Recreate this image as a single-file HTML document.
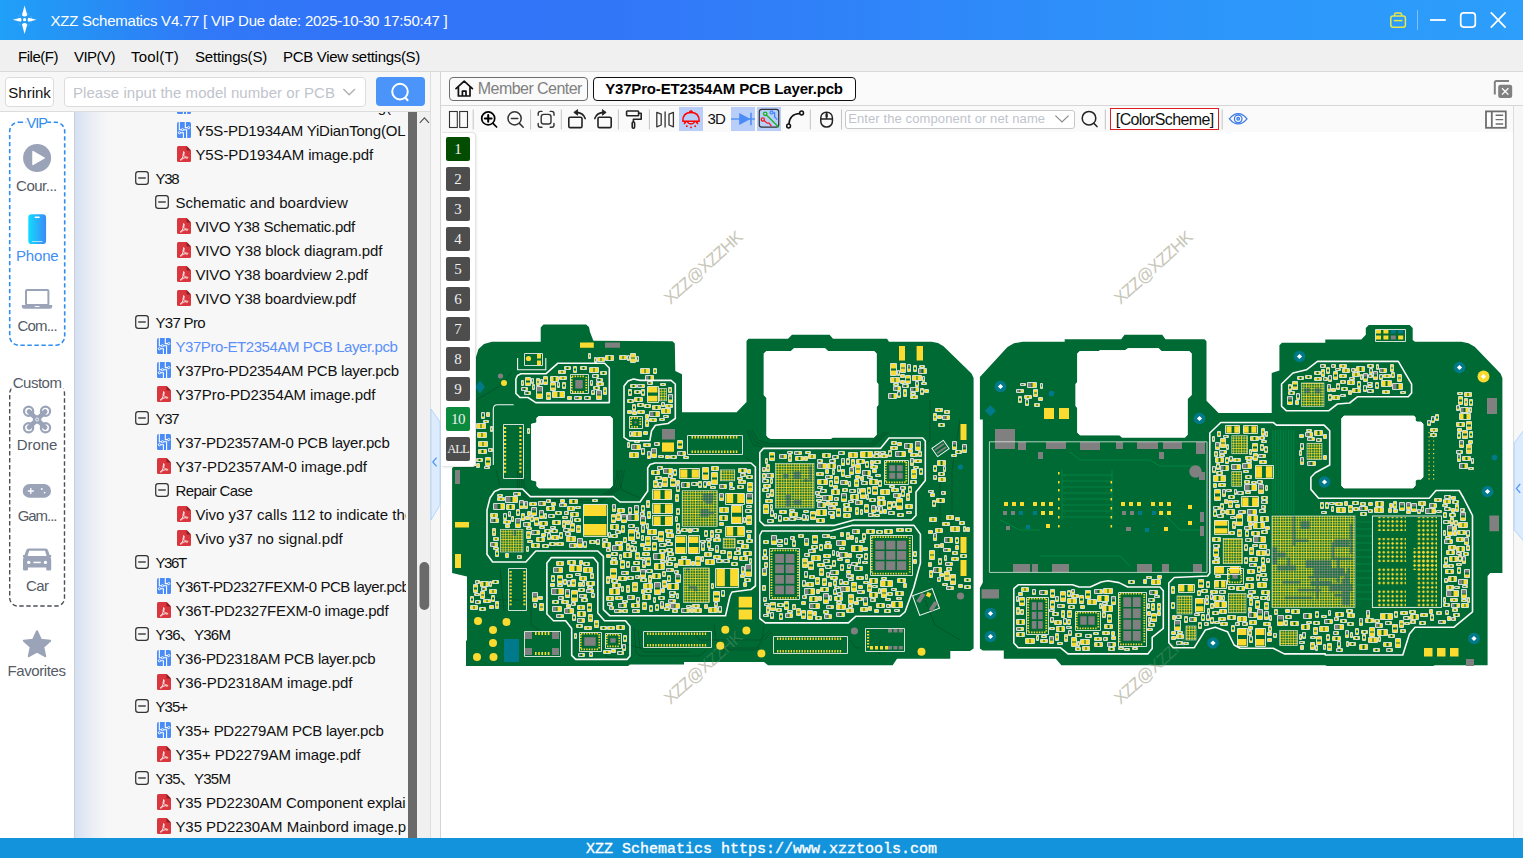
<!DOCTYPE html>
<html><head><meta charset="utf-8"><title>XZZ Schematics</title>
<style>
*{box-sizing:border-box;margin:0;padding:0}
html,body{width:1523px;height:858px;overflow:hidden;background:#fff;font-family:"Liberation Sans","Noto Sans CJK SC",sans-serif;color:#111}
.abs{position:absolute}
.tx{position:absolute;white-space:nowrap}
.ic{position:absolute;overflow:visible}
#title{left:0;top:0;width:1523px;height:40px;background:linear-gradient(90deg,#20a0f8 0%,#2592f5 5%,#3079f7 13%,#3274f8 22%,#3276f8 40%,#2f86f9 60%,#2d96fa 80%,#2c9efb 100%);color:#fff}
#title .t{left:50px;top:10px;font-size:15px;white-space:nowrap;line-height:20px}
#menu{left:0;top:40px;width:1523px;height:32px;background:#f0f0f0;border-bottom:1px solid #d9d9d9}
#menu span{position:absolute;top:6px;font-size:15px;line-height:20px;white-space:nowrap;color:#000}
#leftbg{left:0;top:72px;width:430px;height:766px;background:#f7f7f7}
#searchrow{left:0;top:72px;width:430px;height:40px;background:#f7f7f7;border-bottom:1px solid #dcdcdc}
#shrink{left:5px;top:77px;width:49px;height:30px;border:1px solid #dcdcdc;border-radius:4px;background:#fff;font-size:16px;line-height:28px;text-align:center;color:#111}
#sinput{left:64px;top:77px;width:302px;height:30px;border:1px solid #dcdcdc;border-radius:4px;background:#fff;font-size:15px;line-height:28px;color:#c0c4cc;padding-left:8px;white-space:nowrap}
#sbtn{left:376px;top:77px;width:49px;height:29px;border-radius:4px;background:#4b94fa}
#side{left:0;top:112px;width:74px;height:726px;background:#fff}
#tree{left:74px;top:112px;width:332px;height:726px;background:linear-gradient(90deg,#cfcfcf 0,#cfcfcf 0.8px,#d3e0f5 1px,#e3e9f3 11px,#eef0f5 22px,#f7f7f7 34px);overflow:hidden}
.row{position:absolute;height:24px;line-height:24px;font-size:15px;white-space:nowrap;color:#111}
#darkbar{left:408px;top:112px;width:9px;height:726px;background:#6a6a6a}
#vtrack{left:417px;top:112px;width:13px;height:726px;background:#f0f0f0}
#split{left:430px;top:72px;width:11px;height:766px;background:#f7f7f7;border-left:1px solid #dedede;border-right:1px solid #d4d4d4}
#right{left:441px;top:72px;width:1082px;height:766px;background:#fff}
#tabrow{left:441px;top:72px;width:1082px;height:34px;background:#fafafa;border-bottom:1px solid #d6d6d6}
#toolrow{left:441px;top:106px;width:1072px;height:26px;background:#fafafa}
#rstrip{left:1513px;top:106px;width:10px;height:733px;background:#f7f7f7;border-left:1px solid #dcdcdc}
#status{left:0;top:838px;width:1523px;height:20px;background:#1393db;color:#fff;font-family:"Liberation Mono",monospace;font-size:15px;line-height:23px;text-align:center;white-space:pre;-webkit-text-stroke:0.35px #fff}
</style></head><body>
<svg width="0" height="0" style="position:absolute"><defs>
<symbol id="i-exp" viewBox="0 0 14 14"><rect x="0.7" y="0.7" width="12.6" height="12.6" rx="2.6" fill="#f6f6f6" stroke="#333" stroke-width="1.25"/><path d="M3.2 7H10.8" stroke="#1a1a1a" stroke-width="1.2"/></symbol>
<symbol id="i-pcb" viewBox="0 0 14 16"><rect width="14" height="16" rx="1.6" fill="#4b8bf5"/><g fill="none" stroke="#fff" stroke-width="1.1"><path d="M2.3 0V7.7H9.6V16"/><path d="M2.4 10.7H6.4V16"/><path d="M8.3 0V5.6H11.7"/></g><g fill="#4b8bf5" stroke="#fff" stroke-width="0.9"><circle cx="5.5" cy="7.7" r="1.1"/><circle cx="2.4" cy="10.7" r="1.1"/><circle cx="11.7" cy="5.6" r="1.1"/></g></symbol>
<symbol id="i-pdf" viewBox="0 0 14 16"><path d="M1.5 0H9.6L14 4.4V14.5Q14 16 12.5 16H1.5Q0 16 0 14.5V1.5Q0 0 1.5 0Z" fill="#d9363e"/><path d="M9.6 0L14 4.4H10.8Q9.6 4.4 9.6 3.2Z" fill="#8e1d24"/><path d="M6.6 5.6c.6 0 .8.9.5 2.1-.1.5-.3 1-.5 1.500.6.900 1.300 1.500 2.100 1.800 1.100-.1 2.100.1 2.100.700 0 .7-1.200.6-2.300 0-1 .1-2 .4-2.900.800-.8 1.300-1.600 2.100-2.100 1.700-.5-.4.3-1.300 1.600-1.900.5-.9.900-1.800 1.100-2.600-.4-1.200-.3-2.400.3-2.400z" fill="none" stroke="#fff" stroke-width="0.9" stroke-linejoin="round"/></symbol>
</defs></svg>
<div id="title" class="abs"><div class="tx" style="left:50.5px;top:8.5px;height:24px;line-height:24px;font-size:15px;color:#fff;letter-spacing:-0.238px;">XZZ Schematics V4.77 [ VIP Due date: 2025-10-30 17:50:47 ]</div><svg class="ic" style="left:0;top:0" width="1523" height="40" viewBox="0 0 1523 40"><path d="M24.600 5.400L27.300 15.200Q24.600 17.600 21.900 15.200Z" fill="#fff"/><path d="M24.600 34L27.300 24.200Q24.600 21.800 21.900 24.200Z" fill="#fff"/><path d="M12.600 19.700L20.800 17.700Q22.400 19.700 20.800 21.700Z" fill="#fff"/><path d="M36.600 19.700L28.400 17.700Q26.800 19.700 28.400 21.700Z" fill="#fff"/><circle cx="24.600" cy="19.700" r="1.600" fill="#fff"/><circle cx="24.600" cy="19.700" r="7" fill="none" stroke="#fff" stroke-opacity="0.25" stroke-width="0.800" stroke-dasharray="3 2"/><g fill="none" stroke="#e6e84a" stroke-width="1.500"><rect x="1390.800" y="16" width="14.600" height="11.200" rx="2.200"/><path d="M1394.600 16V14.600Q1394.600 13 1396.200 13H1400Q1401.600 13 1401.600 14.600V16"/><path d="M1393.800 20.600H1402.400"/></g><path d="M1417.500 10V30" stroke="#7fc0fb" stroke-width="1"/><path d="M1430 20H1445.800" stroke="#fff" stroke-width="1.800"/><rect x="1460.700" y="12.900" width="14.600" height="14.200" rx="3" fill="none" stroke="#fff" stroke-width="1.700"/><path d="M1490.800 12.400L1505.600 27.600M1505.600 12.400L1490.800 27.600" stroke="#fff" stroke-width="1.700"/></svg></div>
<div id="menu" class="abs"><div class="tx" style="left:18px;top:4.5px;height:24px;line-height:24px;font-size:15px;color:#000;letter-spacing:-0.475px;">File(F)</div><div class="tx" style="left:74px;top:4.5px;height:24px;line-height:24px;font-size:15px;color:#000;letter-spacing:-0.529px;">VIP(V)</div><div class="tx" style="left:131px;top:4.5px;height:24px;line-height:24px;font-size:15px;color:#000;letter-spacing:0.19px;">Tool(T)</div><div class="tx" style="left:195px;top:4.5px;height:24px;line-height:24px;font-size:15px;color:#000;letter-spacing:-0.2px;">Settings(S)</div><div class="tx" style="left:283px;top:4.5px;height:24px;line-height:24px;font-size:15px;color:#000;letter-spacing:-0.306px;">PCB View settings(S)</div></div>
<div id="leftbg" class="abs"></div>
<div id="searchrow" class="abs"></div>
<div id="shrink" class="abs"></div><div class="tx" style="left:8.3px;top:80.8px;height:24px;line-height:24px;font-size:15px;color:#111;letter-spacing:-0.003px;">Shrink</div>
<div id="sinput" class="abs"></div><div class="tx" style="left:73px;top:80.8px;height:24px;line-height:24px;font-size:15px;color:#c0c4cc;letter-spacing:0.051px;">Please input the model number or PCB</div>
<div id="sbtn" class="abs"></div>
<div id="side" class="abs"><svg class="ic" style="left:0;top:0" width="74" height="726" viewBox="0 112 74 726"><rect x="9.7" y="122.2" width="55" height="223" rx="9" fill="none" stroke="#2f8df0" stroke-width="1.6" stroke-dasharray="4.4 2.6"/><rect x="26.200" y="118" width="21" height="9" fill="#fff"/><rect x="9.7" y="385.6" width="54.8" height="220.4" rx="8" fill="none" stroke="#4a4f57" stroke-width="1.4" stroke-dasharray="4.4 2.6"/><rect x="11.5" y="376" width="51.5" height="14" fill="#fff"/><circle cx="37.1" cy="158" r="14" fill="#9aa3b8"/><path d="M32.8 151.2V164.8L44.6 158Z" fill="#fff" stroke="#fff" stroke-width="1" stroke-linejoin="round"/><defs><linearGradient id="gph" x1="0" x2="1" y1="0" y2="0"><stop offset="0" stop-color="#10dcff"/><stop offset="1" stop-color="#3c8af6"/></linearGradient></defs><rect x="28.3" y="214.3" width="17.8" height="29.8" rx="3.4" fill="url(#gph)"/><rect x="34.6" y="216.6" width="5.2" height="1.3" rx="0.6" fill="#fff"/><rect x="32" y="241" width="10.4" height="0.9" fill="#bfe8ff"/><rect x="26" y="290" width="22.4" height="15" rx="1" fill="none" stroke="#9aa3b8" stroke-width="2"/><path d="M21.8 305H52.2V306.4Q52.2 308.8 49.8 308.8H24.2Q21.8 308.8 21.8 306.4Z" fill="#9aa3b8"/><rect x="34.8" y="306" width="4.6" height="1" fill="#fff"/><g stroke="#9aa3b8" fill="none"><path d="M29 411.500L45.200 427.500M45.200 411.500L29 427.500" stroke-width="4.6" stroke-linecap="round"/><circle cx="28.600" cy="411.200" r="4.600" stroke-width="2.200"/><circle cx="45.500" cy="411.200" r="4.600" stroke-width="2.200"/><circle cx="28.600" cy="427.800" r="4.600" stroke-width="2.200"/><circle cx="45.500" cy="427.800" r="4.600" stroke-width="2.200"/></g><circle cx="37.100" cy="419.500" r="4.200" fill="#9aa3b8"/><circle cx="37.100" cy="419.500" r="1.500" fill="none" stroke="#fff" stroke-width="0.800"/><rect x="22.700" y="484" width="28.300" height="13.800" rx="6.900" fill="#9aa3b8"/><path d="M27.800 491H33.800M30.800 488V494" stroke="#fff" stroke-width="1.300"/><circle cx="41.800" cy="489" r="0.900" fill="#fff"/><circle cx="44.600" cy="492.600" r="0.900" fill="#fff"/><path d="M28.500 548.500H45.700Q47.300 548.500 47.900 550L49.700 555H51.200V557.200H50.200Q51.200 558.200 51.200 559.600V569.200Q51.200 570.600 49.800 570.600H47.600Q46.200 570.600 46.200 569.200V567.400H28V569.200Q28 570.600 26.600 570.600H24.400Q23 570.600 23 569.200V559.600Q23 558.200 24 557.200H23V555H24.500L26.300 550Q26.900 548.500 28.500 548.500Z" fill="#9aa3b8"/><path d="M29.200 550.800H45L46.600 556H27.600Z" fill="#fff"/><circle cx="28.800" cy="562.400" r="1.700" fill="#fff"/><circle cx="45.400" cy="562.400" r="1.700" fill="#fff"/><rect x="33.400" y="561.700" width="7.400" height="1.500" fill="#fff"/><path d="M37 631.200L40.900 639.700L50.200 640.700L43.300 647L45.200 656.200L37 651.600L28.800 656.200L30.700 647L23.800 640.700L33.100 639.700Z" fill="#9aa3b8" stroke="#9aa3b8" stroke-width="2" stroke-linejoin="round"/></svg>
<div class="tx" style="left:26.6px;top:2.5999999999999943px;height:16px;line-height:16px;font-size:14.5px;color:#2f8df0;letter-spacing:-1.024px;">VIP</div>
<div class="tx" style="left:16.1px;top:63.5px;height:20px;line-height:20px;font-size:15px;color:#555b66;letter-spacing:-0.513px;">Cour...</div>
<div class="tx" style="left:16px;top:133.5px;height:20px;line-height:20px;font-size:15px;color:#3f8ef5;letter-spacing:-0.175px;">Phone</div>
<div class="tx" style="left:17.5px;top:203.8px;height:20px;line-height:20px;font-size:15px;color:#555b66;letter-spacing:-0.812px;">Com...</div>
<div class="tx" style="left:12.7px;top:261.0px;height:20px;line-height:20px;font-size:15px;color:#555b66;letter-spacing:-0.48px;">Custom</div>
<div class="tx" style="left:16.8px;top:323.4px;height:20px;line-height:20px;font-size:15px;color:#555b66;letter-spacing:-0.051px;">Drone</div>
<div class="tx" style="left:17.7px;top:393.70000000000005px;height:20px;line-height:20px;font-size:15px;color:#555b66;letter-spacing:-1.051px;">Gam...</div>
<div class="tx" style="left:26px;top:463.9px;height:20px;line-height:20px;font-size:15px;color:#555b66;letter-spacing:-0.59px;">Car</div>
<div class="tx" style="left:7.5px;top:548.6px;height:20px;line-height:20px;font-size:15px;color:#555b66;letter-spacing:-0.398px;">Favorites</div></div>
<div id="tree" class="abs"><svg class="ic" style="left:103.0px;top:-14px" width="14" height="16" viewBox="0 0 14 16"><use href="#i-pcb"/></svg>
<div class="tx" style="left:121.4px;top:-17.5px;height:24px;line-height:24px;font-size:15px;color:#111;letter-spacing:0.026px;">Y5S-PD1934AM YiDianTong(LCD).pcb</div>
<svg class="ic" style="left:103.0px;top:10px" width="14" height="16" viewBox="0 0 14 16"><use href="#i-pcb"/></svg>
<div class="tx" style="left:121.4px;top:6.5px;height:24px;line-height:24px;font-size:15px;color:#111;letter-spacing:-0.201px;">Y5S-PD1934AM YiDianTong(OLED).pcb</div>
<svg class="ic" style="left:103.0px;top:34px" width="14" height="16" viewBox="0 0 14 16"><use href="#i-pdf"/></svg>
<div class="tx" style="left:121.4px;top:30.5px;height:24px;line-height:24px;font-size:15px;color:#111;letter-spacing:-0.114px;">Y5S-PD1934AM image.pdf</div>
<svg class="ic" style="left:61px;top:59px" width="14" height="14" viewBox="0 0 14 14"><use href="#i-exp"/></svg>
<div class="tx" style="left:81.4px;top:54.5px;height:24px;line-height:24px;font-size:15px;color:#111;letter-spacing:-1.197px;">Y38</div>
<svg class="ic" style="left:81px;top:83px" width="14" height="14" viewBox="0 0 14 14"><use href="#i-exp"/></svg>
<div class="tx" style="left:101.4px;top:78.5px;height:24px;line-height:24px;font-size:15px;color:#111;letter-spacing:0.028px;">Schematic and boardview</div>
<svg class="ic" style="left:103.0px;top:106px" width="14" height="16" viewBox="0 0 14 16"><use href="#i-pdf"/></svg>
<div class="tx" style="left:121.4px;top:102.5px;height:24px;line-height:24px;font-size:15px;color:#111;letter-spacing:-0.279px;">VIVO Y38 Schematic.pdf</div>
<svg class="ic" style="left:103.0px;top:130px" width="14" height="16" viewBox="0 0 14 16"><use href="#i-pdf"/></svg>
<div class="tx" style="left:121.4px;top:126.5px;height:24px;line-height:24px;font-size:15px;color:#111;letter-spacing:-0.077px;">VIVO Y38 block diagram.pdf</div>
<svg class="ic" style="left:103.0px;top:154px" width="14" height="16" viewBox="0 0 14 16"><use href="#i-pdf"/></svg>
<div class="tx" style="left:121.4px;top:150.5px;height:24px;line-height:24px;font-size:15px;color:#111;letter-spacing:-0.175px;">VIVO Y38 boardview 2.pdf</div>
<svg class="ic" style="left:103.0px;top:178px" width="14" height="16" viewBox="0 0 14 16"><use href="#i-pdf"/></svg>
<div class="tx" style="left:121.4px;top:174.5px;height:24px;line-height:24px;font-size:15px;color:#111;letter-spacing:-0.126px;">VIVO Y38 boardview.pdf</div>
<svg class="ic" style="left:61px;top:203px" width="14" height="14" viewBox="0 0 14 14"><use href="#i-exp"/></svg>
<div class="tx" style="left:81.4px;top:198.5px;height:24px;line-height:24px;font-size:15px;color:#111;letter-spacing:-0.657px;">Y37 Pro</div>
<svg class="ic" style="left:83.0px;top:226px" width="14" height="16" viewBox="0 0 14 16"><use href="#i-pcb"/></svg>
<div class="tx" style="left:101.4px;top:222.5px;height:24px;line-height:24px;font-size:15px;color:#5b8ff9;letter-spacing:-0.424px;">Y37Pro-ET2354AM PCB Layer.pcb</div>
<svg class="ic" style="left:83.0px;top:250px" width="14" height="16" viewBox="0 0 14 16"><use href="#i-pcb"/></svg>
<div class="tx" style="left:101.4px;top:246.5px;height:24px;line-height:24px;font-size:15px;color:#111;letter-spacing:-0.261px;">Y37Pro-PD2354AM PCB layer.pcb</div>
<svg class="ic" style="left:83.0px;top:274px" width="14" height="16" viewBox="0 0 14 16"><use href="#i-pdf"/></svg>
<div class="tx" style="left:101.4px;top:270.5px;height:24px;line-height:24px;font-size:15px;color:#111;letter-spacing:-0.075px;">Y37Pro-PD2354AM image.pdf</div>
<svg class="ic" style="left:61px;top:299px" width="14" height="14" viewBox="0 0 14 14"><use href="#i-exp"/></svg>
<div class="tx" style="left:81.4px;top:294.5px;height:24px;line-height:24px;font-size:15px;color:#111;letter-spacing:-1.197px;">Y37</div>
<svg class="ic" style="left:83.0px;top:322px" width="14" height="16" viewBox="0 0 14 16"><use href="#i-pcb"/></svg>
<div class="tx" style="left:101.4px;top:318.5px;height:24px;line-height:24px;font-size:15px;color:#111;letter-spacing:-0.245px;">Y37-PD2357AM-0 PCB layer.pcb</div>
<svg class="ic" style="left:83.0px;top:346px" width="14" height="16" viewBox="0 0 14 16"><use href="#i-pdf"/></svg>
<div class="tx" style="left:101.4px;top:342.5px;height:24px;line-height:24px;font-size:15px;color:#111;letter-spacing:-0.012px;">Y37-PD2357AM-0 image.pdf</div>
<svg class="ic" style="left:81px;top:371px" width="14" height="14" viewBox="0 0 14 14"><use href="#i-exp"/></svg>
<div class="tx" style="left:101.4px;top:366.5px;height:24px;line-height:24px;font-size:15px;color:#111;letter-spacing:-0.589px;">Repair Case</div>
<svg class="ic" style="left:103.0px;top:394px" width="14" height="16" viewBox="0 0 14 16"><use href="#i-pdf"/></svg>
<div class="tx" style="left:121.4px;top:390.5px;height:24px;line-height:24px;font-size:15px;color:#111;letter-spacing:0.023px;">Vivo y37 calls 112 to indicate the fault.pdf</div>
<svg class="ic" style="left:103.0px;top:418px" width="14" height="16" viewBox="0 0 14 16"><use href="#i-pdf"/></svg>
<div class="tx" style="left:121.4px;top:414.5px;height:24px;line-height:24px;font-size:15px;color:#111;letter-spacing:0.041px;">Vivo y37 no signal.pdf</div>
<svg class="ic" style="left:61px;top:443px" width="14" height="14" viewBox="0 0 14 14"><use href="#i-exp"/></svg>
<div class="tx" style="left:81.4px;top:438.5px;height:24px;line-height:24px;font-size:15px;color:#111;letter-spacing:-1.338px;">Y36T</div>
<svg class="ic" style="left:83.0px;top:466px" width="14" height="16" viewBox="0 0 14 16"><use href="#i-pcb"/></svg>
<div class="tx" style="left:101.4px;top:462.5px;height:24px;line-height:24px;font-size:15px;color:#111;letter-spacing:-0.467px;">Y36T-PD2327FEXM-0 PCB layer.pcb</div>
<svg class="ic" style="left:83.0px;top:490px" width="14" height="16" viewBox="0 0 14 16"><use href="#i-pdf"/></svg>
<div class="tx" style="left:101.4px;top:486.5px;height:24px;line-height:24px;font-size:15px;color:#111;letter-spacing:-0.233px;">Y36T-PD2327FEXM-0 image.pdf</div>
<svg class="ic" style="left:61px;top:515px" width="14" height="14" viewBox="0 0 14 14"><use href="#i-exp"/></svg>
<div class="tx" style="left:81.4px;top:510.5px;height:24px;line-height:24px;font-size:15px;letter-spacing:-0.76px;">Y36、Y36M</div>
<svg class="ic" style="left:83.0px;top:538px" width="14" height="16" viewBox="0 0 14 16"><use href="#i-pcb"/></svg>
<div class="tx" style="left:101.4px;top:534.5px;height:24px;line-height:24px;font-size:15px;color:#111;letter-spacing:-0.297px;">Y36-PD2318AM PCB layer.pcb</div>
<svg class="ic" style="left:83.0px;top:562px" width="14" height="16" viewBox="0 0 14 16"><use href="#i-pdf"/></svg>
<div class="tx" style="left:101.4px;top:558.5px;height:24px;line-height:24px;font-size:15px;color:#111;letter-spacing:-0.07px;">Y36-PD2318AM image.pdf</div>
<svg class="ic" style="left:61px;top:587px" width="14" height="14" viewBox="0 0 14 14"><use href="#i-exp"/></svg>
<div class="tx" style="left:81.4px;top:582.5px;height:24px;line-height:24px;font-size:15px;color:#111;letter-spacing:-0.913px;">Y35+</div>
<svg class="ic" style="left:83.0px;top:610px" width="14" height="16" viewBox="0 0 14 16"><use href="#i-pcb"/></svg>
<div class="tx" style="left:101.4px;top:606.5px;height:24px;line-height:24px;font-size:15px;color:#111;letter-spacing:-0.276px;">Y35+ PD2279AM PCB layer.pcb</div>
<svg class="ic" style="left:83.0px;top:634px" width="14" height="16" viewBox="0 0 14 16"><use href="#i-pdf"/></svg>
<div class="tx" style="left:101.4px;top:630.5px;height:24px;line-height:24px;font-size:15px;color:#111;letter-spacing:-0.06px;">Y35+ PD2279AM image.pdf</div>
<svg class="ic" style="left:61px;top:659px" width="14" height="14" viewBox="0 0 14 14"><use href="#i-exp"/></svg>
<div class="tx" style="left:81.4px;top:654.5px;height:24px;line-height:24px;font-size:15px;letter-spacing:-0.76px;">Y35、Y35M</div>
<svg class="ic" style="left:83.0px;top:682px" width="14" height="16" viewBox="0 0 14 16"><use href="#i-pdf"/></svg>
<div class="tx" style="left:101.4px;top:678.5px;height:24px;line-height:24px;font-size:15px;color:#111;letter-spacing:-0.084px;">Y35 PD2230AM Component explain.pdf</div>
<svg class="ic" style="left:83.0px;top:706px" width="14" height="16" viewBox="0 0 14 16"><use href="#i-pdf"/></svg>
<div class="tx" style="left:101.4px;top:702.5px;height:24px;line-height:24px;font-size:15px;color:#111;letter-spacing:-0.035px;">Y35 PD2230AM Mainbord image.pdf</div></div>
<div id="darkbar" class="abs"></div>
<div id="vtrack" class="abs"></div>
<div id="split" class="abs"></div>
<div id="right" class="abs"></div>
<div id="tabrow" class="abs"></div><div class="abs" style="left:449px;top:77px;width:139px;height:24px;border:1px solid #6e6e6e;border-radius:4px;background:#fafafa"></div>
<div class="abs" style="left:593px;top:77px;width:263px;height:24px;border:1.4px solid #111;border-radius:4px;background:#fff"></div>
<svg class="ic" style="left:441px;top:72px" width="1082" height="34" viewBox="441 72 1082 34"><path d="M456 88.600L464.200 81.200L472.400 88.600M458.400 87.400V96H470V87.400M462.400 96V91.200H466V96" fill="none" stroke="#111" stroke-width="1.700" stroke-linejoin="round" stroke-linecap="round"/><path d="M1494.800 94.600V82.600Q1494.800 81 1496.400 81H1509" fill="none" stroke="#808080" stroke-width="2"/><rect x="1498.200" y="84.800" width="14" height="13.200" rx="2.200" fill="#808080"/><path d="M1502 88.200L1508.400 94.600M1508.400 88.200L1502 94.600" stroke="#fff" stroke-width="1.300"/></svg>
<div class="tx" style="left:477.8px;top:77.6px;height:22px;line-height:22px;font-size:16px;color:#808080;letter-spacing:-0.55px;">Member Center</div>
<div class="tx" style="left:605.2px;top:77.8px;height:22px;line-height:22px;font-size:15px;color:#000;letter-spacing:-0.172px;font-weight:bold;">Y37Pro-ET2354AM PCB Layer.pcb</div>
<div id="toolrow" class="abs"></div><div id="rstrip" class="abs"></div><div class="abs" style="left:679px;top:107px;width:24px;height:24px;background:#b9cef9"></div>
<div class="abs" style="left:731px;top:107px;width:24px;height:24px;background:#b9cef9"></div>
<div class="abs" style="left:757px;top:107px;width:24px;height:24px;background:#b9cef9"></div>
<div class="abs" style="left:845px;top:110px;width:230px;height:19px;border:1px solid #c8c8c8;border-radius:3px;background:#fff"></div>
<div class="abs" style="left:1110px;top:108px;width:109px;height:22px;border:1.5px solid #e02020;background:#fff"></div>
<svg class="ic" style="left:441px;top:105px" width="1082" height="29" viewBox="441 105 1082 29"><path d="M473.2 109.500V129.500M530.6 109.500V129.500M561.3 109.500V129.500M618.4 109.500V129.500M649.4 109.500V129.500M810.3 109.500V129.500M841.5 109.500V129.500M1105.3 109.500V129.500M1222.2 109.500V129.500" stroke="#c4c4c4" stroke-width="1" fill="none"/><g fill="none" stroke="#333" stroke-width="1.100"><rect x="449.500" y="111.500" width="7.800" height="16"/><rect x="459.700" y="111.500" width="7.800" height="16"/></g><g fill="none" stroke="#000" stroke-width="1.700" stroke-linecap="round"><circle cx="488.200" cy="118.400" r="6.500"/><path d="M493 123.400L496.600 127"/><path d="M484.800 118.400H491.600M488.200 115V121.800" stroke-width="2"/></g><g fill="none" stroke="#333" stroke-width="1.500" stroke-linecap="round"><circle cx="514.600" cy="118.400" r="6.600"/><path d="M519.400 123.400L523.200 127.200"/><path d="M511.400 118.400H517.800"/></g><g fill="none" stroke="#333" stroke-width="1.400" stroke-linecap="round"><rect x="541.200" y="114.400" width="9.800" height="9.600" rx="2.600"/><path d="M538.200 115.200V113.600Q538.200 111.400 540.400 111.400H542M550.200 111.400H551.800Q554 111.400 554 113.600V115.200M554 123.400V125Q554 127.200 551.800 127.200H550.200M542 127.200H540.400Q538.200 127.200 538.200 125V123.400"/></g><g fill="none" stroke="#222" stroke-width="1.600" stroke-linejoin="round" stroke-linecap="round"><rect x="568.800" y="117.200" width="13.200" height="10.400" rx="1.400"/><path d="M585.200 118.600Q583.400 112.600 576 112.400"/></g><path d="M573.800 112.400L577.600 109.600V115.200Z" fill="#222" stroke="#222" stroke-width="0.800" stroke-linejoin="round"/><g fill="none" stroke="#222" stroke-width="1.600" stroke-linejoin="round" stroke-linecap="round"><rect x="598" y="117.200" width="13.200" height="10.400" rx="1.400"/><path d="M594.800 118.600Q596.600 112.600 604 112.400"/></g><path d="M606.200 112.400L602.400 109.600V115.200Z" fill="#222" stroke="#222" stroke-width="0.800" stroke-linejoin="round"/><g fill="none" stroke="#222" stroke-width="1.600" stroke-linejoin="round"><rect x="626.600" y="111" width="12" height="4.800" rx="0.800"/><path d="M638.600 113.200H641.200V119.200H633.400V122"/><rect x="632.200" y="122" width="2.400" height="6.200" rx="1.100"/></g><g fill="none" stroke="#333" stroke-width="1.300" stroke-linejoin="round"><path d="M656.800 112.400L661.200 114.200V125L656.800 126.800Z"/><path d="M673.400 112.400L669 114.200V125L673.400 126.800Z"/><path d="M665.100 111.600V127.600"/></g><g fill="none" stroke="#f00" stroke-width="1.500" stroke-linecap="round"><path d="M682.800 121.200Q682.800 112.600 691 112.600Q699.200 112.600 699.200 121.200Z" stroke-linejoin="round"/><path d="M689.600 112.200Q691 110 692.400 112.200"/><path d="M687 121.600Q691 126.600 695 121.600"/><path d="M684.400 123.400L685.400 122.400M697.600 123.400L696.600 122.400" /></g><circle cx="686.800" cy="126.200" r="0.900" fill="#f00"/><circle cx="691" cy="127.400" r="0.900" fill="#f00"/><circle cx="695.200" cy="126.200" r="0.900" fill="#f00"/><path d="M731 119H755" stroke="#4b8bf5" stroke-width="1.300"/><path d="M739.200 113V125L750.400 119Z" fill="#4b8bf5"/><path d="M751 112.800V125.200" stroke="#4b8bf5" stroke-width="1.500"/><rect x="759.300" y="109.300" width="19.400" height="17.800" rx="2.400" fill="none" stroke="#333" stroke-width="1.200"/><g fill="none" stroke-width="1.300"><circle cx="765.200" cy="113.800" r="1.700" stroke="#1db31d"/><path d="M766.400 115L778.800 127.200" stroke="#1db31d"/><circle cx="771.600" cy="112.400" r="1.500" stroke="#3c8af6"/><path d="M773 112.800H774.600V116.800L777.200 119.600" stroke="#3c8af6"/><circle cx="762.800" cy="119.400" r="1.600" stroke="#f02020"/><path d="M764 120.600L767.200 123.200H769.200L771.400 126.200" stroke="#f02020"/></g><g fill="none" stroke="#111" stroke-width="1.500"><path d="M788.800 124.600Q789.400 113.800 799.800 113.400"/><circle cx="788.600" cy="126" r="1.900" fill="#f7f7f7"/><circle cx="801.600" cy="113" r="1.900" fill="#f7f7f7"/></g><g fill="none" stroke="#222" stroke-width="1.500"><rect x="820.800" y="112.200" width="11.600" height="14.800" rx="5.600"/><path d="M820.800 119H832.400"/><path d="M826.600 112.200V119"/></g><rect x="825.500" y="113.600" width="2.200" height="4" rx="1.100" fill="#222"/><path d="M1055.400 115.600L1062 122L1068.600 115.600" fill="none" stroke="#8a8a8a" stroke-width="1.200"/><g fill="none" stroke="#222" stroke-width="1.500" stroke-linecap="round"><circle cx="1089" cy="118.200" r="6.800"/><path d="M1094 123.400L1097 126.600"/></g><g fill="none" stroke="#3c7be6" stroke-width="1.300"><path d="M1229.400 118.800Q1238.200 108.600 1247 118.800Q1238.200 129 1229.400 118.800Z"/><circle cx="1238.200" cy="118.800" r="3.800"/><circle cx="1238.200" cy="118.800" r="1.300"/></g><g fill="none" stroke="#6e6e6e" stroke-width="1.800"><rect x="1486" y="111.400" width="19.800" height="16.400" fill="#fff"/><path d="M1491.800 111.400V127.800"/><path d="M1495.600 115.200H1503.200M1495.600 119.600H1503.200M1495.600 124H1503.200" stroke-width="1.400"/></g></svg>
<div class="tx" style="left:707.4px;top:109.3px;height:20px;line-height:20px;font-size:15px;color:#111;letter-spacing:-0.688px;">3D</div>
<div class="tx" style="left:848.2px;top:109.8px;height:18px;line-height:18px;font-size:13px;color:#c0c4cc;letter-spacing:0.107px;">Enter the component or net name</div>
<div class="tx" style="left:1115.8px;top:109.6px;height:20px;line-height:20px;font-size:16px;color:#111;letter-spacing:-0.617px;">[ColorScheme]</div>
<svg class="ic" style="left:0;top:0" width="1523" height="858" viewBox="0 0 1523 858">
<defs><pattern id="bgaY" width="2.6" height="2.6" patternUnits="userSpaceOnUse"><rect width="2.6" height="2.6" fill="#006a34"/><path d="M1.3 0L2.6 1.3L1.3 2.6L0 1.3Z" fill="#fcdb30"/></pattern><pattern id="bgaG" width="2.6" height="2.6" patternUnits="userSpaceOnUse"><rect width="2.6" height="2.6" fill="#006a34"/><path d="M1.3 0L2.6 1.3L1.3 2.6L0 1.3Z" fill="#8a8a80"/></pattern><pattern id="bgaS" width="4.4" height="4.4" patternUnits="userSpaceOnUse"><path d="M2.2 0.6L3.8 2.2L2.2 3.8L0.6 2.2Z" fill="#fcdb30"/></pattern><pattern id="grid" width="2.4" height="2.4" patternUnits="userSpaceOnUse"><rect width="2.4" height="2.4" fill="#fcdb30"/><rect x="0.6" y="0.6" width="1.4" height="1.4" fill="#006a34"/></pattern></defs>
<text x="703.3" y="273.2" font-family="Liberation Sans,sans-serif" font-size="17" fill="#cdc8bd" fill-opacity="1" text-anchor="middle" transform="rotate(-42.2 703.3 267.4)" textLength="99" lengthAdjust="spacing">XZZ@XZZHK</text>
<text x="1153.3" y="273.2" font-family="Liberation Sans,sans-serif" font-size="17" fill="#cdc8bd" fill-opacity="1" text-anchor="middle" transform="rotate(-42.2 1153.3 267.4)" textLength="99" lengthAdjust="spacing">XZZ@XZZHK</text>
<text x="703.3" y="673.1999999999999" font-family="Liberation Sans,sans-serif" font-size="17" fill="#cdc8bd" fill-opacity="1" text-anchor="middle" transform="rotate(-42.2 703.3 667.4)" textLength="99" lengthAdjust="spacing">XZZ@XZZHK</text>
<text x="1153.3" y="673.1999999999999" font-family="Liberation Sans,sans-serif" font-size="17" fill="#cdc8bd" fill-opacity="1" text-anchor="middle" transform="rotate(-42.2 1153.3 667.4)" textLength="99" lengthAdjust="spacing">XZZ@XZZHK</text>
<path d="M476 357L478.5 349L484 344L492 341.7L540.7 341.7L540.7 327.4L543.5 324.4L586 324.4L589 327L590 332L593.4 340.8L672.5 341.2L674.8 343.5L675.3 371L682 374.2L682 412.3L736.6 412.3L746.5 402L746.5 341L748.5 338.8L788 338.8L792 334.8L829.6 334.8L833 338.8L887 338.8L889 341.7L931.5 341.7L938 343L943.5 346.3L971.5 373.5L973.6 378L973.6 648.4L970 651L950.3 651L950.3 658.8L897 658.8L892.7 665.2L768 665.2L764 662L684 662L684 664.6L630 664.6L628 666L466 666L466 640.6L467 640.6L467 576.4L452.1 573L452.1 468L455 466L476 466ZM979.9 377L1007.5 347L1014 343.3L1022.6 341.7L1064.7 341.7L1064.7 339.2L1121.2 339.2L1124.5 334.8L1162.2 334.8L1165.5 339.2L1204.5 339.2L1206.5 341.2L1206.5 400.8L1218.6 413L1271.7 413L1271.7 373.1L1279.4 370.5L1279.4 345.3L1282 342.8L1325.3 342.8L1325.3 339.5L1361.3 339.5L1365.8 334.8L1365.8 328L1368.8 325L1409.7 325L1412.7 328L1412.7 339.9L1415 341.7L1461.4 341.7L1468.5 343.2L1474.7 346.8L1500.5 373.6L1502.4 378L1502.4 573L1490.2 573L1487.6 576L1487.6 665.2L1435 665.2L1433 666L1327 666L1325 665.2L1268.8 665.2L1061.4 665.2L1055.8 658.8L1003.8 658.8L1003.8 650.6L982.8 650.6L979.9 648.4L979.9 588L982.8 582.6L982.8 419.6L979.9 419.6Z" fill="#006a34"/>
<path d="M539 415.9L610 415.9L612.7 418.6L612.7 485.6L610 488.3L539 488.3L536.5 486L536.5 481.5L531 480L531 424L536.5 422.5L536.5 418ZM766.5 351L791 351L794 348.3L825 348.3L828 351L874 351L876.6 353.6L876.6 382L878.3 384L878.3 405L876.6 407L876.6 434.8L874 437.4L833 437.4L830.5 439L771 439L768 437.4L766.5 435.5L766.5 398L763.8 395L763.8 353.6ZM1080 351L1099 351L1100 350.2L1125 350.2L1128 348.3L1158.6 348.3L1161.5 351L1189 351L1191.6 353.6L1191.6 395L1187.6 399L1187.6 434.8L1185 437.4L1122 437.4L1119.5 435.2L1080 435.2L1077.3 432.6L1077.3 408L1075.6 406L1075.6 384L1077.3 382L1077.3 353.6ZM1344 415.8L1414 415.8L1415.5 417.3L1415.5 420.5L1417 421.8L1421 421.8L1423.3 424L1423.3 477L1421 479.4L1417 479.4L1415.5 481L1415.5 485.5L1413 488.3L1344 488.3L1341.4 485.7L1341.4 418.4Z" fill="#fff"/>
<path d="M524 470L524 486L533 496L600 496L614 488L618 470M521.8 470L521.8 488.2L532.3 498.2L600 498.2L616.2 488L620.2 470M519.6 470L519.6 490.4L531.7 500.4L600 500.4L618.4 488L622.4 470M517.4 470L517.4 492.6L531 502.6L600 502.6L620.6 488L624.6 470M752 430L758 440L770 444L870 444L884 432M749.6 430L755.6 442.4L770 446.4L870 446.4L886.4 432M747.2 430L753.2 444.8L770 448.8L870 448.8L888.8 432M476 400L500 386L512 372M470 590L500 600L540 600M610 640L640 648L690 648M690 630L700 640L760 640L770 630M930 400L930 440L918 452M940 470L940 560M960 420L952 470L952 540M880 640L880 655M634 628L636 652L640 656L700 656L706 650M638 630L640 648L644 652L690 652M714 624L716 640L726 648L760 648M718 660L724 650L756 650L762 640L764 626M764 640L772 632M850 640L856 648L862 648M600 640L606 656L626 660M470 600L486 606L506 606M500 568L504 612M531 600L531 625L540 630M866 460L872 520M925 600L935 625L960 640M690 457L690 462M745 457L752 462M616 470L622 490L640 498M496 470L500 486" fill="none" stroke="#00562a" stroke-width="1"/>
<path d="M1062 475L1112 475M1062 481L1112 481M1062 487L1112 487M1062 493L1112 493M1062 499L1112 499M1062 505L1112 505M1062 511L1112 511M1062 517L1112 517M1062 470L1062 520M1112 470L1112 520M1070 452L1080 460L1150 460L1160 466L1200 466M1040 556L1120 556L1130 566M1150 500L1180 530L1200 530M1000 520L1020 530L1040 530M1273 430L1273 514M1275.6 430L1275.6 514M1278.2 430L1278.2 514M1280.8 430L1280.8 514M1283.4 430L1283.4 514M1286 430L1286 514M1288.6 430L1288.6 514M1291.2 430L1291.2 514M1293.8 430L1293.8 514M1356 522L1372 522M1356 529L1372 529M1356 536L1372 536M1356 543L1372 543M1356 550L1372 550M1356 557L1372 557M1356 564L1372 564M1356 571L1372 571M1356 578L1372 578M1356 585L1372 585M1356 592L1372 592M1356 599L1372 599" fill="none" stroke="#008746" stroke-width="0.9"/>
<path d="M653.5 490.3h6.948v8.7h-6.948zM664.652 490.3h6.948v8.7h-6.948zM653.5 504.2h7.128v8.7h-7.128zM664.972 504.2h7.128v8.7h-7.128zM653.5 516.4h7.128v9.3h-7.128zM664.972 516.4h7.128v9.3h-7.128zM680.2 469.5h7.164v8.3h-7.164zM691.736 469.5h7.164v8.3h-7.164zM726.4 493.6h6.768v9.4h-6.768zM737.232 493.6h6.768v9.4h-6.768zM731.8 506.1h9.6v6.66h-9.6zM731.8 516.74h9.6v6.66h-9.6zM726.4 526.6h6.768v9.1h-6.768zM737.232 526.6h6.768v9.1h-6.768zM675.9 536.5h9.5v6.552h-9.5zM675.9 546.948h9.5v6.552h-9.5zM688.8 536.5h9.6v6.552h-9.6zM688.8 546.948h9.6v6.552h-9.6zM716.5 568.6h8.352v17.6h-8.352zM730.148 568.6h8.352v17.6h-8.352zM583.6 504.6h22.8v11.52h-22.8zM583.6 523.88h22.8v11.52h-22.8zM572 375.5h1.4v1.8h-1.4zM572 391.1h1.4v1.8h-1.4zM574.6 375.5h1.4v1.8h-1.4zM574.6 391.1h1.4v1.8h-1.4zM577.2 375.5h1.4v1.8h-1.4zM577.2 391.1h1.4v1.8h-1.4zM579.8 375.5h1.4v1.8h-1.4zM579.8 391.1h1.4v1.8h-1.4zM582.4 375.5h1.4v1.8h-1.4zM582.4 391.1h1.4v1.8h-1.4zM570.8 376.7h1.8v1.4h-1.8zM585.4 376.7h1.8v1.4h-1.8zM570.8 379.3h1.8v1.4h-1.8zM585.4 379.3h1.8v1.4h-1.8zM570.8 381.9h1.8v1.4h-1.8zM585.4 381.9h1.8v1.4h-1.8zM570.8 384.5h1.8v1.4h-1.8zM585.4 384.5h1.8v1.4h-1.8zM570.8 387.1h1.8v1.4h-1.8zM585.4 387.1h1.8v1.4h-1.8zM570.8 389.7h1.8v1.4h-1.8zM585.4 389.7h1.8v1.4h-1.8zM647.6 387h9.8v5.616h-9.8zM647.6 395.784h9.8v5.616h-9.8zM631.3 417.1h1.4v1.8h-1.4zM631.3 425.9h1.4v1.8h-1.4zM633.9 417.1h1.4v1.8h-1.4zM633.9 425.9h1.4v1.8h-1.4zM636.5 417.1h1.4v1.8h-1.4zM636.5 425.9h1.4v1.8h-1.4zM630.1 418.3h1.8v1.4h-1.8zM639.4 418.3h1.8v1.4h-1.8zM630.1 420.9h1.8v1.4h-1.8zM639.4 420.9h1.8v1.4h-1.8zM630.1 423.5h1.8v1.4h-1.8zM639.4 423.5h1.8v1.4h-1.8zM872 536.2h1.4v1.8h-1.4zM872 572.7h1.4v1.8h-1.4zM874.6 536.2h1.4v1.8h-1.4zM874.6 572.7h1.4v1.8h-1.4zM877.2 536.2h1.4v1.8h-1.4zM877.2 572.7h1.4v1.8h-1.4zM879.8 536.2h1.4v1.8h-1.4zM879.8 572.7h1.4v1.8h-1.4zM882.4 536.2h1.4v1.8h-1.4zM882.4 572.7h1.4v1.8h-1.4zM885 536.2h1.4v1.8h-1.4zM885 572.7h1.4v1.8h-1.4zM887.6 536.2h1.4v1.8h-1.4zM887.6 572.7h1.4v1.8h-1.4zM890.2 536.2h1.4v1.8h-1.4zM890.2 572.7h1.4v1.8h-1.4zM892.8 536.2h1.4v1.8h-1.4zM892.8 572.7h1.4v1.8h-1.4zM895.4 536.2h1.4v1.8h-1.4zM895.4 572.7h1.4v1.8h-1.4zM898 536.2h1.4v1.8h-1.4zM898 572.7h1.4v1.8h-1.4zM900.6 536.2h1.4v1.8h-1.4zM900.6 572.7h1.4v1.8h-1.4zM903.2 536.2h1.4v1.8h-1.4zM903.2 572.7h1.4v1.8h-1.4zM905.8 536.2h1.4v1.8h-1.4zM905.8 572.7h1.4v1.8h-1.4zM870.8 537.4h1.8v1.4h-1.8zM908.9 537.4h1.8v1.4h-1.8zM870.8 540h1.8v1.4h-1.8zM908.9 540h1.8v1.4h-1.8zM870.8 542.6h1.8v1.4h-1.8zM908.9 542.6h1.8v1.4h-1.8zM870.8 545.2h1.8v1.4h-1.8zM908.9 545.2h1.8v1.4h-1.8zM870.8 547.8h1.8v1.4h-1.8zM908.9 547.8h1.8v1.4h-1.8zM870.8 550.4h1.8v1.4h-1.8zM908.9 550.4h1.8v1.4h-1.8zM870.8 553h1.8v1.4h-1.8zM908.9 553h1.8v1.4h-1.8zM870.8 555.6h1.8v1.4h-1.8zM908.9 555.6h1.8v1.4h-1.8zM870.8 558.2h1.8v1.4h-1.8zM908.9 558.2h1.8v1.4h-1.8zM870.8 560.8h1.8v1.4h-1.8zM908.9 560.8h1.8v1.4h-1.8zM870.8 563.4h1.8v1.4h-1.8zM908.9 563.4h1.8v1.4h-1.8zM870.8 566h1.8v1.4h-1.8zM908.9 566h1.8v1.4h-1.8zM870.8 568.6h1.8v1.4h-1.8zM908.9 568.6h1.8v1.4h-1.8zM870.8 571.2h1.8v1.4h-1.8zM908.9 571.2h1.8v1.4h-1.8zM771.8 549.5h1.4v1.8h-1.4zM771.8 597h1.4v1.8h-1.4zM774.4 549.5h1.4v1.8h-1.4zM774.4 597h1.4v1.8h-1.4zM777 549.5h1.4v1.8h-1.4zM777 597h1.4v1.8h-1.4zM779.6 549.5h1.4v1.8h-1.4zM779.6 597h1.4v1.8h-1.4zM782.2 549.5h1.4v1.8h-1.4zM782.2 597h1.4v1.8h-1.4zM784.8 549.5h1.4v1.8h-1.4zM784.8 597h1.4v1.8h-1.4zM787.4 549.5h1.4v1.8h-1.4zM787.4 597h1.4v1.8h-1.4zM790 549.5h1.4v1.8h-1.4zM790 597h1.4v1.8h-1.4zM792.6 549.5h1.4v1.8h-1.4zM792.6 597h1.4v1.8h-1.4zM795.2 549.5h1.4v1.8h-1.4zM795.2 597h1.4v1.8h-1.4zM770.6 550.7h1.8v1.4h-1.8zM797.1 550.7h1.8v1.4h-1.8zM770.6 553.3h1.8v1.4h-1.8zM797.1 553.3h1.8v1.4h-1.8zM770.6 555.9h1.8v1.4h-1.8zM797.1 555.9h1.8v1.4h-1.8zM770.6 558.5h1.8v1.4h-1.8zM797.1 558.5h1.8v1.4h-1.8zM770.6 561.1h1.8v1.4h-1.8zM797.1 561.1h1.8v1.4h-1.8zM770.6 563.7h1.8v1.4h-1.8zM797.1 563.7h1.8v1.4h-1.8zM770.6 566.3h1.8v1.4h-1.8zM797.1 566.3h1.8v1.4h-1.8zM770.6 568.9h1.8v1.4h-1.8zM797.1 568.9h1.8v1.4h-1.8zM770.6 571.5h1.8v1.4h-1.8zM797.1 571.5h1.8v1.4h-1.8zM770.6 574.1h1.8v1.4h-1.8zM797.1 574.1h1.8v1.4h-1.8zM770.6 576.7h1.8v1.4h-1.8zM797.1 576.7h1.8v1.4h-1.8zM770.6 579.3h1.8v1.4h-1.8zM797.1 579.3h1.8v1.4h-1.8zM770.6 581.9h1.8v1.4h-1.8zM797.1 581.9h1.8v1.4h-1.8zM770.6 584.5h1.8v1.4h-1.8zM797.1 584.5h1.8v1.4h-1.8zM770.6 587.1h1.8v1.4h-1.8zM797.1 587.1h1.8v1.4h-1.8zM770.6 589.7h1.8v1.4h-1.8zM797.1 589.7h1.8v1.4h-1.8zM770.6 592.3h1.8v1.4h-1.8zM797.1 592.3h1.8v1.4h-1.8zM770.6 594.9h1.8v1.4h-1.8zM797.1 594.9h1.8v1.4h-1.8zM886 460.8h1.4v1.8h-1.4zM886 481.4h1.4v1.8h-1.4zM888.6 460.8h1.4v1.8h-1.4zM888.6 481.4h1.4v1.8h-1.4zM891.2 460.8h1.4v1.8h-1.4zM891.2 481.4h1.4v1.8h-1.4zM893.8 460.8h1.4v1.8h-1.4zM893.8 481.4h1.4v1.8h-1.4zM896.4 460.8h1.4v1.8h-1.4zM896.4 481.4h1.4v1.8h-1.4zM899 460.8h1.4v1.8h-1.4zM899 481.4h1.4v1.8h-1.4zM901.6 460.8h1.4v1.8h-1.4zM901.6 481.4h1.4v1.8h-1.4zM904.2 460.8h1.4v1.8h-1.4zM904.2 481.4h1.4v1.8h-1.4zM884.8 462h1.8v1.4h-1.8zM905.4 462h1.8v1.4h-1.8zM884.8 464.6h1.8v1.4h-1.8zM905.4 464.6h1.8v1.4h-1.8zM884.8 467.2h1.8v1.4h-1.8zM905.4 467.2h1.8v1.4h-1.8zM884.8 469.8h1.8v1.4h-1.8zM905.4 469.8h1.8v1.4h-1.8zM884.8 472.4h1.8v1.4h-1.8zM905.4 472.4h1.8v1.4h-1.8zM884.8 475h1.8v1.4h-1.8zM905.4 475h1.8v1.4h-1.8zM884.8 477.6h1.8v1.4h-1.8zM905.4 477.6h1.8v1.4h-1.8zM884.8 480.2h1.8v1.4h-1.8zM905.4 480.2h1.8v1.4h-1.8zM504 427h2.2v1.9875h-2.2zM519.3 427h2.2v1.9875h-2.2zM504 430.975h2.2v1.9875h-2.2zM519.3 430.975h2.2v1.9875h-2.2zM504 434.95h2.2v1.9875h-2.2zM519.3 434.95h2.2v1.9875h-2.2zM504 438.925h2.2v1.9875h-2.2zM519.3 438.925h2.2v1.9875h-2.2zM504 442.9h2.2v1.9875h-2.2zM519.3 442.9h2.2v1.9875h-2.2zM504 446.875h2.2v1.9875h-2.2zM519.3 446.875h2.2v1.9875h-2.2zM504 450.85h2.2v1.9875h-2.2zM519.3 450.85h2.2v1.9875h-2.2zM504 454.825h2.2v1.9875h-2.2zM519.3 454.825h2.2v1.9875h-2.2zM504 458.8h2.2v1.9875h-2.2zM519.3 458.8h2.2v1.9875h-2.2zM504 462.775h2.2v1.9875h-2.2zM519.3 462.775h2.2v1.9875h-2.2zM504 466.75h2.2v1.9875h-2.2zM519.3 466.75h2.2v1.9875h-2.2zM504 470.725h2.2v1.9875h-2.2zM519.3 470.725h2.2v1.9875h-2.2zM691.5 436h1.47812v2.4h-1.47812zM691.5 450.6h1.47812v2.4h-1.47812zM694.456 436h1.47812v2.4h-1.47812zM694.456 450.6h1.47812v2.4h-1.47812zM697.413 436h1.47812v2.4h-1.47812zM697.413 450.6h1.47812v2.4h-1.47812zM700.369 436h1.47812v2.4h-1.47812zM700.369 450.6h1.47812v2.4h-1.47812zM703.325 436h1.47812v2.4h-1.47812zM703.325 450.6h1.47812v2.4h-1.47812zM706.281 436h1.47812v2.4h-1.47812zM706.281 450.6h1.47812v2.4h-1.47812zM709.237 436h1.47812v2.4h-1.47812zM709.237 450.6h1.47812v2.4h-1.47812zM712.194 436h1.47812v2.4h-1.47812zM712.194 450.6h1.47812v2.4h-1.47812zM715.15 436h1.47812v2.4h-1.47812zM715.15 450.6h1.47812v2.4h-1.47812zM718.106 436h1.47812v2.4h-1.47812zM718.106 450.6h1.47812v2.4h-1.47812zM721.062 436h1.47812v2.4h-1.47812zM721.062 450.6h1.47812v2.4h-1.47812zM724.019 436h1.47812v2.4h-1.47812zM724.019 450.6h1.47812v2.4h-1.47812zM726.975 436h1.47812v2.4h-1.47812zM726.975 450.6h1.47812v2.4h-1.47812zM729.931 436h1.47812v2.4h-1.47812zM729.931 450.6h1.47812v2.4h-1.47812zM732.887 436h1.47812v2.4h-1.47812zM732.887 450.6h1.47812v2.4h-1.47812zM735.844 436h1.47812v2.4h-1.47812zM735.844 450.6h1.47812v2.4h-1.47812zM647 632.5h1.375v2.4h-1.375zM647 644.1h1.375v2.4h-1.375zM649.75 632.5h1.375v2.4h-1.375zM649.75 644.1h1.375v2.4h-1.375zM652.5 632.5h1.375v2.4h-1.375zM652.5 644.1h1.375v2.4h-1.375zM655.25 632.5h1.375v2.4h-1.375zM655.25 644.1h1.375v2.4h-1.375zM658 632.5h1.375v2.4h-1.375zM658 644.1h1.375v2.4h-1.375zM660.75 632.5h1.375v2.4h-1.375zM660.75 644.1h1.375v2.4h-1.375zM663.5 632.5h1.375v2.4h-1.375zM663.5 644.1h1.375v2.4h-1.375zM666.25 632.5h1.375v2.4h-1.375zM666.25 644.1h1.375v2.4h-1.375zM669 632.5h1.375v2.4h-1.375zM669 644.1h1.375v2.4h-1.375zM671.75 632.5h1.375v2.4h-1.375zM671.75 644.1h1.375v2.4h-1.375zM674.5 632.5h1.375v2.4h-1.375zM674.5 644.1h1.375v2.4h-1.375zM677.25 632.5h1.375v2.4h-1.375zM677.25 644.1h1.375v2.4h-1.375zM680 632.5h1.375v2.4h-1.375zM680 644.1h1.375v2.4h-1.375zM682.75 632.5h1.375v2.4h-1.375zM682.75 644.1h1.375v2.4h-1.375zM685.5 632.5h1.375v2.4h-1.375zM685.5 644.1h1.375v2.4h-1.375zM688.25 632.5h1.375v2.4h-1.375zM688.25 644.1h1.375v2.4h-1.375zM691 632.5h1.375v2.4h-1.375zM691 644.1h1.375v2.4h-1.375zM693.75 632.5h1.375v2.4h-1.375zM693.75 644.1h1.375v2.4h-1.375zM696.5 632.5h1.375v2.4h-1.375zM696.5 644.1h1.375v2.4h-1.375zM699.25 632.5h1.375v2.4h-1.375zM699.25 644.1h1.375v2.4h-1.375zM702 632.5h1.375v2.4h-1.375zM702 644.1h1.375v2.4h-1.375zM704.75 632.5h1.375v2.4h-1.375zM704.75 644.1h1.375v2.4h-1.375zM777 637.5h1.36458v2.4h-1.36458zM777 650.1h1.36458v2.4h-1.36458zM779.729 637.5h1.36458v2.4h-1.36458zM779.729 650.1h1.36458v2.4h-1.36458zM782.458 637.5h1.36458v2.4h-1.36458zM782.458 650.1h1.36458v2.4h-1.36458zM785.188 637.5h1.36458v2.4h-1.36458zM785.188 650.1h1.36458v2.4h-1.36458zM787.917 637.5h1.36458v2.4h-1.36458zM787.917 650.1h1.36458v2.4h-1.36458zM790.646 637.5h1.36458v2.4h-1.36458zM790.646 650.1h1.36458v2.4h-1.36458zM793.375 637.5h1.36458v2.4h-1.36458zM793.375 650.1h1.36458v2.4h-1.36458zM796.104 637.5h1.36458v2.4h-1.36458zM796.104 650.1h1.36458v2.4h-1.36458zM798.833 637.5h1.36458v2.4h-1.36458zM798.833 650.1h1.36458v2.4h-1.36458zM801.562 637.5h1.36458v2.4h-1.36458zM801.562 650.1h1.36458v2.4h-1.36458zM804.292 637.5h1.36458v2.4h-1.36458zM804.292 650.1h1.36458v2.4h-1.36458zM807.021 637.5h1.36458v2.4h-1.36458zM807.021 650.1h1.36458v2.4h-1.36458zM809.75 637.5h1.36458v2.4h-1.36458zM809.75 650.1h1.36458v2.4h-1.36458zM812.479 637.5h1.36458v2.4h-1.36458zM812.479 650.1h1.36458v2.4h-1.36458zM815.208 637.5h1.36458v2.4h-1.36458zM815.208 650.1h1.36458v2.4h-1.36458zM817.938 637.5h1.36458v2.4h-1.36458zM817.938 650.1h1.36458v2.4h-1.36458zM820.667 637.5h1.36458v2.4h-1.36458zM820.667 650.1h1.36458v2.4h-1.36458zM823.396 637.5h1.36458v2.4h-1.36458zM823.396 650.1h1.36458v2.4h-1.36458zM826.125 637.5h1.36458v2.4h-1.36458zM826.125 650.1h1.36458v2.4h-1.36458zM828.854 637.5h1.36458v2.4h-1.36458zM828.854 650.1h1.36458v2.4h-1.36458zM831.583 637.5h1.36458v2.4h-1.36458zM831.583 650.1h1.36458v2.4h-1.36458zM834.312 637.5h1.36458v2.4h-1.36458zM834.312 650.1h1.36458v2.4h-1.36458zM837.042 637.5h1.36458v2.4h-1.36458zM837.042 650.1h1.36458v2.4h-1.36458zM839.771 637.5h1.36458v2.4h-1.36458zM839.771 650.1h1.36458v2.4h-1.36458zM509.5 571h2.2v1.8h-2.2zM523.3 571h2.2v1.8h-2.2zM509.5 574.6h2.2v1.8h-2.2zM523.3 574.6h2.2v1.8h-2.2zM509.5 578.2h2.2v1.8h-2.2zM523.3 578.2h2.2v1.8h-2.2zM509.5 581.8h2.2v1.8h-2.2zM523.3 581.8h2.2v1.8h-2.2zM509.5 585.4h2.2v1.8h-2.2zM523.3 585.4h2.2v1.8h-2.2zM509.5 589h2.2v1.8h-2.2zM523.3 589h2.2v1.8h-2.2zM509.5 592.6h2.2v1.8h-2.2zM523.3 592.6h2.2v1.8h-2.2zM509.5 596.2h2.2v1.8h-2.2zM523.3 596.2h2.2v1.8h-2.2zM509.5 599.8h2.2v1.8h-2.2zM523.3 599.8h2.2v1.8h-2.2zM509.5 603.4h2.2v1.8h-2.2zM523.3 603.4h2.2v1.8h-2.2zM535 632h1.6v3h-1.6zM535 652h1.6v3h-1.6zM538.2 632h1.6v3h-1.6zM538.2 652h1.6v3h-1.6zM541.4 632h1.6v3h-1.6zM541.4 652h1.6v3h-1.6zM544.6 632h1.6v3h-1.6zM544.6 652h1.6v3h-1.6zM547.8 632h1.6v3h-1.6zM547.8 652h1.6v3h-1.6zM867 631h2.2v1.6h-2.2zM867 634h2.2v1.6h-2.2zM867 637h2.2v1.6h-2.2zM867 640h2.2v1.6h-2.2zM867 643h2.2v1.6h-2.2zM867 646h2.2v1.6h-2.2zM870 646h3v3.4h-3zM875 646h3v3.4h-3zM880 646h3v3.4h-3zM885 646h3v3.4h-3zM581 632.8h1.4v1.8h-1.4zM581 648.4h1.4v1.8h-1.4zM583.6 632.8h1.4v1.8h-1.4zM583.6 648.4h1.4v1.8h-1.4zM586.2 632.8h1.4v1.8h-1.4zM586.2 648.4h1.4v1.8h-1.4zM588.8 632.8h1.4v1.8h-1.4zM588.8 648.4h1.4v1.8h-1.4zM591.4 632.8h1.4v1.8h-1.4zM591.4 648.4h1.4v1.8h-1.4zM594 632.8h1.4v1.8h-1.4zM594 648.4h1.4v1.8h-1.4zM596.6 632.8h1.4v1.8h-1.4zM596.6 648.4h1.4v1.8h-1.4zM579.8 634h1.8v1.4h-1.8zM598.4 634h1.8v1.4h-1.8zM579.8 636.6h1.8v1.4h-1.8zM598.4 636.6h1.8v1.4h-1.8zM579.8 639.2h1.8v1.4h-1.8zM598.4 639.2h1.8v1.4h-1.8zM579.8 641.8h1.8v1.4h-1.8zM598.4 641.8h1.8v1.4h-1.8zM579.8 644.4h1.8v1.4h-1.8zM598.4 644.4h1.8v1.4h-1.8zM579.8 647h1.8v1.4h-1.8zM598.4 647h1.8v1.4h-1.8zM607 633.8h1.4v1.8h-1.4zM607 645.4h1.4v1.8h-1.4zM609.6 633.8h1.4v1.8h-1.4zM609.6 645.4h1.4v1.8h-1.4zM612.2 633.8h1.4v1.8h-1.4zM612.2 645.4h1.4v1.8h-1.4zM614.8 633.8h1.4v1.8h-1.4zM614.8 645.4h1.4v1.8h-1.4zM617.4 633.8h1.4v1.8h-1.4zM617.4 645.4h1.4v1.8h-1.4zM605.8 635h1.8v1.4h-1.8zM618.4 635h1.8v1.4h-1.8zM605.8 637.6h1.8v1.4h-1.8zM618.4 637.6h1.8v1.4h-1.8zM605.8 640.2h1.8v1.4h-1.8zM618.4 640.2h1.8v1.4h-1.8zM605.8 642.8h1.8v1.4h-1.8zM618.4 642.8h1.8v1.4h-1.8zM580 342.5h13.8v5.2h-13.8zM662 442.4h12v9.3h-12zM455 522h14v5.5h-14zM455 554h6v14h-6zM899 346h6v14.5h-6zM916.6 346h6.4v14.5h-6.4zM960.5 424h6v16h-6zM960.5 537h6v16h-6zM960.5 560h6v16h-6zM738.7 596.7h13.3v10.9h-13.3zM738.7 609.6h13.3v9.9h-13.3zM537 393.5h5v4.5h-5zM553 392h4.5v5h-4.5zM559.5 392h4.5v5h-4.5zM559 371h2.5v2h-2.5zM562.5 371h2.5v2h-2.5zM544 377h3v2.5h-3zM544 381.5h3v2.5h-3zM574 367h2v1.5h-2zM574 370.5h2v1.5h-2zM597 395.5h4v3.5h-4zM547 393h3v2.5h-3zM547 396.5h3v2.5h-3zM594 387h1.5v2h-1.5zM597.5 387h1.5v2h-1.5zM551 383h4v2.5h-4zM551 387.5h4v2.5h-4zM537 379h2v2.5h-2zM537 382.5h2v2.5h-2zM601 372h1.5v2h-1.5zM604.5 372h1.5v2h-1.5zM560 377h2.5v2h-2.5zM563.5 377h2.5v2h-2.5zM590 368h3.5v4h-3.5zM594.5 368h3.5v4h-3.5zM526 378h4v2.5h-4zM526 382.5h4v2.5h-4zM597 383h2.5v2h-2.5zM600.5 383h2.5v2h-2.5zM528.5 392h1.5v2h-1.5zM525.5 388h1.5v2h-1.5zM596.5 375h1.5v2h-1.5zM551 377h2.5v4h-2.5zM555.5 377h2.5v4h-2.5zM565 367h1.5v2h-1.5zM568.5 367h1.5v2h-1.5zM563 383h2v1.5h-2zM563 386.5h2v1.5h-2zM588.5 397h1.5v2h-1.5zM604 388h2v2.5h-2zM604 391.5h2v2.5h-2zM581 367h1.5v2h-1.5zM584.5 367h1.5v2h-1.5zM578.5 397h2.5v2h-2.5zM533 385h1v1.5h-1zM533 387.5h1v1.5h-1zM541 382.5h1v1.5h-1zM600.5 379h1.5v2h-1.5zM592 392.5h2v1.5h-2zM591 383.5h1v1.5h-1zM522 381h1v1.5h-1zM522 383.5h1v1.5h-1zM558 385.5h1v1.5h-1zM532 381.5h1v1.5h-1zM568 397h1.5v2h-1.5zM569.5 397h1.5v2h-1.5zM655.5 412h3.5v4h-3.5zM635 391h1.5v2h-1.5zM638.5 391h1.5v2h-1.5zM633 405h2v1.5h-2zM633 408.5h2v1.5h-2zM641.5 385h2.5v2h-2.5zM635 398h2.5v3h-2.5zM639.5 398h2.5v3h-2.5zM631 385h1.5v2h-1.5zM634.5 385h1.5v2h-1.5zM633 432h3.5v4h-3.5zM637.5 432h3.5v4h-3.5zM662 409h3.5v4h-3.5zM666.5 409h3.5v4h-3.5zM638 411h2.5v2h-2.5zM641.5 411h2.5v2h-2.5zM653 406h2.5v3h-2.5zM657.5 406h2.5v3h-2.5zM650 419h2.5v2h-2.5zM653.5 419h2.5v2h-2.5zM638 404h1.5v2h-1.5zM641.5 404h1.5v2h-1.5zM629 390h2v1.5h-2zM629 393.5h2v1.5h-2zM666 405h2.5v2h-2.5zM669.5 405h2.5v2h-2.5zM628 400h1.5v2h-1.5zM631.5 400h1.5v2h-1.5zM646 420h2v2.5h-2zM646 423.5h2v2.5h-2zM669 399.5h3v2.5h-3zM644 432h1.5v2h-1.5zM645.5 432h1.5v2h-1.5zM661 384h1.5v1h-1.5zM663.5 384h1.5v1h-1.5zM645 405h1.5v2h-1.5zM648.5 405h1.5v2h-1.5zM628 411h1.5v2h-1.5zM629.5 411h1.5v2h-1.5zM633 412h1.5v2h-1.5zM634.5 412h1.5v2h-1.5zM646 415h2v1.5h-2zM646 416.5h2v1.5h-2zM669 388h2v1.5h-2zM669 390.5h2v1.5h-2zM666.5 416h1.5v1h-1.5zM630 434.5h1v1.5h-1zM662 404.5h2v1.5h-2zM642 390h2v1.5h-2zM642 393.5h2v1.5h-2zM660 419h1.5v1h-1.5zM662.5 419h1.5v1h-1.5zM668 584h3.5v5h-3.5zM674.5 584h3.5v5h-3.5zM746 571.5h5v4.5h-5zM659 532h4v3.5h-4zM659 537.5h4v3.5h-4zM747 499.5h5v3.5h-5zM655 589.5h5v4.5h-5zM679 560h4.5v5h-4.5zM685.5 560h4.5v5h-4.5zM712 473h5v4.5h-5zM712 479.5h5v4.5h-5zM703 468h5v4.5h-5zM703 474.5h5v4.5h-5zM655 564h3.5v5h-3.5zM660.5 564h3.5v5h-3.5zM660.5 554h3.5v5h-3.5zM714 592h5v3.5h-5zM714 597.5h5v3.5h-5zM675.5 604h3.5v4h-3.5zM732 563h1.5v2h-1.5zM735.5 563h1.5v2h-1.5zM647 558h3v2.5h-3zM647 562.5h3v2.5h-3zM714 539h2.5v2h-2.5zM717.5 539h2.5v2h-2.5zM716 549.5h2v2.5h-2zM667 549h1.5v2h-1.5zM670.5 549h1.5v2h-1.5zM652 471h2.5v3h-2.5zM656.5 471h2.5v3h-2.5zM653 574h2.5v4h-2.5zM657.5 574h2.5v4h-2.5zM663 478h4v3.5h-4zM663 482.5h4v3.5h-4zM705 531h2v1.5h-2zM705 534.5h2v1.5h-2zM708 542h2v1.5h-2zM708 545.5h2v1.5h-2zM642 529.5h2v2.5h-2zM648 530h3.5v4h-3.5zM652.5 530h3.5v4h-3.5zM739 481h2.5v2h-2.5zM742.5 481h2.5v2h-2.5zM740 557h2.5v3h-2.5zM744.5 557h2.5v3h-2.5zM742 545h2.5v3h-2.5zM745.5 545h2.5v3h-2.5zM744 552h2.5v3h-2.5zM748.5 552h2.5v3h-2.5zM671 479h4v2.5h-4zM671 483.5h4v2.5h-4zM719 610.5h2v1.5h-2zM644 584h3.5v4h-3.5zM648.5 584h3.5v4h-3.5zM747 516h4v3.5h-4zM747 520.5h4v3.5h-4zM722 594.5h2v1.5h-2zM706 560h3.5v4h-3.5zM710.5 560h3.5v4h-3.5zM727.5 560h1.5v2h-1.5zM720 516h2.5v4h-2.5zM724.5 516h2.5v4h-2.5zM673.5 592h1.5v2h-1.5zM667 534h2.5v3h-2.5zM670.5 534h2.5v3h-2.5zM723.5 485h2.5v3h-2.5zM709 608h3.5v4h-3.5zM713.5 608h3.5v4h-3.5zM661 605.5h2v2.5h-2zM686.5 609h2.5v3h-2.5zM650 606h2v1.5h-2zM650 609.5h2v1.5h-2zM670.5 569h2.5v2h-2.5zM668 576h2v1.5h-2zM668 579.5h2v1.5h-2zM642 506h2v1.5h-2zM642 509.5h2v1.5h-2zM738 486h1.5v2h-1.5zM741.5 486h1.5v2h-1.5zM699 482h2v1.5h-2zM699 485.5h2v1.5h-2zM646 537h4v3.5h-4zM646 541.5h4v3.5h-4zM650.5 570h1.5v2h-1.5zM705 553h2.5v3h-2.5zM708.5 553h2.5v3h-2.5zM653 543h3v2.5h-3zM653 547.5h3v2.5h-3zM695 609h2.5v3h-2.5zM698.5 609h2.5v3h-2.5zM720.5 560h1.5v2h-1.5zM643 564.5h2v2.5h-2zM672.5 600h2.5v2h-2.5zM644 548h2.5v2h-2.5zM647.5 548h2.5v2h-2.5zM677 509h2v1.5h-2zM677 512.5h2v1.5h-2zM686.5 483h2.5v4h-2.5zM643 595h2.5v4h-2.5zM647.5 595h2.5v4h-2.5zM654 481h3v2.5h-3zM654 484.5h3v2.5h-3zM674 470h2v1.5h-2zM674 473.5h2v1.5h-2zM728 552h3v2.5h-3zM728 555.5h3v2.5h-3zM747 476h1.5v2h-1.5zM750.5 476h1.5v2h-1.5zM714 556h2.5v2h-2.5zM717.5 556h2.5v2h-2.5zM660 550h1.5v2h-1.5zM663.5 550h1.5v2h-1.5zM676 579.5h4v2.5h-4zM748 483h4v3.5h-4zM748 487.5h4v3.5h-4zM641 521.5h4v2.5h-4zM711 531h2v2.5h-2zM711 534.5h2v2.5h-2zM670.5 543h1.5v2h-1.5zM676 495h2v2.5h-2zM676 498.5h2v2.5h-2zM739 469h2.5v3h-2.5zM743.5 469h2.5v3h-2.5zM659 597h1.5v2h-1.5zM662.5 597h1.5v2h-1.5zM712 467h2.5v3h-2.5zM715.5 467h2.5v3h-2.5zM696 557h4v3.5h-4zM696 561.5h4v3.5h-4zM720 508h3.5v4h-3.5zM724.5 508h3.5v4h-3.5zM696.5 529h1.5v2h-1.5zM663 581h3v2.5h-3zM663 584.5h3v2.5h-3zM720 497.5h3v2.5h-3zM745 579h1.5v2h-1.5zM748.5 579h1.5v2h-1.5zM668.5 469h3.5v4h-3.5zM641 579h1.5v2h-1.5zM644.5 579h1.5v2h-1.5zM667 563h1.5v2h-1.5zM670.5 563h1.5v2h-1.5zM738 541h1.5v2h-1.5zM741.5 541h1.5v2h-1.5zM735 552h1.5v2h-1.5zM738.5 552h1.5v2h-1.5zM656 605h2v1.5h-2zM656 608.5h2v1.5h-2zM695.5 483h1.5v2h-1.5zM749.5 510h1.5v2h-1.5zM716 530h1.5v2h-1.5zM719.5 530h1.5v2h-1.5zM702 547.5h2v2.5h-2zM670 558h1.5v2h-1.5zM673.5 558h1.5v2h-1.5zM641 574.5h4v2.5h-4zM747 540h1.5v2h-1.5zM750.5 540h1.5v2h-1.5zM742 570.5h2v2.5h-2zM647 501h2v2.5h-2zM647 504.5h2v2.5h-2zM693 605h2.5v2h-2.5zM696.5 605h2.5v2h-2.5zM643 603h3v2.5h-3zM643 606.5h3v2.5h-3zM666 530h2.5v2h-2.5zM669.5 530h2.5v2h-2.5zM656 477h1.5v2h-1.5zM659.5 477h1.5v2h-1.5zM704 485.5h2v1.5h-2zM643 553h2.5v2h-2.5zM646.5 553h2.5v2h-2.5zM649 576h2v2.5h-2zM649 579.5h2v2.5h-2zM682 529h1.5v2h-1.5zM685.5 529h1.5v2h-1.5zM663.5 544h1.5v2h-1.5zM648 512h2v2.5h-2zM648 515.5h2v2.5h-2zM646 590h1.5v2h-1.5zM649.5 590h1.5v2h-1.5zM678.5 531h1.5v2h-1.5zM705 605h2v1.5h-2zM705 606.5h2v1.5h-2zM676 517h1v1.5h-1zM676 519.5h1v1.5h-1zM689.5 606h1.5v1h-1.5zM668 553h1.5v2h-1.5zM671.5 553h1.5v2h-1.5zM747 531h1.5v1h-1.5zM749.5 531h1.5v1h-1.5zM676.5 571h1.5v2h-1.5zM642.5 513h1.5v2h-1.5zM712 584h1v1.5h-1zM712 586.5h1v1.5h-1zM665 608h1.5v2h-1.5zM667.5 608h1.5v2h-1.5zM655.5 537h1.5v2h-1.5zM744 583h2v1.5h-2zM744 584.5h2v1.5h-2zM734 557h1.5v2h-1.5zM735.5 557h1.5v2h-1.5zM750 559h1v1.5h-1zM750 561.5h1v1.5h-1zM744 520.5h1v1.5h-1zM730 483h2v1.5h-2zM730 484.5h2v1.5h-2zM703.5 541h1.5v1h-1.5zM666 604h1.5v2h-1.5zM667.5 604h1.5v2h-1.5zM677 489.5h2v1.5h-2zM720 523h1.5v2h-1.5zM721.5 523h1.5v2h-1.5zM670 596h1.5v1h-1.5zM672.5 596h1.5v1h-1.5zM682 557h1.5v1h-1.5zM684.5 557h1.5v1h-1.5zM642 536h1v1.5h-1zM642 538.5h1v1.5h-1zM748 470h2v1.5h-2zM748 471.5h2v1.5h-2zM641 558h1.5v1h-1.5zM643.5 558h1.5v1h-1.5zM738.5 548h1.5v2h-1.5zM642 590h2v1.5h-2zM642 591.5h2v1.5h-2zM738 478h1.5v1h-1.5zM740.5 478h1.5v1h-1.5zM741 575h1.5v2h-1.5zM742.5 575h1.5v2h-1.5zM702 557h1v1.5h-1zM702 559.5h1v1.5h-1zM641 544h1.5v2h-1.5zM642.5 544h1.5v2h-1.5zM660.5 467h1.5v2h-1.5zM663 572h2v1.5h-2zM663 574.5h2v1.5h-2zM709 549h1.5v1h-1.5zM711.5 549h1.5v1h-1.5zM732.5 488h1.5v1h-1.5zM692 562h2v1.5h-2zM692 563.5h2v1.5h-2zM654 598h1v1.5h-1zM654 600.5h1v1.5h-1zM661 561h1.5v1h-1.5zM663.5 561h1.5v1h-1.5zM659 485.5h2v1.5h-2zM666 540h1.5v1h-1.5zM668.5 540h1.5v1h-1.5zM647 524h1v1.5h-1zM647 526.5h1v1.5h-1zM662 589h2v1.5h-2zM662 590.5h2v1.5h-2zM717.5 535h1.5v2h-1.5zM677 594h1v1.5h-1zM677 596.5h1v1.5h-1zM675 564h2v1.5h-2zM675 565.5h2v1.5h-2zM708 482h2v1.5h-2zM708 483.5h2v1.5h-2zM743.5 474h1.5v2h-1.5zM670.5 475h1.5v2h-1.5zM721 551h1.5v2h-1.5zM723.5 551h1.5v2h-1.5zM673 610h1.5v2h-1.5zM675.5 610h1.5v2h-1.5zM711 487h1.5v1h-1.5zM713.5 487h1.5v1h-1.5zM691 609h2v1.5h-2zM691 610.5h2v1.5h-2zM715 604.5h2v1.5h-2zM677 481h2v1.5h-2zM677 482.5h2v1.5h-2zM709.5 539h1.5v1h-1.5zM667 559.5h1v1.5h-1zM748 535h2v1.5h-2zM748 536.5h2v1.5h-2zM749.5 506h1.5v1h-1.5zM689 529h2v1.5h-2zM689 530.5h2v1.5h-2zM677 524h2v1.5h-2zM677 527.5h2v1.5h-2zM500.5 504h3.5v5h-3.5zM610 589h3.5v5h-3.5zM615.5 589h3.5v5h-3.5zM611 569h5v3.5h-5zM611 574.5h5v3.5h-5zM512.5 497h4.5v5h-4.5zM618.5 546h3.5v4h-3.5zM629 530h5v3.5h-5zM629 536.5h5v3.5h-5zM634.5 515h3.5v5h-3.5zM622 526h2v2.5h-2zM622 529.5h2v2.5h-2zM636 553h3v2.5h-3zM636 556.5h3v2.5h-3zM611 561h2.5v3h-2.5zM614.5 561h2.5v3h-2.5zM556 512h1.5v2h-1.5zM559.5 512h1.5v2h-1.5zM504 521h2.5v2h-2.5zM507.5 521h2.5v2h-2.5zM557 543h2.5v2h-2.5zM560.5 543h2.5v2h-2.5zM522 514h2v2.5h-2zM522 517.5h2v2.5h-2zM628 577h1.5v2h-1.5zM631.5 577h1.5v2h-1.5zM552 536h2.5v3h-2.5zM555.5 536h2.5v3h-2.5zM622 519.5h4v2.5h-4zM570 500h2.5v3h-2.5zM574.5 500h2.5v3h-2.5zM530 503h2.5v2h-2.5zM533.5 503h2.5v2h-2.5zM621 561h3v2.5h-3zM621 565.5h3v2.5h-3zM624 553h2.5v4h-2.5zM628.5 553h2.5v4h-2.5zM493 529h2v2.5h-2zM493 532.5h2v2.5h-2zM547 507h2.5v3h-2.5zM551.5 507h2.5v3h-2.5zM553 521h2.5v3h-2.5zM557.5 521h2.5v3h-2.5zM567 537h3.5v4h-3.5zM571.5 537h3.5v4h-3.5zM548 537.5h2v1.5h-2zM635 510.5h3v2.5h-3zM542.5 502h2.5v3h-2.5zM618.5 610h2.5v2h-2.5zM632 604h2.5v3h-2.5zM636.5 604h2.5v3h-2.5zM536.5 531h2.5v3h-2.5zM532 544h2.5v3h-2.5zM536.5 544h2.5v3h-2.5zM532 512.5h4v2.5h-4zM540 522h2.5v3h-2.5zM544.5 522h2.5v3h-2.5zM627 586h2v2.5h-2zM627 589.5h2v2.5h-2zM607 597h2.5v3h-2.5zM610.5 597h2.5v3h-2.5zM525 505.5h2v2.5h-2zM563 521h2v2.5h-2zM563 524.5h2v2.5h-2zM540 515.5h3v2.5h-3zM623.5 604h2.5v3h-2.5zM571 524h3v2.5h-3zM571 528.5h3v2.5h-3zM535 518h3v2.5h-3zM535 522.5h3v2.5h-3zM571 513h2.5v3h-2.5zM575.5 513h2.5v3h-2.5zM552 530h1.5v2h-1.5zM555.5 530h1.5v2h-1.5zM495.5 519h2.5v3h-2.5zM550 543h1.5v2h-1.5zM553.5 543h1.5v2h-1.5zM568 507h2.5v3h-2.5zM571.5 507h2.5v3h-2.5zM563.5 504h2.5v2h-2.5zM612 535h1.5v2h-1.5zM615.5 535h1.5v2h-1.5zM504 517.5h2v1.5h-2zM631.5 596h2.5v3h-2.5zM636.5 567h2.5v4h-2.5zM590 541h1.5v2h-1.5zM593.5 541h1.5v2h-1.5zM611 525h2.5v4h-2.5zM615.5 525h2.5v4h-2.5zM633 583h4v3.5h-4zM633 587.5h4v3.5h-4zM629 511.5h2v1.5h-2zM627 562h2v1.5h-2zM627 565.5h2v1.5h-2zM577 526h3v2.5h-3zM577 529.5h3v2.5h-3zM517 510h2v1.5h-2zM517 513.5h2v1.5h-2zM527 532h3v2.5h-3zM527 535.5h3v2.5h-3zM496 551h2v1.5h-2zM496 554.5h2v1.5h-2zM631 546h2v1.5h-2zM631 549.5h2v1.5h-2zM527.5 523h2.5v3h-2.5zM625.5 572h2.5v2h-2.5zM507 505h2.5v4h-2.5zM511.5 505h2.5v4h-2.5zM603 543h2.5v4h-2.5zM607.5 543h2.5v4h-2.5zM494.5 543h2.5v3h-2.5zM632.5 525h1.5v2h-1.5zM617 514h3v2.5h-3zM617 517.5h3v2.5h-3zM578 543.5h4v3.5h-4zM616 542h2.5v2h-2.5zM619.5 542h2.5v2h-2.5zM613 584h2.5v3h-2.5zM617.5 584h2.5v3h-2.5zM627 544h2v2.5h-2zM627 547.5h2v2.5h-2zM616 597h2.5v2h-2.5zM619.5 597h2.5v2h-2.5zM612 553h1.5v2h-1.5zM615.5 553h1.5v2h-1.5zM537 538h2.5v3h-2.5zM541.5 538h2.5v3h-2.5zM619 577h2.5v3h-2.5zM623.5 577h2.5v3h-2.5zM636.5 610h2.5v2h-2.5zM517.5 493h2.5v2h-2.5zM545 530h1.5v2h-1.5zM548.5 530h1.5v2h-1.5zM516 523.5h4v3.5h-4zM618 509h2.5v3h-2.5zM621.5 509h2.5v3h-2.5zM552.5 515h1.5v2h-1.5zM613 508.5h2v2.5h-2zM573.5 544h2.5v3h-2.5zM491 514h2.5v3h-2.5zM494.5 514h2.5v3h-2.5zM634 562h1.5v2h-1.5zM637.5 562h1.5v2h-1.5zM612 515h3v2.5h-3zM612 519.5h3v2.5h-3zM520 505.5h3v2.5h-3zM543 545h1.5v2h-1.5zM546.5 545h1.5v2h-1.5zM607 577h2v2.5h-2zM607 580.5h2v2.5h-2zM498 498h2.5v2h-2.5zM501.5 498h2.5v2h-2.5zM567.5 529h1.5v2h-1.5zM560 533h2v1.5h-2zM560 536.5h2v1.5h-2zM584 545.5h2v1.5h-2zM566.5 512h1.5v2h-1.5zM528 512h2v1.5h-2zM528 513.5h2v1.5h-2zM597 542.5h2v1.5h-2zM611.5 607h1.5v2h-1.5zM568.5 533h1.5v2h-1.5zM512 517h1v1.5h-1zM512 519.5h1v1.5h-1zM498 495h1.5v1h-1.5zM500.5 495h1.5v1h-1.5zM618.5 531h1.5v2h-1.5zM567 521h2v1.5h-2zM567 522.5h2v1.5h-2zM527 528h1.5v1h-1.5zM529.5 528h1.5v1h-1.5zM494 548h1.5v1h-1.5zM496.5 548h1.5v1h-1.5zM634.5 542h1.5v1h-1.5zM519.5 556h1.5v2h-1.5zM531 517h2v1.5h-2zM531 519.5h2v1.5h-2zM509 514.5h1v1.5h-1zM506 554h2v1.5h-2zM506 555.5h2v1.5h-2zM563 517h1.5v1h-1.5zM565.5 517h1.5v1h-1.5zM609 535.5h1v1.5h-1zM637.5 576h1.5v2h-1.5zM637 533h2v1.5h-2zM637 536.5h2v1.5h-2zM527 547h1v1.5h-1zM527 549.5h1v1.5h-1zM576 507h1.5v1h-1.5zM578.5 507h1.5v1h-1.5zM552 503h1.5v2h-1.5zM553.5 503h1.5v2h-1.5zM605.5 539h1.5v2h-1.5zM540 527h1.5v1h-1.5zM542.5 527h1.5v1h-1.5zM610.5 603h1.5v2h-1.5zM494 538h1.5v2h-1.5zM496.5 538h1.5v2h-1.5zM623 601h1.5v1h-1.5zM625.5 601h1.5v1h-1.5zM637 600.5h2v1.5h-2zM593 500h1.5v1h-1.5zM595.5 500h1.5v1h-1.5zM620 555h1v1.5h-1zM620 557.5h1v1.5h-1zM571 520.5h1v1.5h-1zM636 529.5h2v1.5h-2zM612 580h1.5v2h-1.5zM615.5 580h1.5v2h-1.5zM622 587h1v1.5h-1zM622 589.5h1v1.5h-1zM607 555h1.5v2h-1.5zM608.5 555h1.5v2h-1.5zM506 525h1.5v2h-1.5zM507.5 525h1.5v2h-1.5zM553.5 527h1.5v1h-1.5zM542 534h1.5v2h-1.5zM543.5 534h1.5v2h-1.5zM624 538h2v1.5h-2zM624 540.5h2v1.5h-2zM575 519h1.5v2h-1.5zM578.5 519h1.5v2h-1.5zM548.5 500h1.5v2h-1.5zM608.5 549h1.5v2h-1.5zM561 500h1.5v2h-1.5zM562.5 500h1.5v2h-1.5zM545 514h1v1.5h-1zM545 516.5h1v1.5h-1zM528 541h1.5v1h-1.5zM530.5 541h1.5v1h-1.5zM612 558h1.5v1h-1.5zM614.5 558h1.5v1h-1.5zM635 549.5h1v1.5h-1zM526 517h1.5v2h-1.5zM527.5 517h1.5v2h-1.5zM623 610h1.5v2h-1.5zM625.5 610h1.5v2h-1.5zM570 566h4.5v5h-4.5zM576.5 566h4.5v5h-4.5zM572 591h5v3.5h-5zM572 597.5h5v3.5h-5zM558.5 589h4.5v5h-4.5zM558 576h4v2.5h-4zM558 580.5h4v2.5h-4zM584 568h3.5v4h-3.5zM588.5 568h3.5v4h-3.5zM557.5 607h3.5v4h-3.5zM569.5 609h3.5v4h-3.5zM604 651h2.5v2h-2.5zM607.5 651h2.5v2h-2.5zM557 562h2.5v3h-2.5zM560.5 562h2.5v3h-2.5zM588 604h3v2.5h-3zM588 608.5h3v2.5h-3zM582 599h1.5v2h-1.5zM585.5 599h1.5v2h-1.5zM577 625h1.5v2h-1.5zM580.5 625h1.5v2h-1.5zM587 582h2.5v3h-2.5zM591.5 582h2.5v3h-2.5zM590.5 590h2.5v2h-2.5zM572 580h3v2.5h-3zM572 583.5h3v2.5h-3zM589 615h3v2.5h-3zM589 618.5h3v2.5h-3zM558.5 568h3.5v4h-3.5zM578 612h2.5v4h-2.5zM582.5 612h2.5v4h-2.5zM580 577h2.5v3h-2.5zM583.5 577h2.5v3h-2.5zM562 601h2.5v2h-2.5zM565.5 601h2.5v2h-2.5zM595 621h3v2.5h-3zM595 624.5h3v2.5h-3zM583.5 595h2.5v2h-2.5zM585 627h2.5v2h-2.5zM588.5 627h2.5v2h-2.5zM584 563h1.5v2h-1.5zM587.5 563h1.5v2h-1.5zM581.5 619h2.5v3h-2.5zM552 576h2v1.5h-2zM552 579.5h2v1.5h-2zM568 584.5h2v1.5h-2zM608 627h2.5v2h-2.5zM611.5 627h2.5v2h-2.5zM601 627h1.5v2h-1.5zM604.5 627h1.5v2h-1.5zM553 601h1.5v2h-1.5zM556.5 601h1.5v2h-1.5zM568 561h2.5v3h-2.5zM572.5 561h2.5v3h-2.5zM578 606h2.5v3h-2.5zM581.5 606h2.5v3h-2.5zM566 594.5h3v2.5h-3zM560.5 615h2.5v2h-2.5zM567 575h1.5v2h-1.5zM570.5 575h1.5v2h-1.5zM624 636h2v1.5h-2zM624 639.5h2v1.5h-2zM621.5 652h1.5v2h-1.5zM617 626h2.5v3h-2.5zM621.5 626h2.5v3h-2.5zM573 615h2v1.5h-2zM573 618.5h2v1.5h-2zM551 584h1.5v2h-1.5zM552.5 584h1.5v2h-1.5zM579 589h1.5v2h-1.5zM582.5 589h1.5v2h-1.5zM592 595.5h2v1.5h-2zM590 654.5h2v1.5h-2zM579 583h2v1.5h-2zM579 584.5h2v1.5h-2zM561.5 597h1.5v2h-1.5zM578.5 574h1.5v1h-1.5zM567 605h1.5v2h-1.5zM568.5 605h1.5v2h-1.5zM591 574h2v1.5h-2zM591 576.5h2v1.5h-2zM612 650h1.5v2h-1.5zM613.5 650h1.5v2h-1.5zM564 580h2v1.5h-2zM564 582.5h2v1.5h-2zM582.5 654h1.5v2h-1.5zM558 585h1.5v1h-1.5zM560.5 585h1.5v1h-1.5zM588 587h1.5v1h-1.5zM590.5 587h1.5v1h-1.5zM623 648.5h2v1.5h-2zM573.5 603h1.5v2h-1.5zM583 582h1v1.5h-1zM583 584.5h1v1.5h-1zM575 634h1v1.5h-1zM575 636.5h1v1.5h-1zM580 561h2v1.5h-2zM580 562.5h2v1.5h-2zM828.5 496h3.5v4h-3.5zM818 480h3.5v4h-3.5zM823.5 480h3.5v4h-3.5zM861 489h4v3.5h-4zM861 494.5h4v3.5h-4zM861 452h4.5v5h-4.5zM867.5 452h4.5v5h-4.5zM901.5 452h3.5v4h-3.5zM897 499h5v3.5h-5zM897 505.5h5v3.5h-5zM817 510h3.5v5h-3.5zM822.5 510h3.5v5h-3.5zM888 502h3v2.5h-3zM888 506.5h3v2.5h-3zM881 490h3.5v4h-3.5zM885.5 490h3.5v4h-3.5zM832.5 512h1.5v2h-1.5zM771 514.5h2v1.5h-2zM873 487h4v2.5h-4zM873 491.5h4v2.5h-4zM824.5 490h1.5v2h-1.5zM872 509.5h3v2.5h-3zM829.5 476h2.5v2h-2.5zM871 466h2.5v2h-2.5zM874.5 466h2.5v2h-2.5zM842.5 452h1.5v2h-1.5zM770 453h4v2.5h-4zM770 457.5h4v2.5h-4zM828 464h2.5v4h-2.5zM832.5 464h2.5v4h-2.5zM793.5 518h1.5v2h-1.5zM911 454h2.5v2h-2.5zM914.5 454h2.5v2h-2.5zM880 510.5h2v2.5h-2zM796 457h2.5v3h-2.5zM800.5 457h2.5v3h-2.5zM803 518.5h2v1.5h-2zM909.5 444h2.5v4h-2.5zM892 489h2.5v2h-2.5zM895.5 489h2.5v2h-2.5zM842 470h2v2.5h-2zM842 473.5h2v2.5h-2zM844 508h2.5v3h-2.5zM848.5 508h2.5v3h-2.5zM867.5 471h2.5v4h-2.5zM771.5 520h1.5v2h-1.5zM771 490h2v2.5h-2zM771 493.5h2v2.5h-2zM767 465h2v2.5h-2zM767 468.5h2v2.5h-2zM822.5 464h3.5v4h-3.5zM859.5 501h2.5v3h-2.5zM780 511h2.5v2h-2.5zM783.5 511h2.5v2h-2.5zM865.5 482h1.5v2h-1.5zM842 498.5h4v2.5h-4zM822.5 503h2.5v4h-2.5zM835 477h3v2.5h-3zM835 480.5h3v2.5h-3zM916 446.5h4v3.5h-4zM912 470h4v3.5h-4zM912 474.5h4v3.5h-4zM856 465h4v3.5h-4zM856 469.5h4v3.5h-4zM770.5 474h2.5v3h-2.5zM832 490h2.5v4h-2.5zM836.5 490h2.5v4h-2.5zM920 469h2v1.5h-2zM920 472.5h2v1.5h-2zM915 460h2.5v2h-2.5zM918.5 460h2.5v2h-2.5zM870 499h1.5v2h-1.5zM873.5 499h1.5v2h-1.5zM823 454h2.5v3h-2.5zM827.5 454h2.5v3h-2.5zM817 473h2.5v2h-2.5zM820.5 473h2.5v2h-2.5zM881 455h2.5v2h-2.5zM884.5 455h2.5v2h-2.5zM853.5 490h1.5v2h-1.5zM849 453h3.5v4h-3.5zM853.5 453h3.5v4h-3.5zM856 508h2v2.5h-2zM856 511.5h2v2.5h-2zM764 505h4v3.5h-4zM764 509.5h4v3.5h-4zM891 447h2.5v2h-2.5zM894.5 447h2.5v2h-2.5zM842 462.5h2v2.5h-2zM898 514h1.5v2h-1.5zM901.5 514h1.5v2h-1.5zM789 455h2v2.5h-2zM789 458.5h2v2.5h-2zM907 494h2v2.5h-2zM907 497.5h2v2.5h-2zM837 509h3v2.5h-3zM837 513.5h3v2.5h-3zM844 504h1.5v2h-1.5zM847.5 504h1.5v2h-1.5zM809 455h2.5v3h-2.5zM812.5 455h2.5v3h-2.5zM817 519h2.5v3h-2.5zM821.5 519h2.5v3h-2.5zM766.5 480h1.5v2h-1.5zM897.5 494h2.5v3h-2.5zM906 505h2.5v3h-2.5zM909.5 505h2.5v3h-2.5zM844.5 481h2.5v3h-2.5zM783.5 455h2.5v3h-2.5zM850 471.5h3v2.5h-3zM911 481h1.5v2h-1.5zM914.5 481h1.5v2h-1.5zM763 489h1.5v2h-1.5zM766.5 489h1.5v2h-1.5zM766 500h2.5v2h-2.5zM769.5 500h2.5v2h-2.5zM779 519.5h2v1.5h-2zM870 480h2.5v4h-2.5zM874.5 480h2.5v4h-2.5zM878 501h2.5v4h-2.5zM882.5 501h2.5v4h-2.5zM852 460h2v2.5h-2zM852 463.5h2v2.5h-2zM855 480h3v2.5h-3zM855 483.5h3v2.5h-3zM865 505h3v2.5h-3zM865 509.5h3v2.5h-3zM833.5 460h1.5v2h-1.5zM866 462h2v1.5h-2zM866 465.5h2v1.5h-2zM798.5 452h2.5v2h-2.5zM909 487h2v1.5h-2zM909 490.5h2v1.5h-2zM832.5 507h2.5v2h-2.5zM811 512h4v2.5h-4zM811 516.5h4v2.5h-4zM790 513h2.5v3h-2.5zM794.5 513h2.5v3h-2.5zM857 460h2.5v3h-2.5zM861.5 460h2.5v3h-2.5zM878 497h2.5v2h-2.5zM881.5 497h2.5v2h-2.5zM831 503h2.5v2h-2.5zM834.5 503h2.5v2h-2.5zM844 514h2.5v3h-2.5zM847.5 514h2.5v3h-2.5zM851 495h2.5v4h-2.5zM855.5 495h2.5v4h-2.5zM911 462.5h2v2.5h-2zM764 485h2.5v2h-2.5zM767.5 485h2.5v2h-2.5zM868 488h2v1.5h-2zM868 491.5h2v1.5h-2zM892.5 512h1.5v2h-1.5zM830 481h2v1.5h-2zM830 484.5h2v1.5h-2zM817 500h1.5v1h-1.5zM819.5 500h1.5v1h-1.5zM846 476h1.5v1h-1.5zM848.5 476h1.5v1h-1.5zM914 467h1.5v1h-1.5zM916.5 467h1.5v1h-1.5zM836.5 456h1.5v2h-1.5zM875 461h1.5v2h-1.5zM878.5 461h1.5v2h-1.5zM817.5 492h1.5v2h-1.5zM884 510h2v1.5h-2zM884 511.5h2v1.5h-2zM907 512h1.5v1h-1.5zM909.5 512h1.5v1h-1.5zM784 518h1.5v2h-1.5zM786.5 518h1.5v2h-1.5zM833 470h1v1.5h-1zM833 472.5h1v1.5h-1zM831 516h1.5v2h-1.5zM832.5 516h1.5v2h-1.5zM820.5 460h1.5v2h-1.5zM871 461h2v1.5h-2zM871 462.5h2v1.5h-2zM820.5 487h1.5v1h-1.5zM876 475h1.5v1h-1.5zM878.5 475h1.5v1h-1.5zM767 495.5h2v1.5h-2zM889 451h2v1.5h-2zM889 454.5h2v1.5h-2zM790.5 452h1.5v1h-1.5zM874 455h1.5v2h-1.5zM877.5 455h1.5v2h-1.5zM826 470h2v1.5h-2zM826 471.5h2v1.5h-2zM898 443h1.5v2h-1.5zM899.5 443h1.5v2h-1.5zM856 476h1.5v2h-1.5zM857.5 476h1.5v2h-1.5zM873 470h1.5v2h-1.5zM874.5 470h1.5v2h-1.5zM766 459h1v1.5h-1zM766 461.5h1v1.5h-1zM771 479h1v1.5h-1zM771 481.5h1v1.5h-1zM902 491h2v1.5h-2zM902 494.5h2v1.5h-2zM838 469.5h2v1.5h-2zM909 450h1.5v2h-1.5zM910.5 450h1.5v2h-1.5zM836.5 498h1.5v2h-1.5zM877 509.5h1v1.5h-1zM892 442h1.5v2h-1.5zM894.5 442h1.5v2h-1.5zM843 489h1.5v2h-1.5zM845.5 489h1.5v2h-1.5zM919 452h2v1.5h-2zM919 454.5h2v1.5h-2zM867 495h1v1.5h-1zM867 497.5h1v1.5h-1zM834 486h1.5v2h-1.5zM835.5 486h1.5v2h-1.5zM807 518.5h1v1.5h-1zM858 491.5h1v1.5h-1zM871.5 514h1.5v2h-1.5zM819.5 496h1.5v1h-1.5zM893 502h2v1.5h-2zM893 505.5h2v1.5h-2zM804 511h1.5v1h-1.5zM806.5 511h1.5v1h-1.5zM861 510h1v1.5h-1zM861 512.5h1v1.5h-1zM849 484.5h1v1.5h-1zM875 452h1.5v1h-1.5zM877.5 452h1.5v1h-1.5zM763 474h2v1.5h-2zM763 476.5h2v1.5h-2zM763 469.5h2v1.5h-2zM851.5 501h1.5v1h-1.5zM790 510h1.5v1h-1.5zM792.5 510h1.5v1h-1.5zM883.5 452h1.5v1h-1.5zM847 459h2v1.5h-2zM847 462.5h2v1.5h-2zM861 477h2v1.5h-2zM861 478.5h2v1.5h-2zM903.5 487h1.5v2h-1.5zM805 457h2v1.5h-2zM805 458.5h2v1.5h-2zM890 486h1.5v1h-1.5zM892.5 486h1.5v1h-1.5zM775 516.5h1v1.5h-1zM870.5 477h1.5v1h-1.5zM799.5 518h1.5v1h-1.5zM771 505h1v1.5h-1zM771 507.5h1v1.5h-1zM827 502h2v1.5h-2zM827 503.5h2v1.5h-2zM806 452h1.5v1h-1.5zM808.5 452h1.5v1h-1.5zM879 481h2v1.5h-2zM879 484.5h2v1.5h-2zM875 515h1.5v1h-1.5zM877.5 515h1.5v1h-1.5zM852 546h3.5v5h-3.5zM858.5 546h3.5v5h-3.5zM810.5 589h3.5v5h-3.5zM892 602h3.5v5h-3.5zM898.5 602h3.5v5h-3.5zM824 599.5h4v3.5h-4zM881 581h4.5v5h-4.5zM887.5 581h4.5v5h-4.5zM815.5 604h3.5v4h-3.5zM805 575.5h2v1.5h-2zM805 542.5h3v2.5h-3zM861 608h2.5v3h-2.5zM864.5 608h2.5v3h-2.5zM859.5 567h2.5v3h-2.5zM897 529h2.5v2h-2.5zM900.5 529h2.5v2h-2.5zM877 604h2.5v3h-2.5zM881.5 604h2.5v3h-2.5zM809 562h4v2.5h-4zM809 566.5h4v2.5h-4zM802 611h3v2.5h-3zM802 615.5h3v2.5h-3zM812 556h3.5v4h-3.5zM816.5 556h3.5v4h-3.5zM825 545h2.5v3h-2.5zM828.5 545h2.5v3h-2.5zM870 593h2.5v4h-2.5zM874.5 593h2.5v4h-2.5zM896 592h2.5v3h-2.5zM900.5 592h2.5v3h-2.5zM844.5 553h2.5v4h-2.5zM828.5 615h2.5v3h-2.5zM835.5 571h2.5v3h-2.5zM812.5 550h2.5v2h-2.5zM841.5 613h2.5v3h-2.5zM861.5 591h2.5v2h-2.5zM857 577h2.5v2h-2.5zM860.5 577h2.5v2h-2.5zM882 589h4v3.5h-4zM882 593.5h4v3.5h-4zM818 564h2.5v2h-2.5zM821.5 564h2.5v2h-2.5zM797 609h3v2.5h-3zM797 612.5h3v2.5h-3zM855.5 563h1.5v2h-1.5zM831 577h2.5v2h-2.5zM834.5 577h2.5v2h-2.5zM821 588h2.5v3h-2.5zM825.5 588h2.5v3h-2.5zM845.5 587h3.5v4h-3.5zM835 597h2.5v3h-2.5zM839.5 597h2.5v3h-2.5zM841 565h2v1.5h-2zM841 568.5h2v1.5h-2zM785 602h3v2.5h-3zM785 606.5h3v2.5h-3zM793 541h2v1.5h-2zM793 544.5h2v1.5h-2zM785 542.5h2v1.5h-2zM849 595h4v3.5h-4zM849 599.5h4v3.5h-4zM865 554h2v1.5h-2zM865 557.5h2v1.5h-2zM824 555h2.5v2h-2.5zM827.5 555h2.5v2h-2.5zM813 536h4v2.5h-4zM813 540.5h4v2.5h-4zM841.5 541h3.5v4h-3.5zM778 604h1.5v2h-1.5zM781.5 604h1.5v2h-1.5zM808 611h4v3.5h-4zM808 615.5h4v3.5h-4zM789.5 614h2.5v3h-2.5zM847 533h2v2.5h-2zM847 536.5h2v2.5h-2zM885 530h2.5v3h-2.5zM889.5 530h2.5v3h-2.5zM868 585h3v2.5h-3zM868 588.5h3v2.5h-3zM850.5 575h2.5v2h-2.5zM852 583h4v3.5h-4zM852 587.5h4v3.5h-4zM860.5 555h1.5v2h-1.5zM885 610h1.5v2h-1.5zM888.5 610h1.5v2h-1.5zM807 583h2.5v3h-2.5zM810.5 583h2.5v3h-2.5zM856.5 530h2.5v3h-2.5zM847 609h2.5v3h-2.5zM850.5 609h2.5v3h-2.5zM812 546h1.5v2h-1.5zM815.5 546h1.5v2h-1.5zM877 531h1.5v2h-1.5zM880.5 531h1.5v2h-1.5zM864 602.5h3v2.5h-3zM803 584.5h2v1.5h-2zM820 545h2v1.5h-2zM820 548.5h2v1.5h-2zM898 579h2.5v3h-2.5zM902.5 579h2.5v3h-2.5zM771 616.5h2v1.5h-2zM837 605h3.5v4h-3.5zM841.5 605h3.5v4h-3.5zM867 530h2.5v3h-2.5zM871.5 530h2.5v3h-2.5zM772 540.5h4v3.5h-4zM833 561h2v1.5h-2zM833 564.5h2v1.5h-2zM906 529h1.5v2h-1.5zM909.5 529h1.5v2h-1.5zM820 569h3v2.5h-3zM820 572.5h3v2.5h-3zM826.5 535h2.5v2h-2.5zM823 579h3v2.5h-3zM823 582.5h3v2.5h-3zM763 572.5h3v2.5h-3zM870 579h2.5v4h-2.5zM874.5 579h2.5v4h-2.5zM810 597h2.5v4h-2.5zM814.5 597h2.5v4h-2.5zM771 603h4v2.5h-4zM771 607.5h4v2.5h-4zM830.5 606h2.5v2h-2.5zM816 578h3v2.5h-3zM816 581.5h3v2.5h-3zM803 559h4v3.5h-4zM803 563.5h4v3.5h-4zM767 607h2v2.5h-2zM767 610.5h2v2.5h-2zM764 599.5h2v1.5h-2zM834 581h2v1.5h-2zM834 583.5h2v1.5h-2zM840 582.5h2v1.5h-2zM765 563h2v1.5h-2zM765 565.5h2v1.5h-2zM767.5 604h1.5v1h-1.5zM882 578h1.5v1h-1.5zM884.5 578h1.5v1h-1.5zM860 541h1.5v1h-1.5zM862.5 541h1.5v1h-1.5zM837 554.5h1v1.5h-1zM763 586h2v1.5h-2zM763 588.5h2v1.5h-2zM807.5 554h1.5v2h-1.5zM846 560h1.5v2h-1.5zM847.5 560h1.5v2h-1.5zM841 533h2v1.5h-2zM841 534.5h2v1.5h-2zM824 611h1.5v2h-1.5zM826.5 611h1.5v2h-1.5zM914 552h2v1.5h-2zM914 554.5h2v1.5h-2zM859 561.5h1v1.5h-1zM888 593h1.5v2h-1.5zM890.5 593h1.5v2h-1.5zM780.5 545h1.5v1h-1.5zM897 598h1.5v1h-1.5zM899.5 598h1.5v1h-1.5zM793 605h2v1.5h-2zM793 607.5h2v1.5h-2zM864 582h1.5v1h-1.5zM866.5 582h1.5v1h-1.5zM897.5 610h1.5v1h-1.5zM888.5 605h1.5v2h-1.5zM869 607h2v1.5h-2zM869 608.5h2v1.5h-2zM764 550h2v1.5h-2zM764 553.5h2v1.5h-2zM829 583h2v1.5h-2zM829 584.5h2v1.5h-2zM780.5 540h1.5v2h-1.5zM835 587h1.5v1h-1.5zM837.5 587h1.5v1h-1.5zM829.5 566h1.5v2h-1.5zM802 602h1.5v2h-1.5zM803.5 602h1.5v2h-1.5zM826 542h1.5v1h-1.5zM828.5 542h1.5v1h-1.5zM894.5 589h1.5v1h-1.5zM837 602h1.5v1h-1.5zM839.5 602h1.5v1h-1.5zM848 566.5h2v1.5h-2zM816 617h1.5v2h-1.5zM819.5 617h1.5v2h-1.5zM873.5 599h1.5v2h-1.5zM904 584h2v1.5h-2zM904 585.5h2v1.5h-2zM863 534h2v1.5h-2zM863 537.5h2v1.5h-2zM840 548h1.5v1h-1.5zM842.5 548h1.5v1h-1.5zM856 538h1v1.5h-1zM856 540.5h1v1.5h-1zM827 575.5h2v1.5h-2zM827.5 560h1.5v2h-1.5zM780 614h2v1.5h-2zM780 617.5h2v1.5h-2zM833 553.5h1v1.5h-1zM914 560h2v1.5h-2zM914 561.5h2v1.5h-2zM804.5 596h1.5v2h-1.5zM886 599h1.5v1h-1.5zM888.5 599h1.5v1h-1.5zM857 598h1.5v2h-1.5zM860.5 598h1.5v2h-1.5zM830 596h1v1.5h-1zM830 598.5h1v1.5h-1zM777 609h1.5v2h-1.5zM779.5 609h1.5v2h-1.5zM834 592.5h2v1.5h-2zM879 589h1v1.5h-1zM879 591.5h1v1.5h-1zM814 612h2v1.5h-2zM814 613.5h2v1.5h-2zM851.5 579h1.5v1h-1.5zM840.5 593h1.5v2h-1.5zM875 610h1.5v2h-1.5zM876.5 610h1.5v2h-1.5zM819 597h2v1.5h-2zM819 598.5h2v1.5h-2zM844 582h1.5v2h-1.5zM846.5 582h1.5v2h-1.5zM851 536h2v1.5h-2zM851 537.5h2v1.5h-2zM850.5 605h1.5v2h-1.5zM810 576h1.5v2h-1.5zM812.5 576h1.5v2h-1.5zM859 586h1.5v2h-1.5zM860.5 586h1.5v2h-1.5zM831 537h1.5v1h-1.5zM833.5 537h1.5v1h-1.5zM849 554h2v1.5h-2zM849 555.5h2v1.5h-2zM838 559h1.5v1h-1.5zM840.5 559h1.5v1h-1.5zM792.5 537h1.5v2h-1.5zM864 548h1.5v2h-1.5zM865.5 548h1.5v2h-1.5zM799 535h1.5v2h-1.5zM801.5 535h1.5v2h-1.5zM863 562h1.5v1h-1.5zM865.5 562h1.5v1h-1.5zM866 575h1v1.5h-1zM866 577.5h1v1.5h-1zM763 557h1.5v2h-1.5zM765.5 557h1.5v2h-1.5zM847 571h1.5v2h-1.5zM848.5 571h1.5v2h-1.5zM764 541h1.5v2h-1.5zM766.5 541h1.5v2h-1.5zM855 602h1.5v2h-1.5zM856.5 602h1.5v2h-1.5zM875.5 586h1.5v1h-1.5zM817 590h2v1.5h-2zM817 591.5h2v1.5h-2zM788 611h1.5v1h-1.5zM790.5 611h1.5v1h-1.5zM766.5 615h1.5v1h-1.5zM891 364h5v4.5h-5zM891 370.5h5v4.5h-5zM915.5 388h2.5v3h-2.5zM897.5 387h2.5v3h-2.5zM901 364h4v3.5h-4zM901 368.5h4v3.5h-4zM906.5 385h1.5v2h-1.5zM906 376h4v2.5h-4zM906 380.5h4v2.5h-4zM923.5 369h2.5v4h-2.5zM893.5 394h2.5v4h-2.5zM913 376h3.5v4h-3.5zM917.5 376h3.5v4h-3.5zM908 368.5h2v2.5h-2zM891 378h3.5v4h-3.5zM895.5 378h3.5v4h-3.5zM904 390h2v2.5h-2zM904 393.5h2v2.5h-2zM911 396h2.5v2h-2.5zM914.5 396h2.5v2h-2.5zM921 389h2v1.5h-2zM921 392.5h2v1.5h-2zM920 366h1.5v1h-1.5zM922.5 366h1.5v1h-1.5zM894 384h1.5v1h-1.5zM896.5 384h1.5v1h-1.5zM922 383h1.5v1h-1.5zM924.5 383h1.5v1h-1.5zM901 375h1.5v2h-1.5zM902.5 375h1.5v2h-1.5zM916 384.5h2v1.5h-2zM898 395.5h2v1.5h-2zM923 379.5h1v1.5h-1zM914 366h2v1.5h-2zM914 369.5h2v1.5h-2zM925 390h1.5v2h-1.5zM926.5 390h1.5v2h-1.5zM901 381h1.5v2h-1.5zM902.5 381h1.5v2h-1.5zM911 393h1.5v1h-1.5zM913.5 393h1.5v1h-1.5zM898 373.5h1v1.5h-1zM946.5 416h2.5v3h-2.5zM934 414h2v2.5h-2zM934 417.5h2v2.5h-2zM936 409h2.5v2h-2.5zM939.5 409h2.5v2h-2.5zM945 411h1.5v2h-1.5zM947.5 411h1.5v2h-1.5zM939 424h1.5v2h-1.5zM942.5 424h1.5v2h-1.5zM938 416h1.5v2h-1.5zM939.5 416h1.5v2h-1.5zM953 446.5h3v2.5h-3zM963 449.5h3v2.5h-3zM956 451h1.5v2h-1.5zM959.5 451h1.5v2h-1.5zM952 455h1.5v1h-1.5zM954.5 455h1.5v1h-1.5zM939 478h2.5v3h-2.5zM942.5 478h2.5v3h-2.5zM939 473h1.5v2h-1.5zM942.5 473h1.5v2h-1.5zM938 461h2.5v4h-2.5zM942.5 461h2.5v4h-2.5zM934 477.5h2v1.5h-2zM944 469.5h1v1.5h-1zM934 466h2v1.5h-2zM934 469.5h2v1.5h-2zM937 499h2.5v3h-2.5zM941.5 499h2.5v3h-2.5zM933 501h2v1.5h-2zM933 504.5h2v1.5h-2zM931.5 491h1.5v1h-1.5zM931 494h1.5v2h-1.5zM932.5 494h1.5v2h-1.5zM943.5 492h1.5v2h-1.5zM951 575h4v3.5h-4zM951 580.5h4v3.5h-4zM934 537.5h2v2.5h-2zM952 558h2.5v2h-2.5zM955.5 558h2.5v2h-2.5zM951 527h3.5v4h-3.5zM955.5 527h3.5v4h-3.5zM949.5 538h2.5v4h-2.5zM936 529h2.5v3h-2.5zM939.5 529h2.5v3h-2.5zM947.5 549h2.5v2h-2.5zM938.5 568h2.5v4h-2.5zM930 518h2.5v3h-2.5zM933.5 518h2.5v3h-2.5zM930 571h2v2.5h-2zM930 574.5h2v2.5h-2zM965 579h1.5v2h-1.5zM968.5 579h1.5v2h-1.5zM943 523h2.5v2h-2.5zM946.5 523h2.5v2h-2.5zM945 572h4v3.5h-4zM945 576.5h4v3.5h-4zM930 551h4v3.5h-4zM930 555.5h4v3.5h-4zM939 559h2v1.5h-2zM939 562.5h2v1.5h-2zM950.5 587h2.5v2h-2.5zM947 516h2.5v3h-2.5zM950.5 516h2.5v3h-2.5zM949.5 563h2.5v2h-2.5zM965 586h1.5v2h-1.5zM968.5 586h1.5v2h-1.5zM929 531h1.5v2h-1.5zM930.5 531h1.5v2h-1.5zM960 522h1.5v2h-1.5zM962.5 522h1.5v2h-1.5zM938 579.5h2v1.5h-2zM959 585h1.5v2h-1.5zM960.5 585h1.5v2h-1.5zM941 544h2v1.5h-2zM941 545.5h2v1.5h-2zM945 556h1v1.5h-1zM945 558.5h1v1.5h-1zM956 546h2v1.5h-2zM956 547.5h2v1.5h-2zM929 563h2v1.5h-2zM929 564.5h2v1.5h-2zM967 528h2v1.5h-2zM967 529.5h2v1.5h-2zM943 584h1.5v1h-1.5zM945.5 584h1.5v1h-1.5zM961 555h1.5v2h-1.5zM964.5 555h1.5v2h-1.5zM947 568h1.5v2h-1.5zM949.5 568h1.5v2h-1.5zM964 527h1v1.5h-1zM964 529.5h1v1.5h-1zM956 518h1.5v2h-1.5zM957.5 518h1.5v2h-1.5zM956 538h2v1.5h-2zM956 541.5h2v1.5h-2zM935 545h1.5v2h-1.5zM937.5 545h1.5v2h-1.5zM953 552h1.5v2h-1.5zM955.5 552h1.5v2h-1.5zM940 574h1.5v2h-1.5zM941.5 574h1.5v2h-1.5zM479 442h3.5v4h-3.5zM483.5 442h3.5v4h-3.5zM477 424h3.5v4h-3.5zM481.5 424h3.5v4h-3.5zM479 450h2.5v3h-2.5zM483.5 450h2.5v3h-2.5zM478 433h3.5v4h-3.5zM482.5 433h3.5v4h-3.5zM482 416.5h2v1.5h-2zM486 458h4v2.5h-4zM486 462.5h4v2.5h-4zM491 427h1v1.5h-1zM491 429.5h1v1.5h-1zM490.5 449h1.5v2h-1.5zM487.5 467h1.5v1h-1.5zM477 464h2v1.5h-2zM477 465.5h2v1.5h-2zM477 459h1.5v2h-1.5zM480.5 459h1.5v2h-1.5zM484 421h1.5v1h-1.5zM486.5 421h1.5v1h-1.5zM487 413h2v1.5h-2zM487 414.5h2v1.5h-2zM484 600h2.5v2h-2.5zM487.5 600h2.5v2h-2.5zM474 585h3v2.5h-3zM474 589.5h3v2.5h-3zM490 590h2.5v3h-2.5zM493.5 590h2.5v3h-2.5zM481 592h3v2.5h-3zM481 595.5h3v2.5h-3zM480 608h1.5v2h-1.5zM483.5 608h1.5v2h-1.5zM481 582h2.5v4h-2.5zM485.5 582h2.5v4h-2.5zM496 602h2v2.5h-2zM496 605.5h2v2.5h-2zM471 606h2.5v3h-2.5zM474.5 606h2.5v3h-2.5zM493 581h1.5v2h-1.5zM496.5 581h1.5v2h-1.5zM478.5 601h1.5v2h-1.5zM490 606h1.5v2h-1.5zM491.5 606h1.5v2h-1.5zM492 596h2v1.5h-2zM492 599.5h2v1.5h-2zM471 597h2v1.5h-2zM471 600.5h2v1.5h-2zM477.5 581h1.5v2h-1.5zM490 582h1v1.5h-1zM490 584.5h1v1.5h-1zM475 594h1.5v1h-1.5zM477.5 594h1.5v1h-1.5zM484.5 588h1.5v2h-1.5zM636.5 445h3.5v4h-3.5zM644 444h2.5v2h-2.5zM647.5 444h2.5v2h-2.5zM630 453h3.5v4h-3.5zM634.5 453h3.5v4h-3.5zM682.5 452h2.5v3h-2.5zM652 453.5h4v3.5h-4zM648 455.5h2v2.5h-2zM678 441h4v2.5h-4zM678 445.5h4v2.5h-4zM642 452.5h2v1.5h-2zM659 456h1.5v1h-1.5zM661.5 456h1.5v1h-1.5zM684 457h1.5v1h-1.5zM686.5 457h1.5v1h-1.5zM657.5 443h1.5v2h-1.5zM671 456h1.5v2h-1.5zM674.5 456h1.5v2h-1.5zM635 441h1.5v1h-1.5zM637.5 441h1.5v1h-1.5zM628 443h1v1.5h-1zM628 445.5h1v1.5h-1zM666 456h1.5v2h-1.5zM667.5 456h1.5v2h-1.5zM631 354h4v3.5h-4zM631 358.5h4v3.5h-4zM620 356h2.5v3h-2.5zM623.5 356h2.5v3h-2.5zM606 356h2.5v4h-2.5zM610.5 356h2.5v4h-2.5zM598 358h2.5v3h-2.5zM601.5 358h2.5v3h-2.5zM589 354h1v1.5h-1zM589 356.5h1v1.5h-1zM637 359.5h1v1.5h-1zM628 358.5h1v1.5h-1zM595 358h1v1.5h-1zM595 360.5h1v1.5h-1zM650.5 376h2.5v4h-2.5zM641 369h3.5v4h-3.5zM645.5 369h3.5v4h-3.5zM650.5 382h1.5v2h-1.5zM654 369h2v1.5h-2zM654 371.5h2v1.5h-2zM528 429h1v1.5h-1zM528 431.5h1v1.5h-1zM533 597.5h4v3.5h-4zM540 604h3v2.5h-3zM540 607.5h3v2.5h-3zM539 597h1.5v2h-1.5zM540.5 597h1.5v2h-1.5zM534 605.5h2v1.5h-2zM537 354h4v4.6h-4zM537 360.4h4v4.6h-4zM1255.6 466.2h6.444v11.5h-6.444zM1265.86 466.2h6.444v11.5h-6.444zM1242.2 497.4h6.228v9.2h-6.228zM1252.07 497.4h6.228v9.2h-6.228zM1226.5 426.3h5.076v6.5h-5.076zM1234.32 426.3h5.076v6.5h-5.076zM1243.6 426.3h5.04v6.5h-5.04zM1251.36 426.3h5.04v6.5h-5.04zM1214.6 520.6h12.8v5.04h-12.8zM1214.6 528.36h12.8v5.04h-12.8zM1214.6 566.6h9.36v6.8h-9.36zM1230.04 566.6h9.36v6.8h-9.36zM1214.6 580.6h4.32v6.8h-4.32zM1221.08 580.6h4.32v6.8h-4.32zM1178.6 584.6h5.76v6.8h-5.76zM1187.64 584.6h5.76v6.8h-5.76zM1195.6 598.6h7.8v5.04h-7.8zM1195.6 606.36h7.8v5.04h-7.8zM1237.6 628.6h8.8v6.48h-8.8zM1237.6 638.92h8.8v6.48h-8.8zM1255.6 628.6h8.8v6.48h-8.8zM1255.6 638.92h8.8v6.48h-8.8zM1028.5 597.8h1.4v1.8h-1.4zM1028.5 631.4h1.4v1.8h-1.4zM1031.1 597.8h1.4v1.8h-1.4zM1031.1 631.4h1.4v1.8h-1.4zM1033.7 597.8h1.4v1.8h-1.4zM1033.7 631.4h1.4v1.8h-1.4zM1036.3 597.8h1.4v1.8h-1.4zM1036.3 631.4h1.4v1.8h-1.4zM1038.9 597.8h1.4v1.8h-1.4zM1038.9 631.4h1.4v1.8h-1.4zM1041.5 597.8h1.4v1.8h-1.4zM1041.5 631.4h1.4v1.8h-1.4zM1044.1 597.8h1.4v1.8h-1.4zM1044.1 631.4h1.4v1.8h-1.4zM1027.3 599h1.8v1.4h-1.8zM1045.4 599h1.8v1.4h-1.8zM1027.3 601.6h1.8v1.4h-1.8zM1045.4 601.6h1.8v1.4h-1.8zM1027.3 604.2h1.8v1.4h-1.8zM1045.4 604.2h1.8v1.4h-1.8zM1027.3 606.8h1.8v1.4h-1.8zM1045.4 606.8h1.8v1.4h-1.8zM1027.3 609.4h1.8v1.4h-1.8zM1045.4 609.4h1.8v1.4h-1.8zM1027.3 612h1.8v1.4h-1.8zM1045.4 612h1.8v1.4h-1.8zM1027.3 614.6h1.8v1.4h-1.8zM1045.4 614.6h1.8v1.4h-1.8zM1027.3 617.2h1.8v1.4h-1.8zM1045.4 617.2h1.8v1.4h-1.8zM1027.3 619.8h1.8v1.4h-1.8zM1045.4 619.8h1.8v1.4h-1.8zM1027.3 622.4h1.8v1.4h-1.8zM1045.4 622.4h1.8v1.4h-1.8zM1027.3 625h1.8v1.4h-1.8zM1045.4 625h1.8v1.4h-1.8zM1027.3 627.6h1.8v1.4h-1.8zM1045.4 627.6h1.8v1.4h-1.8zM1027.3 630.2h1.8v1.4h-1.8zM1045.4 630.2h1.8v1.4h-1.8zM1120 592.8h1.4v1.8h-1.4zM1120 643.4h1.4v1.8h-1.4zM1122.6 592.8h1.4v1.8h-1.4zM1122.6 643.4h1.4v1.8h-1.4zM1125.2 592.8h1.4v1.8h-1.4zM1125.2 643.4h1.4v1.8h-1.4zM1127.8 592.8h1.4v1.8h-1.4zM1127.8 643.4h1.4v1.8h-1.4zM1130.4 592.8h1.4v1.8h-1.4zM1130.4 643.4h1.4v1.8h-1.4zM1133 592.8h1.4v1.8h-1.4zM1133 643.4h1.4v1.8h-1.4zM1135.6 592.8h1.4v1.8h-1.4zM1135.6 643.4h1.4v1.8h-1.4zM1138.2 592.8h1.4v1.8h-1.4zM1138.2 643.4h1.4v1.8h-1.4zM1140.8 592.8h1.4v1.8h-1.4zM1140.8 643.4h1.4v1.8h-1.4zM1118.8 594h1.8v1.4h-1.8zM1143.4 594h1.8v1.4h-1.8zM1118.8 596.6h1.8v1.4h-1.8zM1143.4 596.6h1.8v1.4h-1.8zM1118.8 599.2h1.8v1.4h-1.8zM1143.4 599.2h1.8v1.4h-1.8zM1118.8 601.8h1.8v1.4h-1.8zM1143.4 601.8h1.8v1.4h-1.8zM1118.8 604.4h1.8v1.4h-1.8zM1143.4 604.4h1.8v1.4h-1.8zM1118.8 607h1.8v1.4h-1.8zM1143.4 607h1.8v1.4h-1.8zM1118.8 609.6h1.8v1.4h-1.8zM1143.4 609.6h1.8v1.4h-1.8zM1118.8 612.2h1.8v1.4h-1.8zM1143.4 612.2h1.8v1.4h-1.8zM1118.8 614.8h1.8v1.4h-1.8zM1143.4 614.8h1.8v1.4h-1.8zM1118.8 617.4h1.8v1.4h-1.8zM1143.4 617.4h1.8v1.4h-1.8zM1118.8 620h1.8v1.4h-1.8zM1143.4 620h1.8v1.4h-1.8zM1118.8 622.6h1.8v1.4h-1.8zM1143.4 622.6h1.8v1.4h-1.8zM1118.8 625.2h1.8v1.4h-1.8zM1143.4 625.2h1.8v1.4h-1.8zM1118.8 627.8h1.8v1.4h-1.8zM1143.4 627.8h1.8v1.4h-1.8zM1118.8 630.4h1.8v1.4h-1.8zM1143.4 630.4h1.8v1.4h-1.8zM1118.8 633h1.8v1.4h-1.8zM1143.4 633h1.8v1.4h-1.8zM1118.8 635.6h1.8v1.4h-1.8zM1143.4 635.6h1.8v1.4h-1.8zM1118.8 638.2h1.8v1.4h-1.8zM1143.4 638.2h1.8v1.4h-1.8zM1118.8 640.8h1.8v1.4h-1.8zM1143.4 640.8h1.8v1.4h-1.8zM1077 611.8h1.4v1.8h-1.4zM1077 627.4h1.4v1.8h-1.4zM1079.6 611.8h1.4v1.8h-1.4zM1079.6 627.4h1.4v1.8h-1.4zM1082.2 611.8h1.4v1.8h-1.4zM1082.2 627.4h1.4v1.8h-1.4zM1084.8 611.8h1.4v1.8h-1.4zM1084.8 627.4h1.4v1.8h-1.4zM1087.4 611.8h1.4v1.8h-1.4zM1087.4 627.4h1.4v1.8h-1.4zM1090 611.8h1.4v1.8h-1.4zM1090 627.4h1.4v1.8h-1.4zM1092.6 611.8h1.4v1.8h-1.4zM1092.6 627.4h1.4v1.8h-1.4zM1095.2 611.8h1.4v1.8h-1.4zM1095.2 627.4h1.4v1.8h-1.4zM1075.8 613h1.8v1.4h-1.8zM1097.4 613h1.8v1.4h-1.8zM1075.8 615.6h1.8v1.4h-1.8zM1097.4 615.6h1.8v1.4h-1.8zM1075.8 618.2h1.8v1.4h-1.8zM1097.4 618.2h1.8v1.4h-1.8zM1075.8 620.8h1.8v1.4h-1.8zM1097.4 620.8h1.8v1.4h-1.8zM1075.8 623.4h1.8v1.4h-1.8zM1097.4 623.4h1.8v1.4h-1.8zM1075.8 626h1.8v1.4h-1.8zM1097.4 626h1.8v1.4h-1.8zM1229 568.8h1.4v1.8h-1.4zM1229 581.4h1.4v1.8h-1.4zM1231.6 568.8h1.4v1.8h-1.4zM1231.6 581.4h1.4v1.8h-1.4zM1234.2 568.8h1.4v1.8h-1.4zM1234.2 581.4h1.4v1.8h-1.4zM1236.8 568.8h1.4v1.8h-1.4zM1236.8 581.4h1.4v1.8h-1.4zM1239.4 568.8h1.4v1.8h-1.4zM1239.4 581.4h1.4v1.8h-1.4zM1227.8 570h1.8v1.4h-1.8zM1240.4 570h1.8v1.4h-1.8zM1227.8 572.6h1.8v1.4h-1.8zM1240.4 572.6h1.8v1.4h-1.8zM1227.8 575.2h1.8v1.4h-1.8zM1240.4 575.2h1.8v1.4h-1.8zM1227.8 577.8h1.8v1.4h-1.8zM1240.4 577.8h1.8v1.4h-1.8zM1227.8 580.4h1.8v1.4h-1.8zM1240.4 580.4h1.8v1.4h-1.8zM1004 502h4v4h-4zM1012 502h4v4h-4zM1020 502h4v4h-4zM1033 502h4v4h-4zM1041 502h4v4h-4zM1049 502h4v4h-4zM1041 511h4v4h-4zM1049 511h4v4h-4zM1046 524h4v4h-4zM1121 502h4v4h-4zM1129 502h4v4h-4zM1137 502h4v4h-4zM1151 502h4v4h-4zM1159 502h4v4h-4zM1167 502h4v4h-4zM1159 511h4v4h-4zM1167 511h4v4h-4zM1188 505h4v4h-4zM1164 527h4v4h-4zM1188 521h4v4h-4zM1058 472h1.6v2.6h-1.6zM1058 481h1.6v2.6h-1.6zM1110.5 481h1.6v2.6h-1.6zM1058 489h1.6v2.6h-1.6zM1110.5 489h1.6v2.6h-1.6zM1058 498h1.6v2.6h-1.6zM1110.5 498h1.6v2.6h-1.6zM1058 507h1.6v2.6h-1.6zM1110.5 507h1.6v2.6h-1.6zM1058 516h1.6v2.6h-1.6zM1110.5 516h1.6v2.6h-1.6zM1058 525h1.6v2.6h-1.6zM1110.5 525h1.6v2.6h-1.6zM1044 408h10v11h-10zM1059 408h10v11h-10zM1424 648h8.5v8.5h-8.5zM1437 648h8.5v8.5h-8.5zM1450 648h8.5v8.5h-8.5zM1376 330h5v3.6h-5zM1383.4 330h5v3.6h-5zM1376 335.5h5v4h-5zM1383.4 335.5h5v4h-5zM1398.2 335.5h5v4h-5zM1398.5 384h3.5v5h-3.5zM1382 381h3.5v5h-3.5zM1387.5 381h3.5v5h-3.5zM1343 369h2.5v3h-2.5zM1346.5 369h2.5v3h-2.5zM1298 377h1.5v2h-1.5zM1301.5 377h1.5v2h-1.5zM1391 365h2v2.5h-2zM1391 368.5h2v2.5h-2zM1333 396h2.5v3h-2.5zM1336.5 396h2.5v3h-2.5zM1364 378.5h3v2.5h-3zM1342 388h1.5v2h-1.5zM1345.5 388h1.5v2h-1.5zM1376 383h2v1.5h-2zM1376 386.5h2v1.5h-2zM1368 365h1.5v2h-1.5zM1371.5 365h1.5v2h-1.5zM1383.5 369h2.5v3h-2.5zM1353 389h2.5v3h-2.5zM1357.5 389h2.5v3h-2.5zM1293 382h4v2.5h-4zM1293 386.5h4v2.5h-4zM1328 388.5h2v2.5h-2zM1327 368h2v1.5h-2zM1327 371.5h2v1.5h-2zM1337 384h2v1.5h-2zM1337 387.5h2v1.5h-2zM1334 372h3v2.5h-3zM1334 376.5h3v2.5h-3zM1371.5 390h1.5v2h-1.5zM1288 401.5h4v2.5h-4zM1315 378h2.5v2h-2.5zM1318.5 378h2.5v2h-2.5zM1348 381h2.5v3h-2.5zM1351.5 381h2.5v3h-2.5zM1353 373h2.5v3h-2.5zM1356.5 373h2.5v3h-2.5zM1322 370h2v2.5h-2zM1322 373.5h2v2.5h-2zM1374 376.5h3v2.5h-3zM1340 375h2.5v2h-2.5zM1343.5 375h2.5v2h-2.5zM1384 375h2.5v2h-2.5zM1387.5 375h2.5v2h-2.5zM1306 376h1.5v2h-1.5zM1309.5 376h1.5v2h-1.5zM1297 397.5h2v1.5h-2zM1357 367h2.5v4h-2.5zM1361.5 367h2.5v4h-2.5zM1329 379.5h2v1.5h-2zM1289 392h1.5v2h-1.5zM1292.5 392h1.5v2h-1.5zM1329 395h2v1.5h-2zM1329 398.5h2v1.5h-2zM1383 391h2.5v2h-2.5zM1386.5 391h2.5v2h-2.5zM1358 382h2v1.5h-2zM1358 385.5h2v1.5h-2zM1398 375h3v2.5h-3zM1398 378.5h3v2.5h-3zM1340 365h2.5v2h-2.5zM1343.5 365h2.5v2h-2.5zM1315 372h1.5v2h-1.5zM1318.5 372h1.5v2h-1.5zM1364 389.5h2v1.5h-2zM1323.5 365h1.5v2h-1.5zM1332 389h1.5v2h-1.5zM1333.5 389h1.5v2h-1.5zM1377 365h1v1.5h-1zM1377 367.5h1v1.5h-1zM1343.5 395h1.5v1h-1.5zM1296 401h2v1.5h-2zM1296 402.5h2v1.5h-2zM1289 385h2v1.5h-2zM1289 388.5h2v1.5h-2zM1333.5 365h1.5v2h-1.5zM1349 391h2v1.5h-2zM1349 392.5h2v1.5h-2zM1338.5 369h1.5v1h-1.5zM1353.5 369h1.5v2h-1.5zM1368 386h1.5v1h-1.5zM1370.5 386h1.5v1h-1.5zM1361 375h1v1.5h-1zM1361 377.5h1v1.5h-1zM1392 373h2v1.5h-2zM1392 375.5h2v1.5h-2zM1341 381h1.5v2h-1.5zM1343.5 381h1.5v2h-1.5zM1325.5 378h1.5v2h-1.5zM1370.5 375h1.5v2h-1.5zM1370 371.5h2v1.5h-2zM1370.5 383h1.5v1h-1.5zM1352.5 378h1.5v1h-1.5zM1380 377.5h2v1.5h-2zM1401 392h1.5v1h-1.5zM1403.5 392h1.5v1h-1.5zM1254 523h3.5v5h-3.5zM1260.5 523h3.5v5h-3.5zM1251.5 485h4.5v5h-4.5zM1215 602h4.5v5h-4.5zM1221.5 602h4.5v5h-4.5zM1237 515h5v3.5h-5zM1237 521.5h5v3.5h-5zM1214 476h4.5v5h-4.5zM1220.5 476h4.5v5h-4.5zM1248 516h3.5v5h-3.5zM1253.5 516h3.5v5h-3.5zM1260.5 537h4.5v5h-4.5zM1215 490h5v3.5h-5zM1215 496.5h5v3.5h-5zM1258 615.5h4v3.5h-4zM1257 551h3.5v4h-3.5zM1261.5 551h3.5v4h-3.5zM1258 583h3.5v4h-3.5zM1262.5 583h3.5v4h-3.5zM1252.5 591h2.5v2h-2.5zM1261 597h1.5v2h-1.5zM1264.5 597h1.5v2h-1.5zM1262 565h3v2.5h-3zM1262 568.5h3v2.5h-3zM1211 591h2.5v2h-2.5zM1214.5 591h2.5v2h-2.5zM1229 501h3v2.5h-3zM1229 504.5h3v2.5h-3zM1265 603h3v2.5h-3zM1265 606.5h3v2.5h-3zM1251 437h2.5v3h-2.5zM1255.5 437h2.5v3h-2.5zM1245 558h2v1.5h-2zM1245 561.5h2v1.5h-2zM1221 439h4v3.5h-4zM1221 443.5h4v3.5h-4zM1228 616h2.5v3h-2.5zM1232.5 616h2.5v3h-2.5zM1249.5 539h1.5v2h-1.5zM1234 459h2.5v2h-2.5zM1237.5 459h2.5v2h-2.5zM1214 596h2.5v4h-2.5zM1218.5 596h2.5v4h-2.5zM1256 601h3v2.5h-3zM1256 605.5h3v2.5h-3zM1220 610h2.5v3h-2.5zM1223.5 610h2.5v3h-2.5zM1241.5 492h1.5v2h-1.5zM1246 584h2.5v4h-2.5zM1250.5 584h2.5v4h-2.5zM1225.5 466h2.5v4h-2.5zM1253 444h4v2.5h-4zM1253 448.5h4v2.5h-4zM1262.5 455h2.5v2h-2.5zM1221 623h2.5v2h-2.5zM1224.5 623h2.5v2h-2.5zM1214 549h4v2.5h-4zM1214 553.5h4v2.5h-4zM1217 464h2v1.5h-2zM1217 467.5h2v1.5h-2zM1253.5 613h2.5v4h-2.5zM1223 493.5h2v2.5h-2zM1254 454h3v2.5h-3zM1254 457.5h3v2.5h-3zM1227 510h2.5v4h-2.5zM1231.5 510h2.5v4h-2.5zM1250 558h2.5v3h-2.5zM1254.5 558h2.5v3h-2.5zM1238 617h3.5v4h-3.5zM1242.5 617h3.5v4h-3.5zM1248 570h2.5v3h-2.5zM1251.5 570h2.5v3h-2.5zM1262 591h2.5v3h-2.5zM1266.5 591h2.5v3h-2.5zM1247.5 464h3.5v4h-3.5zM1259 489.5h4v3.5h-4zM1217.5 507h1.5v2h-1.5zM1223.5 451h2.5v2h-2.5zM1226 458h2v1.5h-2zM1226 461.5h2v1.5h-2zM1250 548h3v2.5h-3zM1250 551.5h3v2.5h-3zM1262 429h2v2.5h-2zM1262 432.5h2v2.5h-2zM1250 599h2v2.5h-2zM1250 602.5h2v2.5h-2zM1261 574h1.5v2h-1.5zM1264.5 574h1.5v2h-1.5zM1246 531h2v1.5h-2zM1246 534.5h2v1.5h-2zM1261 517h2.5v4h-2.5zM1265.5 517h2.5v4h-2.5zM1213 612h1.5v2h-1.5zM1216.5 612h1.5v2h-1.5zM1252.5 510h3.5v4h-3.5zM1229 496h1.5v2h-1.5zM1232.5 496h1.5v2h-1.5zM1246 476h1.5v2h-1.5zM1249.5 476h1.5v2h-1.5zM1216 458h2.5v4h-2.5zM1220.5 458h2.5v4h-2.5zM1260 545h2.5v3h-2.5zM1263.5 545h2.5v3h-2.5zM1261 445h2v1.5h-2zM1261 448.5h2v1.5h-2zM1262 531h1.5v2h-1.5zM1265.5 531h1.5v2h-1.5zM1238 530h3v2.5h-3zM1238 533.5h3v2.5h-3zM1213 561h2.5v2h-2.5zM1216.5 561h2.5v2h-2.5zM1262 558h2v1.5h-2zM1262 561.5h2v1.5h-2zM1258 567h2v1.5h-2zM1258 570.5h2v1.5h-2zM1253.5 564h2.5v2h-2.5zM1248.5 527h2.5v2h-2.5zM1247 578h2.5v2h-2.5zM1250.5 578h2.5v2h-2.5zM1211 618h2v1.5h-2zM1211 621.5h2v1.5h-2zM1233 522h2v2.5h-2zM1233 525.5h2v2.5h-2zM1213 538h2.5v3h-2.5zM1217.5 538h2.5v3h-2.5zM1219 618h2.5v2h-2.5zM1222.5 618h2.5v2h-2.5zM1242.5 511h2.5v2h-2.5zM1219 484h2.5v2h-2.5zM1222.5 484h2.5v2h-2.5zM1265 616.5h3v2.5h-3zM1216 446.5h3v2.5h-3zM1263.5 510h1.5v2h-1.5zM1229 587h1.5v2h-1.5zM1232.5 587h1.5v2h-1.5zM1223.5 591h1.5v2h-1.5zM1236.5 465h3.5v4h-3.5zM1265.5 501h1.5v2h-1.5zM1260 461h2.5v2h-2.5zM1263.5 461h2.5v2h-2.5zM1237 587h2.5v3h-2.5zM1241.5 587h2.5v3h-2.5zM1250 621h2.5v3h-2.5zM1253.5 621h2.5v3h-2.5zM1246 457h2.5v2h-2.5zM1249.5 457h2.5v2h-2.5zM1250 640.5h2v1.5h-2zM1213 470.5h2v1.5h-2zM1264 623h2.5v2h-2.5zM1267.5 623h2.5v2h-2.5zM1232 626h2v1.5h-2zM1232 629.5h2v1.5h-2zM1252 532h2.5v3h-2.5zM1256.5 532h2.5v3h-2.5zM1221.5 515h1.5v2h-1.5zM1217.5 545h1.5v2h-1.5zM1257 575h2v1.5h-2zM1257 578.5h2v1.5h-2zM1230 459.5h2v1.5h-2zM1263.5 506h1.5v2h-1.5zM1211 604h2v1.5h-2zM1211 606.5h2v1.5h-2zM1225 500h2v1.5h-2zM1225 501.5h2v1.5h-2zM1267 560.5h2v1.5h-2zM1214 511h2v1.5h-2zM1214 514.5h2v1.5h-2zM1262 441h1.5v1h-1.5zM1264.5 441h1.5v1h-1.5zM1215 622h1.5v1h-1.5zM1217.5 622h1.5v1h-1.5zM1229.5 490h1.5v1h-1.5zM1249 608h2v1.5h-2zM1249 609.5h2v1.5h-2zM1245 545h2v1.5h-2zM1245 548.5h2v1.5h-2zM1260 437h1.5v2h-1.5zM1262.5 437h1.5v2h-1.5zM1218 432h2v1.5h-2zM1218 434.5h2v1.5h-2zM1245 481h1.5v2h-1.5zM1247.5 481h1.5v2h-1.5zM1260.5 481h1.5v2h-1.5zM1262 497h1.5v2h-1.5zM1265.5 497h1.5v2h-1.5zM1217 472h1.5v2h-1.5zM1220.5 472h1.5v2h-1.5zM1267 553.5h2v1.5h-2zM1230 532h1.5v2h-1.5zM1232.5 532h1.5v2h-1.5zM1266 432h1v1.5h-1zM1266 434.5h1v1.5h-1zM1253 545h1.5v1h-1.5zM1255.5 545h1.5v1h-1.5zM1214 484h2v1.5h-2zM1214 485.5h2v1.5h-2zM1266 486h1v1.5h-1zM1266 488.5h1v1.5h-1zM1235 492.5h1v1.5h-1zM1237.5 623h1.5v2h-1.5zM1246 492h1.5v1h-1.5zM1248.5 492h1.5v1h-1.5zM1221 504h2v1.5h-2zM1221 507.5h2v1.5h-2zM1266 527h1.5v2h-1.5zM1267.5 527h1.5v2h-1.5zM1268 633h1.5v2h-1.5zM1269.5 633h1.5v2h-1.5zM1268 639h1.5v2h-1.5zM1269.5 639h1.5v2h-1.5zM1265 447h2v1.5h-2zM1265 450.5h2v1.5h-2zM1221 511h1.5v2h-1.5zM1223.5 511h1.5v2h-1.5zM1215 452h2v1.5h-2zM1215 454.5h2v1.5h-2zM1236 505h1.5v2h-1.5zM1237.5 505h1.5v2h-1.5zM1216 576h1.5v1h-1.5zM1218.5 576h1.5v1h-1.5zM1269 627h2v1.5h-2zM1269 629.5h2v1.5h-2zM1234 501h1.5v1h-1.5zM1236.5 501h1.5v1h-1.5zM1249 523h1.5v2h-1.5zM1250.5 523h1.5v2h-1.5zM1245.5 623h1.5v2h-1.5zM1233.5 517h1.5v1h-1.5zM1268 596h1v1.5h-1zM1268 598.5h1v1.5h-1zM1248 595h1.5v2h-1.5zM1250.5 595h1.5v2h-1.5zM1254 597h1.5v1h-1.5zM1256.5 597h1.5v1h-1.5zM1244 471h1.5v1h-1.5zM1246.5 471h1.5v1h-1.5zM1249 631h2v1.5h-2zM1249 633.5h2v1.5h-2zM1213 437h1v1.5h-1zM1213 439.5h1v1.5h-1zM1249 627h1.5v2h-1.5zM1250.5 627h1.5v2h-1.5zM1227 445h1v1.5h-1zM1227 447.5h1v1.5h-1zM1220 455h1.5v1h-1.5zM1222.5 455h1.5v1h-1.5zM1263 579h1.5v1h-1.5zM1265.5 579h1.5v1h-1.5zM1223 596h1v1.5h-1zM1223 598.5h1v1.5h-1zM1226.5 436h1.5v1h-1.5zM1252 482h1.5v1h-1.5zM1254.5 482h1.5v1h-1.5zM1211 597.5h1v1.5h-1zM1250 450h1v1.5h-1zM1250 452.5h1v1.5h-1zM1215 558h1.5v1h-1.5zM1217.5 558h1.5v1h-1.5zM1247 461h1.5v1h-1.5zM1249.5 461h1.5v1h-1.5zM1270 616h1v1.5h-1zM1270 618.5h1v1.5h-1zM1175 626.5h5v3.5h-5zM1202 590h1.5v2h-1.5zM1205.5 590h1.5v2h-1.5zM1207 582h2v1.5h-2zM1207 585.5h2v1.5h-2zM1193.5 618h2.5v3h-2.5zM1202 615h2v1.5h-2zM1202 618.5h2v1.5h-2zM1177 635h2.5v3h-2.5zM1180.5 635h2.5v3h-2.5zM1199 580h4v2.5h-4zM1199 584.5h4v2.5h-4zM1199 623h2v1.5h-2zM1199 626.5h2v1.5h-2zM1172 603h2v1.5h-2zM1172 606.5h2v1.5h-2zM1185 617h2v1.5h-2zM1185 620.5h2v1.5h-2zM1207 618.5h2v1.5h-2zM1180.5 642h1.5v2h-1.5zM1172 587h2v2.5h-2zM1172 590.5h2v2.5h-2zM1206.5 623h1.5v2h-1.5zM1206 602.5h2v1.5h-2zM1208 609h1v1.5h-1zM1208 611.5h1v1.5h-1zM1173 616h2v1.5h-2zM1173 617.5h2v1.5h-2zM1197.5 614h1.5v1h-1.5zM1198 591h2v1.5h-2zM1198 593.5h2v1.5h-2zM1172 637h1.5v2h-1.5zM1173.5 637h1.5v2h-1.5zM1206 597.5h2v1.5h-2zM1179.5 616h1.5v2h-1.5zM1184 643h1.5v1h-1.5zM1186.5 643h1.5v1h-1.5zM1178 632h1.5v1h-1.5zM1180.5 632h1.5v1h-1.5zM1172 632h1.5v2h-1.5zM1173.5 632h1.5v2h-1.5zM1312.5 462h2.5v3h-2.5zM1311.5 438h2.5v2h-2.5zM1309.5 433h2.5v3h-2.5zM1301 461.5h2v2.5h-2zM1315 431h2.5v4h-2.5zM1319.5 431h2.5v4h-2.5zM1300 435h1.5v2h-1.5zM1301.5 435h1.5v2h-1.5zM1319.5 439h1.5v2h-1.5zM1307 430h1.5v1h-1.5zM1309.5 430h1.5v1h-1.5zM1324 456h2v1.5h-2zM1324 457.5h2v1.5h-2zM1300 451h1v1.5h-1zM1300 453.5h1v1.5h-1zM1301 447.5h2v1.5h-2zM1324 435h2v1.5h-2zM1324 436.5h2v1.5h-2zM1378 630h3.5v5h-3.5zM1383.5 630h3.5v5h-3.5zM1278 621.5h5v3.5h-5zM1381 614h4.5v5h-4.5zM1387.5 614h4.5v5h-4.5zM1366 619h2.5v3h-2.5zM1370.5 619h2.5v3h-2.5zM1311 643h3v2.5h-3zM1311 646.5h3v2.5h-3zM1442.5 621h2.5v2h-2.5zM1292 610h2.5v3h-2.5zM1296.5 610h2.5v3h-2.5zM1356 629h2v1.5h-2zM1356 632.5h2v1.5h-2zM1336 613h2.5v3h-2.5zM1340.5 613h2.5v3h-2.5zM1303 636.5h2v1.5h-2zM1393 625h4v2.5h-4zM1393 629.5h4v2.5h-4zM1320 627h3.5v4h-3.5zM1324.5 627h3.5v4h-3.5zM1369 638h3.5v4h-3.5zM1373.5 638h3.5v4h-3.5zM1348 614h2.5v3h-2.5zM1351.5 614h2.5v3h-2.5zM1291 622h2.5v3h-2.5zM1295.5 622h2.5v3h-2.5zM1317 637h4v2.5h-4zM1317 641.5h4v2.5h-4zM1420 622h1.5v2h-1.5zM1423.5 622h1.5v2h-1.5zM1348 623h1.5v2h-1.5zM1351.5 623h1.5v2h-1.5zM1379.5 624h2.5v3h-2.5zM1360 622.5h2v2.5h-2zM1308.5 614h2.5v4h-2.5zM1328 644h3v2.5h-3zM1328 647.5h3v2.5h-3zM1333 637h2.5v3h-2.5zM1337.5 637h2.5v3h-2.5zM1339.5 625h3.5v4h-3.5zM1302 625h2.5v4h-2.5zM1306.5 625h2.5v4h-2.5zM1411 615h2.5v4h-2.5zM1415.5 615h2.5v4h-2.5zM1350 643h1.5v2h-1.5zM1353.5 643h1.5v2h-1.5zM1363 635h2v1.5h-2zM1363 638.5h2v1.5h-2zM1360 645h2.5v4h-2.5zM1364.5 645h2.5v4h-2.5zM1395 612h2v1.5h-2zM1395 615.5h2v1.5h-2zM1400 621h3v2.5h-3zM1400 624.5h3v2.5h-3zM1346 634.5h2v2.5h-2zM1401 612h2.5v2h-2.5zM1404.5 612h2.5v2h-2.5zM1329.5 620h2.5v3h-2.5zM1370 628h4v3.5h-4zM1370 632.5h4v3.5h-4zM1384 643h2.5v3h-2.5zM1388.5 643h2.5v3h-2.5zM1367 614.5h2v2.5h-2zM1327 635h2v1.5h-2zM1327 638.5h2v1.5h-2zM1314 622h1.5v2h-1.5zM1317.5 622h1.5v2h-1.5zM1314 628h3v2.5h-3zM1314 631.5h3v2.5h-3zM1421 614h2.5v2h-2.5zM1424.5 614h2.5v2h-2.5zM1396 639h4v3.5h-4zM1396 643.5h4v3.5h-4zM1285 621h2v1.5h-2zM1285 623.5h2v1.5h-2zM1374 649h1.5v2h-1.5zM1377.5 649h1.5v2h-1.5zM1389.5 622h1.5v2h-1.5zM1286 616h1.5v2h-1.5zM1289.5 616h1.5v2h-1.5zM1407.5 617h1.5v2h-1.5zM1347 610h1.5v2h-1.5zM1350.5 610h1.5v2h-1.5zM1286 610h1.5v2h-1.5zM1287.5 610h1.5v2h-1.5zM1446 612.5h2v1.5h-2zM1454 614h1.5v2h-1.5zM1457.5 614h1.5v2h-1.5zM1354 637h1.5v2h-1.5zM1357.5 637h1.5v2h-1.5zM1379 637h1v1.5h-1zM1379 639.5h1v1.5h-1zM1324 645h1v1.5h-1zM1324 647.5h1v1.5h-1zM1322 616h1.5v1h-1.5zM1324.5 616h1.5v1h-1.5zM1410 611h1.5v2h-1.5zM1413.5 611h1.5v2h-1.5zM1340.5 649h1.5v2h-1.5zM1362 631h1.5v2h-1.5zM1365.5 631h1.5v2h-1.5zM1301 646h2v1.5h-2zM1301 647.5h2v1.5h-2zM1389 635h1.5v2h-1.5zM1392.5 635h1.5v2h-1.5zM1311 637h1.5v1h-1.5zM1313.5 637h1.5v1h-1.5zM1390.5 649h1.5v2h-1.5zM1430 610h2v1.5h-2zM1430 611.5h2v1.5h-2zM1405 623h1.5v1h-1.5zM1407.5 623h1.5v1h-1.5zM1401 630h1.5v2h-1.5zM1403.5 630h1.5v2h-1.5zM1338 645.5h2v1.5h-2zM1437 612h1.5v2h-1.5zM1439.5 612h1.5v2h-1.5zM1275 610h2v1.5h-2zM1275 612.5h2v1.5h-2zM1274 635.5h2v1.5h-2zM1300 635h1v1.5h-1zM1300 637.5h1v1.5h-1zM1302.5 642h1.5v1h-1.5zM1316 612h2v1.5h-2zM1316 615.5h2v1.5h-2zM1347 642h1v1.5h-1zM1347 644.5h1v1.5h-1zM1411 621h1.5v2h-1.5zM1413.5 621h1.5v2h-1.5zM1329 613.5h1v1.5h-1zM1316 646h1v1.5h-1zM1316 648.5h1v1.5h-1zM1351 633h1v1.5h-1zM1351 635.5h1v1.5h-1zM1336.5 632h1.5v2h-1.5zM1431 615h2v1.5h-2zM1431 618.5h2v1.5h-2zM1307 622h1.5v1h-1.5zM1309.5 622h1.5v1h-1.5zM1375 620h1.5v2h-1.5zM1377.5 620h1.5v2h-1.5zM1341 620h1.5v2h-1.5zM1344.5 620h1.5v2h-1.5zM1448 617h2v1.5h-2zM1448 618.5h2v1.5h-2zM1336.5 618h1.5v2h-1.5zM1453.5 591h4.5v5h-4.5zM1448 531.5h4v3.5h-4zM1463.5 580h3.5v4h-3.5zM1449.5 540h2.5v3h-2.5zM1459 523h3.5v4h-3.5zM1463.5 523h3.5v4h-3.5zM1450 557h2.5v4h-2.5zM1454.5 557h2.5v4h-2.5zM1445 558h2v1.5h-2zM1445 561.5h2v1.5h-2zM1447 586h2.5v3h-2.5zM1450.5 586h2.5v3h-2.5zM1456.5 604h2.5v3h-2.5zM1444 500h2.5v3h-2.5zM1447.5 500h2.5v3h-2.5zM1446 570h2.5v3h-2.5zM1450.5 570h2.5v3h-2.5zM1447 551h2.5v3h-2.5zM1451.5 551h2.5v3h-2.5zM1448.5 508h1.5v2h-1.5zM1465 541.5h3v2.5h-3zM1457 547h2.5v4h-2.5zM1461.5 547h2.5v4h-2.5zM1449 577h2.5v4h-2.5zM1453.5 577h2.5v4h-2.5zM1462 594.5h4v3.5h-4zM1461 517.5h4v2.5h-4zM1458 568h2v1.5h-2zM1458 571.5h2v1.5h-2zM1463 560.5h2v2.5h-2zM1451 518h2v2.5h-2zM1451 521.5h2v2.5h-2zM1458 531h2.5v3h-2.5zM1462.5 531h2.5v3h-2.5zM1456 505h2v2.5h-2zM1456 508.5h2v2.5h-2zM1449 546h2.5v3h-2.5zM1452.5 546h2.5v3h-2.5zM1444 604h1.5v2h-1.5zM1447.5 604h1.5v2h-1.5zM1462 604h2.5v3h-2.5zM1465.5 604h2.5v3h-2.5zM1457 538h2.5v3h-2.5zM1460.5 538h2.5v3h-2.5zM1448.5 496h1.5v2h-1.5zM1453 501h1.5v2h-1.5zM1456.5 501h1.5v2h-1.5zM1451 599h2.5v2h-2.5zM1454.5 599h2.5v2h-2.5zM1465 574.5h4v2.5h-4zM1447.5 521h1.5v2h-1.5zM1450 514h1.5v2h-1.5zM1453.5 514h1.5v2h-1.5zM1452 509h2v1.5h-2zM1452 510.5h2v1.5h-2zM1452 497h1.5v2h-1.5zM1453.5 497h1.5v2h-1.5zM1445 580.5h2v1.5h-2zM1444 598h1v1.5h-1zM1444 600.5h1v1.5h-1zM1459 556h2v1.5h-2zM1459 559.5h2v1.5h-2zM1457 564h1.5v1h-1.5zM1459.5 564h1.5v1h-1.5zM1453 609h1.5v2h-1.5zM1455.5 609h1.5v2h-1.5zM1444 513h2v1.5h-2zM1444 515.5h2v1.5h-2zM1454 527h2v1.5h-2zM1454 528.5h2v1.5h-2zM1462 600h1.5v1h-1.5zM1464.5 600h1.5v1h-1.5zM1467 546h2v1.5h-2zM1467 548.5h2v1.5h-2zM1449 565h1.5v2h-1.5zM1451.5 565h1.5v2h-1.5zM1467 534.5h2v1.5h-2zM1444 565h1.5v2h-1.5zM1445.5 565h1.5v2h-1.5zM1453.5 618h1.5v2h-1.5zM1455 521h2v1.5h-2zM1455 523.5h2v1.5h-2zM1454 532h2v1.5h-2zM1454 533.5h2v1.5h-2zM1457.5 587h1.5v1h-1.5zM1465.5 586h1.5v1h-1.5zM1462.5 509h1.5v2h-1.5zM1444 531h1v1.5h-1zM1444 533.5h1v1.5h-1zM1459.5 553h1.5v1h-1.5zM1464 553h1.5v2h-1.5zM1466.5 553h1.5v2h-1.5zM1468 598h1v1.5h-1zM1468 600.5h1v1.5h-1zM1446 537h1.5v1h-1.5zM1448.5 537h1.5v1h-1.5zM1443 505h1.5v1h-1.5zM1445.5 505h1.5v1h-1.5zM1431.5 509h3.5v4h-3.5zM1364.5 507h2.5v3h-2.5zM1419 502h2.5v3h-2.5zM1422.5 502h2.5v3h-2.5zM1326 503h2v1.5h-2zM1326 506.5h2v1.5h-2zM1400 507.5h4v2.5h-4zM1349 506h3v2.5h-3zM1349 509.5h3v2.5h-3zM1375 508h3.5v4h-3.5zM1379.5 508h3.5v4h-3.5zM1435 499h2.5v2h-2.5zM1438.5 499h2.5v2h-2.5zM1394 502h2v2.5h-2zM1394 505.5h2v2.5h-2zM1337 508h3.5v4h-3.5zM1341.5 508h3.5v4h-3.5zM1376 502h2.5v4h-2.5zM1380.5 502h2.5v4h-2.5zM1412 508.5h4v2.5h-4zM1433.5 504h2.5v3h-2.5zM1321 503h2v1.5h-2zM1321 506.5h2v1.5h-2zM1407 506.5h3v2.5h-3zM1336 503h2.5v2h-2.5zM1339.5 503h2.5v2h-2.5zM1394 510h1.5v2h-1.5zM1395.5 510h1.5v2h-1.5zM1369 503h1.5v2h-1.5zM1370.5 503h1.5v2h-1.5zM1361 503h1.5v2h-1.5zM1363.5 503h1.5v2h-1.5zM1389 509h2v1.5h-2zM1389 510.5h2v1.5h-2zM1370.5 510h1.5v2h-1.5zM1439.5 511h1.5v1h-1.5zM1345 502h2v1.5h-2zM1345 503.5h2v1.5h-2zM1361 513h1.5v2h-1.5zM1364.5 513h1.5v2h-1.5zM1332 507h1v1.5h-1zM1332 509.5h1v1.5h-1zM1422 507h1v1.5h-1zM1422 509.5h1v1.5h-1zM1390 504h2v1.5h-2zM1390 505.5h2v1.5h-2zM1354 508h1.5v2h-1.5zM1356.5 508h1.5v2h-1.5zM1353 502h1.5v2h-1.5zM1356.5 502h1.5v2h-1.5zM1407 511h1.5v2h-1.5zM1408.5 511h1.5v2h-1.5zM1324.5 512h1.5v1h-1.5zM1418 511.5h2v1.5h-2zM1332.5 503h1.5v1h-1.5zM1098 596h3.5v5h-3.5zM1104.5 596h3.5v5h-3.5zM1103 606h3.5v5h-3.5zM1108.5 606h3.5v5h-3.5zM1061 592h4v3.5h-4zM1061 597.5h4v3.5h-4zM1081 640h3.5v4h-3.5zM1085.5 640h3.5v4h-3.5zM1056 634h2v2.5h-2zM1056 637.5h2v2.5h-2zM1103 632h2.5v2h-2.5zM1106.5 632h2.5v2h-2.5zM1108 615h3v2.5h-3zM1108 619.5h3v2.5h-3zM1065 635h2v2.5h-2zM1065 638.5h2v2.5h-2zM1017 608h2v2.5h-2zM1017 611.5h2v2.5h-2zM1080 596h3v2.5h-3zM1080 600.5h3v2.5h-3zM1053 613h1.5v2h-1.5zM1056.5 613h1.5v2h-1.5zM1051 590h3v2.5h-3zM1051 594.5h3v2.5h-3zM1104 589h3.5v4h-3.5zM1108.5 589h3.5v4h-3.5zM1152 604h2v2.5h-2zM1152 607.5h2v2.5h-2zM1095 643h2.5v3h-2.5zM1099.5 643h2.5v3h-2.5zM1061.5 605h2.5v2h-2.5zM1089.5 635h1.5v2h-1.5zM1026 639h3.5v4h-3.5zM1030.5 639h3.5v4h-3.5zM1068 611h3v2.5h-3zM1068 614.5h3v2.5h-3zM1050 640.5h3v2.5h-3zM1152 614h4v2.5h-4zM1152 618.5h4v2.5h-4zM1105 625h2.5v3h-2.5zM1109.5 625h2.5v3h-2.5zM1112.5 643h2.5v3h-2.5zM1055 621h2.5v3h-2.5zM1058.5 621h2.5v3h-2.5zM1017 633h2.5v3h-2.5zM1021.5 633h2.5v3h-2.5zM1072 638h4v3.5h-4zM1072 642.5h4v3.5h-4zM1022 588h2.5v3h-2.5zM1025.5 588h2.5v3h-2.5zM1068 599h3.5v4h-3.5zM1072.5 599h3.5v4h-3.5zM1044.5 591h2.5v3h-2.5zM1064 622.5h2v1.5h-2zM1041 640h2.5v2h-2.5zM1044.5 640h2.5v2h-2.5zM1088 600h3.5v4h-3.5zM1092.5 600h3.5v4h-3.5zM1020.5 628h2.5v2h-2.5zM1017 620h2.5v4h-2.5zM1021.5 620h2.5v4h-2.5zM1086 591h4v2.5h-4zM1086 595.5h4v2.5h-4zM1152.5 599h1.5v2h-1.5zM1051 601h3v2.5h-3zM1051 605.5h3v2.5h-3zM1057 627h2.5v4h-2.5zM1061.5 627h2.5v4h-2.5zM1095 638h2.5v2h-2.5zM1098.5 638h2.5v2h-2.5zM1072 595h2.5v2h-2.5zM1075.5 595h2.5v2h-2.5zM1149 624h1.5v2h-1.5zM1152.5 624h1.5v2h-1.5zM1069 606h1.5v2h-1.5zM1072.5 606h1.5v2h-1.5zM1076 634h1.5v2h-1.5zM1079.5 634h1.5v2h-1.5zM1154.5 591h2.5v3h-2.5zM1062 611h2v2.5h-2zM1062 614.5h2v2.5h-2zM1099.5 590h2.5v3h-2.5zM1158 604h2v2.5h-2zM1158 607.5h2v2.5h-2zM1020 598h4v2.5h-4zM1020 602.5h4v2.5h-4zM1083 647h2.5v3h-2.5zM1086.5 647h2.5v3h-2.5zM1112 601.5h3v2.5h-3zM1068 620h2v1.5h-2zM1068 622.5h2v1.5h-2zM1112 632h2v1.5h-2zM1112 633.5h2v1.5h-2zM1021 610h2v1.5h-2zM1021 612.5h2v1.5h-2zM1119 648h1.5v1h-1.5zM1121.5 648h1.5v1h-1.5zM1069 633.5h2v1.5h-2zM1058 643h1.5v1h-1.5zM1060.5 643h1.5v1h-1.5zM1149 618h1v1.5h-1zM1149 620.5h1v1.5h-1zM1051 620.5h2v1.5h-2zM1078 642h1v1.5h-1zM1078 644.5h1v1.5h-1zM1042 636h1.5v1h-1.5zM1044.5 636h1.5v1h-1.5zM1105.5 638h1.5v2h-1.5zM1094 633h1.5v1h-1.5zM1096.5 633h1.5v1h-1.5zM1076 648h1.5v2h-1.5zM1078.5 648h1.5v2h-1.5zM1019 593h1.5v2h-1.5zM1020.5 593h1.5v2h-1.5zM1081 606h1.5v2h-1.5zM1082.5 606h1.5v2h-1.5zM1069.5 627h1.5v1h-1.5zM1072 591.5h2v1.5h-2zM1033 592.5h2v1.5h-2zM1103 613h2v1.5h-2zM1103 615.5h2v1.5h-2zM1068 591h2v1.5h-2zM1068 594.5h2v1.5h-2zM1125 649h1.5v1h-1.5zM1127.5 649h1.5v1h-1.5zM1148 629h1.5v1h-1.5zM1150.5 629h1.5v1h-1.5zM1158 612h2v1.5h-2zM1158 613.5h2v1.5h-2zM1050 628h1.5v1h-1.5zM1052.5 628h1.5v1h-1.5zM1157.5 596h1.5v1h-1.5zM1100 604h1v1.5h-1zM1100 606.5h1v1.5h-1zM1017 599.5h1v1.5h-1zM1112 637h1.5v2h-1.5zM1113.5 637h1.5v2h-1.5zM1052.5 610h1.5v1h-1.5zM1133 648h1.5v1h-1.5zM1135.5 648h1.5v1h-1.5zM1105.5 603h1.5v1h-1.5zM1056 599.5h2v1.5h-2zM1109 648h1.5v2h-1.5zM1112.5 648h1.5v2h-1.5zM1148 612h2v1.5h-2zM1148 613.5h2v1.5h-2zM1037 636h1v1.5h-1zM1037 638.5h1v1.5h-1zM1148 604h1v1.5h-1zM1148 606.5h1v1.5h-1zM1460 414h3.5v5h-3.5zM1466.5 414h3.5v5h-3.5zM1463 457h2.5v3h-2.5zM1467.5 457h2.5v3h-2.5zM1463 431h4v2.5h-4zM1463 435.5h4v2.5h-4zM1465.5 408h2.5v4h-2.5zM1460 444.5h3v2.5h-3zM1467 445h4v3.5h-4zM1467 449.5h4v3.5h-4zM1464.5 464h2.5v4h-2.5zM1457 423h2.5v3h-2.5zM1461.5 423h2.5v3h-2.5zM1459 397h3v2.5h-3zM1459 401.5h3v2.5h-3zM1465 399h2v2.5h-2zM1465 402.5h2v2.5h-2zM1458 458.5h2v2.5h-2zM1470 400h2v1.5h-2zM1470 403.5h2v1.5h-2zM1465 393h2.5v3h-2.5zM1468.5 393h2.5v3h-2.5zM1467 422h4v2.5h-4zM1467 426.5h4v2.5h-4zM1458 433h2v1.5h-2zM1458 436.5h2v1.5h-2zM1470 432h2v1.5h-2zM1470 435.5h2v1.5h-2zM1460.5 451h1.5v2h-1.5zM1472 461.5h1v1.5h-1zM1458 393h1.5v1h-1.5zM1460.5 393h1.5v1h-1.5zM1457 408.5h2v1.5h-2zM1469 441h1.5v2h-1.5zM1470.5 441h1.5v2h-1.5zM1469 468h1.5v1h-1.5zM1471.5 468h1.5v1h-1.5zM1470 408h1v1.5h-1zM1470 410.5h1v1.5h-1zM1458 429h1.5v2h-1.5zM1459.5 429h1.5v2h-1.5zM1432 420.5h2v1.5h-2zM1431 429h2.5v2h-2.5zM1434.5 429h2.5v2h-2.5zM1431 434h1.5v2h-1.5zM1434.5 434h1.5v2h-1.5zM1436 415h2v1.5h-2zM1436 418.5h2v1.5h-2zM1428 423.5h2v1.5h-2zM1032.5 383h3.5v4h-3.5zM1026 403.5h2v1.5h-2zM1025 396h2.5v2h-2.5zM1028.5 396h2.5v2h-2.5zM1020.5 390h2.5v2h-2.5zM1034 390h3v2.5h-3zM1034 393.5h3v2.5h-3zM1039 398h1.5v2h-1.5zM1040.5 398h1.5v2h-1.5zM1035 404h1.5v2h-1.5zM1037.5 404h1.5v2h-1.5zM1019 397h2v1.5h-2zM1019 400.5h2v1.5h-2zM1041 386.5h1v1.5h-1zM1023.5 384h1.5v1h-1.5zM1152 580h3.5v4h-3.5zM1156.5 580h3.5v4h-3.5zM1129 581h1.5v2h-1.5zM1132.5 581h1.5v2h-1.5zM1158 576h1.5v2h-1.5zM1159.5 576h1.5v2h-1.5zM1147 577h1.5v1h-1.5zM1149.5 577h1.5v1h-1.5zM1144 580h2v1.5h-2zM1144 581.5h2v1.5h-2zM1428.5 432h1.2v1.2h-1.2zM1433 432h1.2v1.2h-1.2zM1428.5 436.2h1.2v1.2h-1.2zM1433 436.2h1.2v1.2h-1.2zM1428.5 440.4h1.2v1.2h-1.2zM1433 440.4h1.2v1.2h-1.2zM1428.5 444.6h1.2v1.2h-1.2zM1433 444.6h1.2v1.2h-1.2zM1428.5 448.8h1.2v1.2h-1.2zM1433 448.8h1.2v1.2h-1.2zM1428.5 453h1.2v1.2h-1.2zM1433 453h1.2v1.2h-1.2zM1428.5 457.2h1.2v1.2h-1.2zM1433 457.2h1.2v1.2h-1.2zM1428.5 461.4h1.2v1.2h-1.2zM1433 461.4h1.2v1.2h-1.2zM1428.5 465.6h1.2v1.2h-1.2zM1433 465.6h1.2v1.2h-1.2zM1428.5 469.8h1.2v1.2h-1.2zM1433 469.8h1.2v1.2h-1.2zM1428.5 474h1.2v1.2h-1.2zM1433 474h1.2v1.2h-1.2zM1428.5 478.2h1.2v1.2h-1.2zM1433 478.2h1.2v1.2h-1.2z" fill="#fcdb30"/>
<path d="M575.3 380h7.4v8.4h-7.4zM634.6 421.6h2.1v1.6h-2.1zM875.3 540.7h9.23333v8.7h-9.23333zM875.3 551h9.23333v8.7h-9.23333zM875.3 561.3h9.23333v8.7h-9.23333zM886.133 540.7h9.23333v8.7h-9.23333zM886.133 551h9.23333v8.7h-9.23333zM886.133 561.3h9.23333v8.7h-9.23333zM896.967 540.7h9.23333v8.7h-9.23333zM896.967 551h9.23333v8.7h-9.23333zM896.967 561.3h9.23333v8.7h-9.23333zM775.1 554h8.85v8.875h-8.85zM775.1 564.475h8.85v8.875h-8.85zM775.1 574.95h8.85v8.875h-8.85zM775.1 585.425h8.85v8.875h-8.85zM785.55 554h8.85v8.875h-8.85zM785.55 564.475h8.85v8.875h-8.85zM785.55 574.95h8.85v8.875h-8.85zM785.55 585.425h8.85v8.875h-8.85zM889.3 465.3h5.9v5.9h-5.9zM889.3 472.8h5.9v5.9h-5.9zM896.8 465.3h5.9v5.9h-5.9zM896.8 472.8h5.9v5.9h-5.9zM525 632h7v7h-7zM552 632h7v7h-7zM525 648h7v7h-7zM552 648h7v7h-7zM888 629h4v3.6h-4zM888 646h4v3.4h-4zM893.4 629h4v3.6h-4zM893.4 646h4v3.4h-4zM898.8 629h4v3.6h-4zM898.8 646h4v3.4h-4zM584.3 637.3h11.4v8.4h-11.4zM610.3 638.3h5.4v4.4h-5.4zM605 342.5h15v5.2h-15zM662 429h13v10.6h-13zM455 470h5v14h-5zM537 387h5v4.5h-5zM597 391h4v3.5h-4zM525 392h1.5v2h-1.5zM522 388h1.5v2h-1.5zM593 375h1.5v2h-1.5zM585 397h1.5v2h-1.5zM575 397h2.5v2h-2.5zM541 380h1v1.5h-1zM597 379h1.5v2h-1.5zM592 391h2v1.5h-2zM591 381h1v1.5h-1zM558 383h1v1.5h-1zM532 379h1v1.5h-1zM650 412h3.5v4h-3.5zM638 385h2.5v2h-2.5zM669 395h3v2.5h-3zM664 416h1.5v1h-1.5zM630 432h1v1.5h-1zM662 403h2v1.5h-2zM746 565h5v4.5h-5zM747 494h5v3.5h-5zM655 583h5v4.5h-5zM654 554h3.5v5h-3.5zM671 604h3.5v4h-3.5zM716 546h2v2.5h-2zM642 526h2v2.5h-2zM719 607h2v1.5h-2zM722 591h2v1.5h-2zM724 560h1.5v2h-1.5zM670 592h1.5v2h-1.5zM720 485h2.5v3h-2.5zM661 602h2v2.5h-2zM682 609h2.5v3h-2.5zM667 569h2.5v2h-2.5zM647 570h1.5v2h-1.5zM717 560h1.5v2h-1.5zM643 561h2v2.5h-2zM669 600h2.5v2h-2.5zM682 483h2.5v4h-2.5zM676 575h4v2.5h-4zM641 517h4v2.5h-4zM667 543h1.5v2h-1.5zM693 529h1.5v2h-1.5zM720 494h3v2.5h-3zM664 469h3.5v4h-3.5zM692 483h1.5v2h-1.5zM746 510h1.5v2h-1.5zM702 544h2v2.5h-2zM641 570h4v2.5h-4zM742 567h2v2.5h-2zM704 482h2v1.5h-2zM660 544h1.5v2h-1.5zM677 531h1.5v2h-1.5zM687 606h1.5v1h-1.5zM675 571h1.5v2h-1.5zM641 513h1.5v2h-1.5zM653 537h1.5v2h-1.5zM744 518h1v1.5h-1zM701 541h1.5v1h-1.5zM677 486h2v1.5h-2zM737 548h1.5v2h-1.5zM658 467h1.5v2h-1.5zM730 488h1.5v1h-1.5zM659 483h2v1.5h-2zM716 535h1.5v2h-1.5zM741 474h1.5v2h-1.5zM669 475h1.5v2h-1.5zM715 603h2v1.5h-2zM707 539h1.5v1h-1.5zM667 557h1v1.5h-1zM747 506h1.5v1h-1.5zM494 504h3.5v5h-3.5zM506 497h4.5v5h-4.5zM613 546h3.5v4h-3.5zM628 515h3.5v5h-3.5zM622 515h4v2.5h-4zM548 534h2v1.5h-2zM635 506h3v2.5h-3zM539 502h2.5v3h-2.5zM615 610h2.5v2h-2.5zM532 531h2.5v3h-2.5zM532 508h4v2.5h-4zM525 502h2v2.5h-2zM540 511h3v2.5h-3zM619 604h2.5v3h-2.5zM491 519h2.5v3h-2.5zM560 504h2.5v2h-2.5zM504 514h2v1.5h-2zM628 596h2.5v3h-2.5zM632 567h2.5v4h-2.5zM629 508h2v1.5h-2zM524 523h2.5v3h-2.5zM622 572h2.5v2h-2.5zM491 543h2.5v3h-2.5zM629 525h1.5v2h-1.5zM578 539h4v3.5h-4zM633 610h2.5v2h-2.5zM514 493h2.5v2h-2.5zM516 519h4v3.5h-4zM549 515h1.5v2h-1.5zM613 505h2v2.5h-2zM570 544h2.5v3h-2.5zM520 501h3v2.5h-3zM564 529h1.5v2h-1.5zM584 542h2v1.5h-2zM565 512h1.5v2h-1.5zM597 540h2v1.5h-2zM610 607h1.5v2h-1.5zM566 533h1.5v2h-1.5zM616 531h1.5v2h-1.5zM632 542h1.5v1h-1.5zM518 556h1.5v2h-1.5zM509 512h1v1.5h-1zM609 533h1v1.5h-1zM636 576h1.5v2h-1.5zM603 539h1.5v2h-1.5zM608 603h1.5v2h-1.5zM637 598h2v1.5h-2zM571 518h1v1.5h-1zM636 528h2v1.5h-2zM551 527h1.5v1h-1.5zM547 500h1.5v2h-1.5zM607 549h1.5v2h-1.5zM635 547h1v1.5h-1zM552 589h4.5v5h-4.5zM553 607h3.5v4h-3.5zM565 609h3.5v4h-3.5zM587 590h2.5v2h-2.5zM554 568h3.5v4h-3.5zM580 595h2.5v2h-2.5zM578 619h2.5v3h-2.5zM568 581h2v1.5h-2zM566 590h3v2.5h-3zM557 615h2.5v2h-2.5zM618 652h1.5v2h-1.5zM592 594h2v1.5h-2zM590 653h2v1.5h-2zM559 597h1.5v2h-1.5zM576 574h1.5v1h-1.5zM579 654h1.5v2h-1.5zM623 645h2v1.5h-2zM572 603h1.5v2h-1.5zM823 496h3.5v4h-3.5zM896 452h3.5v4h-3.5zM829 512h1.5v2h-1.5zM771 511h2v1.5h-2zM821 490h1.5v2h-1.5zM872 506h3v2.5h-3zM826 476h2.5v2h-2.5zM839 452h1.5v2h-1.5zM790 518h1.5v2h-1.5zM880 507h2v2.5h-2zM803 515h2v1.5h-2zM905 444h2.5v4h-2.5zM863 471h2.5v4h-2.5zM768 520h1.5v2h-1.5zM818 464h3.5v4h-3.5zM856 501h2.5v3h-2.5zM862 482h1.5v2h-1.5zM842 494h4v2.5h-4zM818 503h2.5v4h-2.5zM916 442h4v3.5h-4zM767 474h2.5v3h-2.5zM850 490h1.5v2h-1.5zM842 459h2v2.5h-2zM763 480h1.5v2h-1.5zM894 494h2.5v3h-2.5zM841 481h2.5v3h-2.5zM780 455h2.5v3h-2.5zM850 468h3v2.5h-3zM779 516h2v1.5h-2zM830 460h1.5v2h-1.5zM795 452h2.5v2h-2.5zM829 507h2.5v2h-2.5zM911 459h2v2.5h-2zM889 512h1.5v2h-1.5zM833 456h1.5v2h-1.5zM816 492h1.5v2h-1.5zM818 460h1.5v2h-1.5zM818 487h1.5v1h-1.5zM767 494h2v1.5h-2zM788 452h1.5v1h-1.5zM838 466h2v1.5h-2zM835 498h1.5v2h-1.5zM877 507h1v1.5h-1zM807 516h1v1.5h-1zM858 489h1v1.5h-1zM869 514h1.5v2h-1.5zM817 496h1.5v1h-1.5zM849 482h1v1.5h-1zM763 468h2v1.5h-2zM849 501h1.5v1h-1.5zM881 452h1.5v1h-1.5zM901 487h1.5v2h-1.5zM775 514h1v1.5h-1zM868 477h1.5v1h-1.5zM797 518h1.5v1h-1.5zM805 589h3.5v5h-3.5zM824 594h4v3.5h-4zM810 604h3.5v4h-3.5zM805 572h2v1.5h-2zM805 539h3v2.5h-3zM855 567h2.5v3h-2.5zM840 553h2.5v4h-2.5zM825 615h2.5v3h-2.5zM831 571h2.5v3h-2.5zM809 550h2.5v2h-2.5zM837 613h2.5v3h-2.5zM858 591h2.5v2h-2.5zM852 563h1.5v2h-1.5zM841 587h3.5v4h-3.5zM785 539h2v1.5h-2zM837 541h3.5v4h-3.5zM786 614h2.5v3h-2.5zM847 575h2.5v2h-2.5zM857 555h1.5v2h-1.5zM853 530h2.5v3h-2.5zM864 598h3v2.5h-3zM803 581h2v1.5h-2zM771 613h2v1.5h-2zM772 536h4v3.5h-4zM823 535h2.5v2h-2.5zM763 569h3v2.5h-3zM827 606h2.5v2h-2.5zM764 598h2v1.5h-2zM840 580h2v1.5h-2zM765 604h1.5v1h-1.5zM837 552h1v1.5h-1zM805 554h1.5v2h-1.5zM859 559h1v1.5h-1zM778 545h1.5v1h-1.5zM895 610h1.5v1h-1.5zM887 605h1.5v2h-1.5zM778 540h1.5v2h-1.5zM826 566h1.5v2h-1.5zM892 589h1.5v1h-1.5zM848 565h2v1.5h-2zM871 599h1.5v2h-1.5zM827 573h2v1.5h-2zM824 560h1.5v2h-1.5zM833 551h1v1.5h-1zM803 596h1.5v2h-1.5zM834 590h2v1.5h-2zM849 579h1.5v1h-1.5zM838 593h1.5v2h-1.5zM849 605h1.5v2h-1.5zM791 537h1.5v2h-1.5zM873 586h1.5v1h-1.5zM764 615h1.5v1h-1.5zM911 388h2.5v3h-2.5zM894 387h2.5v3h-2.5zM903 385h1.5v2h-1.5zM919 369h2.5v4h-2.5zM889 394h2.5v4h-2.5zM908 365h2v2.5h-2zM916 382h2v1.5h-2zM898 392h2v1.5h-2zM923 377h1v1.5h-1zM898 371h1v1.5h-1zM943 416h2.5v3h-2.5zM953 442h3v2.5h-3zM963 445h3v2.5h-3zM934 476h2v1.5h-2zM944 467h1v1.5h-1zM929 491h1.5v1h-1.5zM942 492h1.5v2h-1.5zM934 534h2v2.5h-2zM945 538h2.5v4h-2.5zM944 549h2.5v2h-2.5zM934 568h2.5v4h-2.5zM947 587h2.5v2h-2.5zM946 563h2.5v2h-2.5zM938 578h2v1.5h-2zM482 413h2v1.5h-2zM489 449h1.5v2h-1.5zM485 467h1.5v1h-1.5zM476 601h1.5v2h-1.5zM476 581h1.5v2h-1.5zM482 588h1.5v2h-1.5zM632 445h3.5v4h-3.5zM678 452h2.5v3h-2.5zM652 449h4v3.5h-4zM648 452h2v2.5h-2zM642 449h2v1.5h-2zM655 443h1.5v2h-1.5zM637 357h1v1.5h-1zM628 356h1v1.5h-1zM646 376h2.5v4h-2.5zM648 382h1.5v2h-1.5zM533 593h4v3.5h-4zM534 604h2v1.5h-2zM1031.8 602.3h4.65v7.73333h-4.65zM1031.8 611.633h4.65v7.73333h-4.65zM1031.8 620.967h4.65v7.73333h-4.65zM1038.05 602.3h4.65v7.73333h-4.65zM1038.05 611.633h4.65v7.73333h-4.65zM1038.05 620.967h4.65v7.73333h-4.65zM1123.3 597.3h7.9v9.65h-7.9zM1123.3 608.55h7.9v9.65h-7.9zM1123.3 619.8h7.9v9.65h-7.9zM1123.3 631.05h7.9v9.65h-7.9zM1132.8 597.3h7.9v9.65h-7.9zM1132.8 608.55h7.9v9.65h-7.9zM1132.8 619.8h7.9v9.65h-7.9zM1132.8 631.05h7.9v9.65h-7.9zM1080.3 616.3h6.4v8.4h-6.4zM1088.3 616.3h6.4v8.4h-6.4zM1232.3 573.3h5.4v5.4h-5.4zM995 429h20v20h-20zM1018 442h8v8h-8zM1046 442h20v7h-20zM1080 442h20v8h-20zM1116 442h7v7h-7zM1137 442h21v7h-21zM1163 442h19v7h-19zM1196 442h9v12h-9zM1038 452h5v7h-5zM1159 452h5v7h-5zM1199 472h6v8h-6zM1013 564h17v8h-17zM1032 564h6v8h-6zM1052 564h17v8h-17zM1137 564h15v8h-15zM1162 564h7v8h-7zM1193 564h9v8h-9zM1003 511h4v4h-4zM1011 511h4v4h-4zM1006 526h4v4h-4zM1122 511h4v4h-4zM1130 511h4v4h-4zM1126 527h5v4h-5zM1200 512h4v10h-4zM1200 526h4v10h-4zM1466 659h8v7h-8zM1487 398h10v16h-10zM1489.4 515.4h9.6v15.9h-9.6zM981.6 589.2h17.4v9.3h-17.4zM1390.8 335.5h5v4h-5zM1393 384h3.5v5h-3.5zM1364 374h3v2.5h-3zM1380 369h2.5v3h-2.5zM1328 385h2v2.5h-2zM1368 390h1.5v2h-1.5zM1288 397h4v2.5h-4zM1374 372h3v2.5h-3zM1297 394h2v1.5h-2zM1329 376h2v1.5h-2zM1364 386h2v1.5h-2zM1321 365h1.5v2h-1.5zM1341 395h1.5v1h-1.5zM1332 365h1.5v2h-1.5zM1336 369h1.5v1h-1.5zM1352 369h1.5v2h-1.5zM1324 378h1.5v2h-1.5zM1369 375h1.5v2h-1.5zM1370 369h2v1.5h-2zM1368 383h1.5v1h-1.5zM1350 378h1.5v1h-1.5zM1380 375h2v1.5h-2zM1245 485h4.5v5h-4.5zM1254 537h4.5v5h-4.5zM1258 610h4v3.5h-4zM1249 591h2.5v2h-2.5zM1246 539h1.5v2h-1.5zM1238 492h1.5v2h-1.5zM1221 466h2.5v4h-2.5zM1259 455h2.5v2h-2.5zM1249 613h2.5v4h-2.5zM1223 490h2v2.5h-2zM1243 464h3.5v4h-3.5zM1259 485h4v3.5h-4zM1214 507h1.5v2h-1.5zM1220 451h2.5v2h-2.5zM1248 510h3.5v4h-3.5zM1250 564h2.5v2h-2.5zM1245 527h2.5v2h-2.5zM1239 511h2.5v2h-2.5zM1265 612h3v2.5h-3zM1216 443h3v2.5h-3zM1260 510h1.5v2h-1.5zM1220 591h1.5v2h-1.5zM1232 465h3.5v4h-3.5zM1262 501h1.5v2h-1.5zM1250 637h2v1.5h-2zM1213 467h2v1.5h-2zM1218 515h1.5v2h-1.5zM1214 545h1.5v2h-1.5zM1230 457h2v1.5h-2zM1262 506h1.5v2h-1.5zM1267 559h2v1.5h-2zM1227 490h1.5v1h-1.5zM1258 481h1.5v2h-1.5zM1267 550h2v1.5h-2zM1235 490h1v1.5h-1zM1236 623h1.5v2h-1.5zM1243 623h1.5v2h-1.5zM1231 517h1.5v1h-1.5zM1224 436h1.5v1h-1.5zM1211 595h1v1.5h-1zM1175 621h5v3.5h-5zM1190 618h2.5v3h-2.5zM1207 615h2v1.5h-2zM1177 642h1.5v2h-1.5zM1205 623h1.5v2h-1.5zM1206 601h2v1.5h-2zM1195 614h1.5v1h-1.5zM1206 596h2v1.5h-2zM1177 616h1.5v2h-1.5zM1308 462h2.5v3h-2.5zM1308 438h2.5v2h-2.5zM1306 433h2.5v3h-2.5zM1301 458h2v2.5h-2zM1317 439h1.5v2h-1.5zM1301 444h2v1.5h-2zM1278 616h5v3.5h-5zM1439 621h2.5v2h-2.5zM1303 633h2v1.5h-2zM1376 624h2.5v3h-2.5zM1360 619h2v2.5h-2zM1304 614h2.5v4h-2.5zM1335 625h3.5v4h-3.5zM1346 631h2v2.5h-2zM1325 620h2.5v3h-2.5zM1367 611h2v2.5h-2zM1386 622h1.5v2h-1.5zM1404 617h1.5v2h-1.5zM1446 611h2v1.5h-2zM1337 649h1.5v2h-1.5zM1387 649h1.5v2h-1.5zM1338 642h2v1.5h-2zM1274 634h2v1.5h-2zM1300 642h1.5v1h-1.5zM1329 611h1v1.5h-1zM1334 632h1.5v2h-1.5zM1335 618h1.5v2h-1.5zM1447 591h4.5v5h-4.5zM1448 526h4v3.5h-4zM1459 580h3.5v4h-3.5zM1445 540h2.5v3h-2.5zM1452 604h2.5v3h-2.5zM1445 508h1.5v2h-1.5zM1465 538h3v2.5h-3zM1462 590h4v3.5h-4zM1461 513h4v2.5h-4zM1463 557h2v2.5h-2zM1445 496h1.5v2h-1.5zM1465 570h4v2.5h-4zM1444 521h1.5v2h-1.5zM1445 579h2v1.5h-2zM1467 531h2v1.5h-2zM1452 618h1.5v2h-1.5zM1455 587h1.5v1h-1.5zM1463 586h1.5v1h-1.5zM1461 509h1.5v2h-1.5zM1457 553h1.5v1h-1.5zM1426 509h3.5v4h-3.5zM1360 507h2.5v3h-2.5zM1400 503h4v2.5h-4zM1412 504h4v2.5h-4zM1430 504h2.5v3h-2.5zM1407 503h3v2.5h-3zM1369 510h1.5v2h-1.5zM1437 511h1.5v1h-1.5zM1322 512h1.5v1h-1.5zM1418 510h2v1.5h-2zM1330 503h1.5v1h-1.5zM1058 605h2.5v2h-2.5zM1086 635h1.5v2h-1.5zM1050 637h3v2.5h-3zM1108 643h2.5v3h-2.5zM1040 591h2.5v3h-2.5zM1064 619h2v1.5h-2zM1017 628h2.5v2h-2.5zM1149 599h1.5v2h-1.5zM1150 591h2.5v3h-2.5zM1095 590h2.5v3h-2.5zM1112 597h3v2.5h-3zM1069 631h2v1.5h-2zM1051 618h2v1.5h-2zM1104 638h1.5v2h-1.5zM1067 627h1.5v1h-1.5zM1072 590h2v1.5h-2zM1033 590h2v1.5h-2zM1155 596h1.5v1h-1.5zM1017 597h1v1.5h-1zM1050 610h1.5v1h-1.5zM1103 603h1.5v1h-1.5zM1056 597h2v1.5h-2zM1461 408h2.5v4h-2.5zM1460 441h3v2.5h-3zM1460 464h2.5v4h-2.5zM1458 455h2v2.5h-2zM1457 451h1.5v2h-1.5zM1472 459h1v1.5h-1zM1457 406h2v1.5h-2zM1432 417h2v1.5h-2zM1428 421h2v1.5h-2zM1028 383h3.5v4h-3.5zM1026 400h2v1.5h-2zM1017 390h2.5v2h-2.5zM1041 384h1v1.5h-1zM1021 384h1.5v1h-1.5z" fill="#808080"/>
<path d="M504 639h15v23h-15zM1019 511h4v4h-4zM1033 511h4v4h-4zM1026 525h4v4h-4zM1138 511h4v4h-4zM1152 511h4v4h-4zM1145 528h4v4h-4zM1390.8 330h5v3.6h-5zM1398.2 330h5v3.6h-5z" fill="#007a8a"/>
<rect x="682.2" y="490.7" width="35.1" height="35.6" fill="url(#bgaY)"/><rect x="705.6" y="495.9" width="7.1" height="7.8" fill="url(#bgaG)"/><rect x="703.0" y="493.3" width="10.4" height="7.8" fill="url(#bgaG)"/><rect x="708.2" y="511.5" width="5.7" height="2.6" fill="url(#bgaG)"/><rect x="700.4" y="508.9" width="8.5" height="7.8" fill="url(#bgaG)"/><rect x="682.2" y="490.7" width="35.1" height="35.6" fill="none" stroke="#f4f4f4" stroke-width="0.7" opacity="0.8"/><rect x="683.6" y="568" width="25.8" height="34.6" fill="url(#bgaY)"/><rect x="686.2" y="568.0" width="3.2" height="2.6" fill="url(#bgaG)"/><rect x="688.8" y="586.2" width="8.2" height="2.6" fill="url(#bgaG)"/><rect x="694.0" y="588.8" width="3.4" height="2.6" fill="url(#bgaG)"/><rect x="683.6" y="568" width="25.8" height="34.6" fill="none" stroke="#f4f4f4" stroke-width="0.7" opacity="0.8"/><rect x="775.5" y="463.6" width="38.5" height="44.4" fill="url(#bgaY)"/><rect x="793.7" y="500.0" width="7.8" height="5.2" fill="url(#bgaG)"/><rect x="783.3" y="474.0" width="5.2" height="4.5" fill="url(#bgaG)"/><rect x="804.1" y="479.2" width="3.8" height="2.6" fill="url(#bgaG)"/><rect x="809.3" y="466.2" width="2.6" height="15.0" fill="url(#bgaG)"/><rect x="793.7" y="471.4" width="7.0" height="7.8" fill="url(#bgaG)"/><rect x="785.9" y="494.8" width="5.2" height="11.6" fill="url(#bgaG)"/><rect x="775.5" y="463.6" width="38.5" height="44.4" fill="none" stroke="#f4f4f4" stroke-width="0.7" opacity="0.8"/><rect x="500.5" y="529.5" width="22.5" height="22.5" fill="url(#bgaY)"/><rect x="513.5" y="529.5" width="2.6" height="6.4" fill="url(#bgaG)"/><rect x="500.5" y="529.5" width="22.5" height="22.5" fill="none" stroke="#f4f4f4" stroke-width="0.7" opacity="0.8"/><rect x="720.3" y="469.9" width="14.4" height="10.9" fill="url(#bgaY)"/><rect x="720.3" y="469.9" width="14.4" height="10.9" fill="none" stroke="#f4f4f4" stroke-width="0.7" opacity="0.8"/><rect x="723.2" y="538.2" width="11.9" height="9.9" fill="url(#bgaY)"/><rect x="723.2" y="538.2" width="11.9" height="9.9" fill="none" stroke="#f4f4f4" stroke-width="0.7" opacity="0.8"/><rect x="659.4" y="388.6" width="7.1" height="12.2" fill="url(#bgaY)"/><rect x="659.4" y="388.6" width="7.1" height="12.2" fill="none" stroke="#f4f4f4" stroke-width="0.7" opacity="0.8"/><rect x="1272" y="516" width="83.0" height="91.4" fill="url(#bgaY)"/><rect x="1295.4" y="539.4" width="13.0" height="2.6" fill="url(#bgaG)"/><rect x="1305.8" y="560.2" width="25.3" height="7.8" fill="url(#bgaG)"/><rect x="1331.8" y="557.6" width="20.6" height="2.6" fill="url(#bgaG)"/><rect x="1334.4" y="539.4" width="14.7" height="7.8" fill="url(#bgaG)"/><rect x="1347.4" y="568.0" width="2.6" height="20.6" fill="url(#bgaG)"/><rect x="1298.0" y="588.8" width="23.3" height="2.6" fill="url(#bgaG)"/><rect x="1329.2" y="565.4" width="2.6" height="10.2" fill="url(#bgaG)"/><rect x="1282.4" y="581.0" width="18.3" height="2.6" fill="url(#bgaG)"/><rect x="1324.0" y="570.6" width="20.6" height="5.2" fill="url(#bgaG)"/><rect x="1287.6" y="557.6" width="2.6" height="8.6" fill="url(#bgaG)"/><rect x="1337.0" y="557.6" width="2.6" height="24.6" fill="url(#bgaG)"/><rect x="1272.0" y="547.2" width="5.2" height="17.1" fill="url(#bgaG)"/><rect x="1331.8" y="542.0" width="2.6" height="16.5" fill="url(#bgaG)"/><rect x="1277.2" y="565.4" width="18.9" height="5.2" fill="url(#bgaG)"/><rect x="1308.4" y="575.8" width="28.6" height="2.6" fill="url(#bgaG)"/><rect x="1292.8" y="529.0" width="2.6" height="16.0" fill="url(#bgaG)"/><rect x="1313.6" y="568.0" width="25.9" height="7.8" fill="url(#bgaG)"/><rect x="1311.0" y="581.0" width="20.9" height="5.2" fill="url(#bgaG)"/><rect x="1344.8" y="573.2" width="2.6" height="23.6" fill="url(#bgaG)"/><rect x="1300.6" y="521.2" width="9.1" height="7.8" fill="url(#bgaG)"/><rect x="1334.4" y="594.0" width="14.5" height="2.6" fill="url(#bgaG)"/><rect x="1329.2" y="583.6" width="23.1" height="7.8" fill="url(#bgaG)"/><rect x="1277.2" y="552.4" width="8.5" height="5.2" fill="url(#bgaG)"/><rect x="1350.0" y="523.8" width="2.6" height="30.2" fill="url(#bgaG)"/><rect x="1292.8" y="516.0" width="2.6" height="29.6" fill="url(#bgaG)"/><rect x="1316.2" y="570.6" width="2.6" height="28.8" fill="url(#bgaG)"/><rect x="1342.2" y="578.4" width="7.8" height="26.5" fill="url(#bgaG)"/><rect x="1285.0" y="596.6" width="27.1" height="2.6" fill="url(#bgaG)"/><rect x="1324.0" y="568.0" width="20.6" height="7.8" fill="url(#bgaG)"/><rect x="1272" y="516" width="83.0" height="91.4" fill="none" stroke="#f4f4f4" stroke-width="0.7" opacity="0.8"/><rect x="1372.400" y="516" width="69.100" height="91.400" fill="none" stroke="#f4f4f4" stroke-width="0.9"/><rect x="1377" y="517" width="29" height="14" fill="url(#bgaS)"/><rect x="1377" y="538" width="29" height="24" fill="url(#bgaS)"/><rect x="1377" y="568" width="29" height="18" fill="url(#bgaS)"/><rect x="1377" y="590" width="29" height="17" fill="url(#bgaS)"/><rect x="1416" y="517" width="21" height="90" fill="url(#bgaS)"/><rect x="1412" y="548" width="25" height="22" fill="url(#bgaS)"/><rect x="1301.6" y="383" width="22.4" height="23.3" fill="url(#bgaY)"/><rect x="1304.2" y="388.2" width="5.8" height="5.2" fill="url(#bgaG)"/><rect x="1314.6" y="388.2" width="5.7" height="5.2" fill="url(#bgaG)"/><rect x="1301.6" y="383" width="22.4" height="23.3" fill="none" stroke="#f4f4f4" stroke-width="0.7" opacity="0.8"/><rect x="1231.8" y="435.8" width="15.8" height="17.9" fill="url(#bgaY)"/><rect x="1231.8" y="435.8" width="15.8" height="17.9" fill="none" stroke="#f4f4f4" stroke-width="0.7" opacity="0.8"/><rect x="1231.8" y="471.5" width="9.8" height="14.9" fill="url(#bgaY)"/><rect x="1231.8" y="471.5" width="9.8" height="14.9" fill="none" stroke="#f4f4f4" stroke-width="0.7" opacity="0.8"/><rect x="1223.2" y="538.4" width="19.3" height="25.3" fill="url(#bgaY)"/><rect x="1223.2" y="538.4" width="19.3" height="25.3" fill="none" stroke="#f4f4f4" stroke-width="0.7" opacity="0.8"/><rect x="1228.3" y="593.4" width="17.7" height="19.4" fill="url(#bgaY)"/><rect x="1228.3" y="593.4" width="17.7" height="19.4" fill="none" stroke="#f4f4f4" stroke-width="0.7" opacity="0.8"/><rect x="1307" y="443.3" width="15.0" height="16.3" fill="url(#bgaY)"/><rect x="1307" y="443.3" width="15.0" height="16.3" fill="none" stroke="#f4f4f4" stroke-width="0.7" opacity="0.8"/><rect x="1279.7" y="630.6" width="17.8" height="14.9" fill="url(#bgaY)"/><rect x="1279.7" y="630.6" width="17.8" height="14.9" fill="none" stroke="#f4f4f4" stroke-width="0.7" opacity="0.8"/><rect x="1177" y="596" width="15.0" height="18.0" fill="url(#bgaY)"/><rect x="1177" y="596" width="15.0" height="18.0" fill="none" stroke="#f4f4f4" stroke-width="0.7" opacity="0.8"/><rect x="1186" y="626" width="10.0" height="14.0" fill="url(#bgaY)"/><rect x="1186" y="626" width="10.0" height="14.0" fill="none" stroke="#f4f4f4" stroke-width="0.7" opacity="0.8"/>
<path d="M652.5 489.5h19v10h-19zM652.5 503.5h20v10h-20zM652.5 515.5h20v10h-20zM679.5 468.5h20v10h-20zM725.5 493.5h19v11h-19zM731.5 505.5h11v18h-11zM725.5 526.5h19v10h-19zM675.5 535.5h11v18h-11zM688.5 535.5h11v18h-11zM715.5 568.5h23v19h-23zM583.5 504.5h24v32h-24zM570.5 374.5h18v19h-18zM647.5 386.5h11v16h-11zM629.5 416.5h13v12h-13zM870.5 535.5h42v40h-42zM769.5 548.5h30v51h-30zM884.5 460.5h24v24h-24zM503.5 424.5h20v54h-20zM687.5 435.5h55v19h-55zM643.5 631.5h68v16h-68zM773.5 636.5h74v17h-74zM508.5 568.5h18v42h-18zM524.5 631.5h36v25h-36zM865.5 628.5h39v23h-39zM579.5 632.5h22v19h-22zM605.5 633.5h16v15h-16zM536.5 386.5h6v12h-6zM552.5 391.5h12v6h-12zM558.5 370.5h7v3h-7zM543.5 376.5h4v8h-4zM573.5 366.5h3v6h-3zM596.5 390.5h5v9h-5zM546.5 392.5h4v7h-4zM593.5 386.5h6v3h-6zM550.5 382.5h5v8h-5zM536.5 378.5h3v7h-3zM600.5 371.5h6v3h-6zM559.5 376.5h7v3h-7zM589.5 367.5h9v5h-9zM525.5 377.5h5v8h-5zM596.5 382.5h7v3h-7zM524.5 391.5h6v3h-6zM521.5 387.5h6v3h-6zM592.5 374.5h6v3h-6zM550.5 376.5h8v5h-8zM564.5 366.5h6v3h-6zM562.5 382.5h3v6h-3zM584.5 396.5h6v3h-6zM603.5 387.5h3v7h-3zM580.5 366.5h6v3h-6zM574.5 396.5h7v3h-7zM532.5 384.5h2v5h-2zM540.5 379.5h2v5h-2zM596.5 378.5h6v3h-6zM591.5 390.5h3v4h-3zM590.5 380.5h2v5h-2zM521.5 380.5h2v5h-2zM557.5 382.5h2v5h-2zM531.5 378.5h2v5h-2zM567.5 396.5h4v3h-4zM649.5 411.5h10v5h-10zM634.5 390.5h6v3h-6zM632.5 404.5h3v6h-3zM637.5 384.5h7v3h-7zM634.5 397.5h8v4h-8zM630.5 384.5h6v3h-6zM632.5 431.5h9v5h-9zM661.5 408.5h9v5h-9zM637.5 410.5h7v3h-7zM652.5 405.5h8v4h-8zM649.5 418.5h7v3h-7zM637.5 403.5h6v3h-6zM628.5 389.5h3v6h-3zM665.5 404.5h7v3h-7zM627.5 399.5h6v3h-6zM645.5 419.5h3v7h-3zM668.5 394.5h4v8h-4zM643.5 431.5h4v3h-4zM660.5 383.5h5v2h-5zM644.5 404.5h6v3h-6zM627.5 410.5h4v3h-4zM632.5 411.5h4v3h-4zM645.5 414.5h3v4h-3zM668.5 387.5h3v5h-3zM663.5 415.5h5v2h-5zM629.5 431.5h2v5h-2zM661.5 402.5h3v4h-3zM641.5 389.5h3v6h-3zM659.5 418.5h5v2h-5zM667.5 583.5h11v6h-11zM745.5 564.5h6v12h-6zM658.5 531.5h5v10h-5zM746.5 493.5h6v10h-6zM654.5 582.5h6v12h-6zM678.5 559.5h12v6h-12zM711.5 472.5h6v12h-6zM702.5 467.5h6v12h-6zM654.5 563.5h10v6h-10zM653.5 553.5h11v6h-11zM713.5 591.5h6v10h-6zM670.5 603.5h9v5h-9zM731.5 562.5h6v3h-6zM646.5 557.5h4v8h-4zM713.5 538.5h7v3h-7zM715.5 545.5h3v7h-3zM666.5 548.5h6v3h-6zM651.5 470.5h8v4h-8zM652.5 573.5h8v5h-8zM662.5 477.5h5v9h-5zM704.5 530.5h3v6h-3zM707.5 541.5h3v6h-3zM641.5 525.5h3v7h-3zM647.5 529.5h9v5h-9zM738.5 480.5h7v3h-7zM739.5 556.5h8v4h-8zM741.5 544.5h7v4h-7zM743.5 551.5h8v4h-8zM670.5 478.5h5v8h-5zM718.5 606.5h3v6h-3zM643.5 583.5h9v5h-9zM746.5 515.5h5v9h-5zM721.5 590.5h3v6h-3zM705.5 559.5h9v5h-9zM723.5 559.5h6v3h-6zM719.5 515.5h8v5h-8zM669.5 591.5h6v3h-6zM666.5 533.5h7v4h-7zM719.5 484.5h7v4h-7zM708.5 607.5h9v5h-9zM660.5 601.5h3v7h-3zM681.5 608.5h8v4h-8zM649.5 605.5h3v6h-3zM666.5 568.5h7v3h-7zM667.5 575.5h3v6h-3zM641.5 505.5h3v6h-3zM737.5 485.5h6v3h-6zM698.5 481.5h3v6h-3zM645.5 536.5h5v9h-5zM646.5 569.5h6v3h-6zM704.5 552.5h7v4h-7zM652.5 542.5h4v8h-4zM694.5 608.5h7v4h-7zM716.5 559.5h6v3h-6zM642.5 560.5h3v7h-3zM668.5 599.5h7v3h-7zM643.5 547.5h7v3h-7zM676.5 508.5h3v6h-3zM681.5 482.5h8v5h-8zM642.5 594.5h8v5h-8zM653.5 480.5h4v7h-4zM673.5 469.5h3v6h-3zM727.5 551.5h4v7h-4zM746.5 475.5h6v3h-6zM713.5 555.5h7v3h-7zM659.5 549.5h6v3h-6zM675.5 574.5h5v8h-5zM747.5 482.5h5v9h-5zM640.5 516.5h5v8h-5zM710.5 530.5h3v7h-3zM666.5 542.5h6v3h-6zM675.5 494.5h3v7h-3zM738.5 468.5h8v4h-8zM658.5 596.5h6v3h-6zM711.5 466.5h7v4h-7zM695.5 556.5h5v9h-5zM719.5 507.5h9v5h-9zM692.5 528.5h6v3h-6zM662.5 580.5h4v7h-4zM719.5 493.5h4v7h-4zM744.5 578.5h6v3h-6zM663.5 468.5h9v5h-9zM640.5 578.5h6v3h-6zM666.5 562.5h6v3h-6zM737.5 540.5h6v3h-6zM734.5 551.5h6v3h-6zM655.5 604.5h3v6h-3zM691.5 482.5h6v3h-6zM745.5 509.5h6v3h-6zM715.5 529.5h6v3h-6zM701.5 543.5h3v7h-3zM669.5 557.5h6v3h-6zM640.5 569.5h5v8h-5zM746.5 539.5h6v3h-6zM741.5 566.5h3v7h-3zM646.5 500.5h3v7h-3zM692.5 604.5h7v3h-7zM642.5 602.5h4v7h-4zM665.5 529.5h7v3h-7zM655.5 476.5h6v3h-6zM703.5 481.5h3v6h-3zM642.5 552.5h7v3h-7zM648.5 575.5h3v7h-3zM681.5 528.5h6v3h-6zM659.5 543.5h6v3h-6zM647.5 511.5h3v7h-3zM645.5 589.5h6v3h-6zM676.5 530.5h4v3h-4zM704.5 604.5h3v4h-3zM675.5 516.5h2v5h-2zM686.5 605.5h5v2h-5zM667.5 552.5h6v3h-6zM746.5 530.5h5v2h-5zM674.5 570.5h4v3h-4zM640.5 512.5h4v3h-4zM711.5 583.5h2v5h-2zM664.5 607.5h5v3h-5zM652.5 536.5h5v3h-5zM743.5 582.5h3v4h-3zM733.5 556.5h4v3h-4zM749.5 558.5h2v5h-2zM743.5 517.5h2v5h-2zM729.5 482.5h3v4h-3zM700.5 540.5h5v2h-5zM665.5 603.5h4v3h-4zM676.5 485.5h3v6h-3zM719.5 522.5h4v3h-4zM669.5 595.5h5v2h-5zM681.5 556.5h5v2h-5zM641.5 535.5h2v5h-2zM747.5 469.5h3v4h-3zM640.5 557.5h5v2h-5zM736.5 547.5h4v3h-4zM641.5 589.5h3v4h-3zM737.5 477.5h5v2h-5zM740.5 574.5h4v3h-4zM701.5 556.5h2v5h-2zM640.5 543.5h4v3h-4zM657.5 466.5h5v3h-5zM662.5 571.5h3v5h-3zM708.5 548.5h5v2h-5zM729.5 487.5h5v2h-5zM691.5 561.5h3v4h-3zM653.5 597.5h2v5h-2zM660.5 560.5h5v2h-5zM658.5 482.5h3v5h-3zM665.5 539.5h5v2h-5zM646.5 523.5h2v5h-2zM661.5 588.5h3v4h-3zM715.5 534.5h4v3h-4zM676.5 593.5h2v5h-2zM674.5 563.5h3v4h-3zM707.5 481.5h3v4h-3zM740.5 473.5h5v3h-5zM668.5 474.5h4v3h-4zM720.5 550.5h5v3h-5zM672.5 609.5h5v3h-5zM710.5 486.5h5v2h-5zM690.5 608.5h3v4h-3zM714.5 602.5h3v4h-3zM676.5 480.5h3v4h-3zM706.5 538.5h5v2h-5zM666.5 556.5h2v5h-2zM747.5 534.5h3v4h-3zM746.5 505.5h5v2h-5zM688.5 528.5h3v4h-3zM676.5 523.5h3v6h-3zM493.5 503.5h11v6h-11zM609.5 588.5h10v6h-10zM610.5 568.5h6v10h-6zM505.5 496.5h12v6h-12zM612.5 545.5h10v5h-10zM628.5 529.5h6v11h-6zM627.5 514.5h11v6h-11zM621.5 525.5h3v7h-3zM635.5 552.5h4v7h-4zM610.5 560.5h7v4h-7zM555.5 511.5h6v3h-6zM503.5 520.5h7v3h-7zM556.5 542.5h7v3h-7zM521.5 513.5h3v7h-3zM627.5 576.5h6v3h-6zM551.5 535.5h7v4h-7zM621.5 514.5h5v8h-5zM569.5 499.5h8v4h-8zM529.5 502.5h7v3h-7zM620.5 560.5h4v8h-4zM623.5 552.5h8v5h-8zM492.5 528.5h3v7h-3zM546.5 506.5h8v4h-8zM552.5 520.5h8v4h-8zM566.5 536.5h9v5h-9zM547.5 533.5h3v6h-3zM634.5 505.5h4v8h-4zM538.5 501.5h7v4h-7zM614.5 609.5h7v3h-7zM631.5 603.5h8v4h-8zM531.5 530.5h8v4h-8zM531.5 543.5h8v4h-8zM531.5 507.5h5v8h-5zM539.5 521.5h8v4h-8zM626.5 585.5h3v7h-3zM606.5 596.5h7v4h-7zM524.5 501.5h3v7h-3zM562.5 520.5h3v7h-3zM539.5 510.5h4v8h-4zM618.5 603.5h8v4h-8zM570.5 523.5h4v8h-4zM534.5 517.5h4v8h-4zM570.5 512.5h8v4h-8zM551.5 529.5h6v3h-6zM490.5 518.5h8v4h-8zM549.5 542.5h6v3h-6zM567.5 506.5h7v4h-7zM559.5 503.5h7v3h-7zM611.5 534.5h6v3h-6zM503.5 513.5h3v6h-3zM627.5 595.5h7v4h-7zM631.5 566.5h8v5h-8zM589.5 540.5h6v3h-6zM610.5 524.5h8v5h-8zM632.5 582.5h5v9h-5zM628.5 507.5h3v6h-3zM626.5 561.5h3v6h-3zM576.5 525.5h4v7h-4zM516.5 509.5h3v6h-3zM526.5 531.5h4v7h-4zM495.5 550.5h3v6h-3zM630.5 545.5h3v6h-3zM523.5 522.5h7v4h-7zM621.5 571.5h7v3h-7zM506.5 504.5h8v5h-8zM602.5 542.5h8v5h-8zM490.5 542.5h7v4h-7zM628.5 524.5h6v3h-6zM616.5 513.5h4v7h-4zM577.5 538.5h5v9h-5zM615.5 541.5h7v3h-7zM612.5 583.5h8v4h-8zM626.5 543.5h3v7h-3zM615.5 596.5h7v3h-7zM611.5 552.5h6v3h-6zM536.5 537.5h8v4h-8zM618.5 576.5h8v4h-8zM632.5 609.5h7v3h-7zM513.5 492.5h7v3h-7zM544.5 529.5h6v3h-6zM515.5 518.5h5v9h-5zM617.5 508.5h7v4h-7zM548.5 514.5h6v3h-6zM612.5 504.5h3v7h-3zM569.5 543.5h7v4h-7zM490.5 513.5h7v4h-7zM633.5 561.5h6v3h-6zM611.5 514.5h4v8h-4zM519.5 500.5h4v8h-4zM542.5 544.5h6v3h-6zM606.5 576.5h3v7h-3zM497.5 497.5h7v3h-7zM563.5 528.5h6v3h-6zM559.5 532.5h3v6h-3zM583.5 541.5h3v6h-3zM564.5 511.5h4v3h-4zM527.5 511.5h3v4h-3zM596.5 539.5h3v5h-3zM609.5 606.5h4v3h-4zM565.5 532.5h5v3h-5zM511.5 516.5h2v5h-2zM497.5 494.5h5v2h-5zM615.5 530.5h5v3h-5zM566.5 520.5h3v4h-3zM526.5 527.5h5v2h-5zM493.5 547.5h5v2h-5zM631.5 541.5h5v2h-5zM517.5 555.5h4v3h-4zM530.5 516.5h3v5h-3zM508.5 511.5h2v5h-2zM505.5 553.5h3v4h-3zM562.5 516.5h5v2h-5zM608.5 532.5h2v5h-2zM635.5 575.5h4v3h-4zM636.5 532.5h3v6h-3zM526.5 546.5h2v5h-2zM575.5 506.5h5v2h-5zM551.5 502.5h4v3h-4zM602.5 538.5h5v3h-5zM539.5 526.5h5v2h-5zM607.5 602.5h5v3h-5zM493.5 537.5h5v3h-5zM622.5 600.5h5v2h-5zM636.5 597.5h3v5h-3zM592.5 499.5h5v2h-5zM619.5 554.5h2v5h-2zM570.5 517.5h2v5h-2zM635.5 527.5h3v4h-3zM611.5 579.5h6v3h-6zM621.5 586.5h2v5h-2zM606.5 554.5h4v3h-4zM505.5 524.5h4v3h-4zM550.5 526.5h5v2h-5zM541.5 533.5h4v3h-4zM623.5 537.5h3v5h-3zM574.5 518.5h6v3h-6zM546.5 499.5h4v3h-4zM606.5 548.5h4v3h-4zM560.5 499.5h4v3h-4zM544.5 513.5h2v5h-2zM527.5 540.5h5v2h-5zM611.5 557.5h5v2h-5zM634.5 546.5h2v5h-2zM525.5 516.5h4v3h-4zM622.5 609.5h5v3h-5zM569.5 565.5h12v6h-12zM571.5 590.5h6v11h-6zM551.5 588.5h12v6h-12zM557.5 575.5h5v8h-5zM583.5 567.5h9v5h-9zM552.5 606.5h9v5h-9zM564.5 608.5h9v5h-9zM603.5 650.5h7v3h-7zM556.5 561.5h7v4h-7zM587.5 603.5h4v8h-4zM581.5 598.5h6v3h-6zM576.5 624.5h6v3h-6zM586.5 581.5h8v4h-8zM586.5 589.5h7v3h-7zM571.5 579.5h4v7h-4zM588.5 614.5h4v7h-4zM553.5 567.5h9v5h-9zM577.5 611.5h8v5h-8zM579.5 576.5h7v4h-7zM561.5 600.5h7v3h-7zM594.5 620.5h4v7h-4zM579.5 594.5h7v3h-7zM584.5 626.5h7v3h-7zM583.5 562.5h6v3h-6zM577.5 618.5h7v4h-7zM551.5 575.5h3v6h-3zM567.5 580.5h3v6h-3zM607.5 626.5h7v3h-7zM600.5 626.5h6v3h-6zM552.5 600.5h6v3h-6zM567.5 560.5h8v4h-8zM577.5 605.5h7v4h-7zM565.5 589.5h4v8h-4zM556.5 614.5h7v3h-7zM566.5 574.5h6v3h-6zM623.5 635.5h3v6h-3zM617.5 651.5h6v3h-6zM616.5 625.5h8v4h-8zM572.5 614.5h3v6h-3zM550.5 583.5h4v3h-4zM578.5 588.5h6v3h-6zM591.5 593.5h3v4h-3zM589.5 652.5h3v4h-3zM578.5 582.5h3v4h-3zM558.5 596.5h5v3h-5zM575.5 573.5h5v2h-5zM566.5 604.5h4v3h-4zM590.5 573.5h3v5h-3zM611.5 649.5h4v3h-4zM563.5 579.5h3v5h-3zM578.5 653.5h6v3h-6zM557.5 584.5h5v2h-5zM587.5 586.5h5v2h-5zM622.5 644.5h3v6h-3zM571.5 602.5h4v3h-4zM582.5 581.5h2v5h-2zM574.5 633.5h2v5h-2zM579.5 560.5h3v4h-3zM822.5 495.5h10v5h-10zM817.5 479.5h10v5h-10zM860.5 488.5h5v10h-5zM860.5 451.5h12v6h-12zM895.5 451.5h10v5h-10zM896.5 498.5h6v11h-6zM816.5 509.5h10v6h-10zM887.5 501.5h4v8h-4zM880.5 489.5h9v5h-9zM828.5 511.5h6v3h-6zM770.5 510.5h3v6h-3zM872.5 486.5h5v8h-5zM820.5 489.5h6v3h-6zM871.5 505.5h4v7h-4zM825.5 475.5h7v3h-7zM870.5 465.5h7v3h-7zM838.5 451.5h6v3h-6zM769.5 452.5h5v8h-5zM827.5 463.5h8v5h-8zM789.5 517.5h6v3h-6zM910.5 453.5h7v3h-7zM879.5 506.5h3v7h-3zM795.5 456.5h8v4h-8zM802.5 514.5h3v6h-3zM904.5 443.5h8v5h-8zM891.5 488.5h7v3h-7zM841.5 469.5h3v7h-3zM843.5 507.5h8v4h-8zM862.5 470.5h8v5h-8zM767.5 519.5h6v3h-6zM770.5 489.5h3v7h-3zM766.5 464.5h3v7h-3zM817.5 463.5h9v5h-9zM855.5 500.5h7v4h-7zM779.5 510.5h7v3h-7zM861.5 481.5h6v3h-6zM841.5 493.5h5v8h-5zM817.5 502.5h8v5h-8zM834.5 476.5h4v7h-4zM915.5 441.5h5v9h-5zM911.5 469.5h5v9h-5zM855.5 464.5h5v9h-5zM766.5 473.5h7v4h-7zM831.5 489.5h8v5h-8zM919.5 468.5h3v6h-3zM914.5 459.5h7v3h-7zM869.5 498.5h6v3h-6zM822.5 453.5h8v4h-8zM816.5 472.5h7v3h-7zM880.5 454.5h7v3h-7zM849.5 489.5h6v3h-6zM848.5 452.5h9v5h-9zM855.5 507.5h3v7h-3zM763.5 504.5h5v9h-5zM890.5 446.5h7v3h-7zM841.5 458.5h3v7h-3zM897.5 513.5h6v3h-6zM788.5 454.5h3v7h-3zM906.5 493.5h3v7h-3zM836.5 508.5h4v8h-4zM843.5 503.5h6v3h-6zM808.5 454.5h7v4h-7zM816.5 518.5h8v4h-8zM762.5 479.5h6v3h-6zM893.5 493.5h7v4h-7zM905.5 504.5h7v4h-7zM840.5 480.5h7v4h-7zM779.5 454.5h7v4h-7zM849.5 467.5h4v7h-4zM910.5 480.5h6v3h-6zM762.5 488.5h6v3h-6zM765.5 499.5h7v3h-7zM778.5 515.5h3v6h-3zM869.5 479.5h8v5h-8zM877.5 500.5h8v5h-8zM851.5 459.5h3v7h-3zM854.5 479.5h4v7h-4zM864.5 504.5h4v8h-4zM829.5 459.5h6v3h-6zM865.5 461.5h3v6h-3zM794.5 451.5h7v3h-7zM908.5 486.5h3v6h-3zM828.5 506.5h7v3h-7zM810.5 511.5h5v8h-5zM789.5 512.5h8v4h-8zM856.5 459.5h8v4h-8zM877.5 496.5h7v3h-7zM830.5 502.5h7v3h-7zM843.5 513.5h7v4h-7zM850.5 494.5h8v5h-8zM910.5 458.5h3v7h-3zM763.5 484.5h7v3h-7zM867.5 487.5h3v6h-3zM888.5 511.5h6v3h-6zM829.5 480.5h3v6h-3zM816.5 499.5h5v2h-5zM845.5 475.5h5v2h-5zM913.5 466.5h5v2h-5zM832.5 455.5h6v3h-6zM874.5 460.5h6v3h-6zM815.5 491.5h4v3h-4zM883.5 509.5h3v4h-3zM906.5 511.5h5v2h-5zM783.5 517.5h5v3h-5zM832.5 469.5h2v5h-2zM830.5 515.5h4v3h-4zM817.5 459.5h5v3h-5zM870.5 460.5h3v4h-3zM817.5 486.5h5v2h-5zM875.5 474.5h5v2h-5zM766.5 493.5h3v4h-3zM888.5 450.5h3v6h-3zM787.5 451.5h5v2h-5zM873.5 454.5h6v3h-6zM825.5 469.5h3v4h-3zM897.5 442.5h4v3h-4zM855.5 475.5h4v3h-4zM872.5 469.5h4v3h-4zM765.5 458.5h2v5h-2zM770.5 478.5h2v5h-2zM901.5 490.5h3v6h-3zM837.5 465.5h3v6h-3zM908.5 449.5h4v3h-4zM834.5 497.5h4v3h-4zM876.5 506.5h2v5h-2zM891.5 441.5h5v3h-5zM842.5 488.5h5v3h-5zM918.5 451.5h3v5h-3zM866.5 494.5h2v5h-2zM833.5 485.5h4v3h-4zM806.5 515.5h2v5h-2zM857.5 488.5h2v5h-2zM868.5 513.5h5v3h-5zM816.5 495.5h5v2h-5zM892.5 501.5h3v6h-3zM803.5 510.5h5v2h-5zM860.5 509.5h2v5h-2zM848.5 481.5h2v5h-2zM874.5 451.5h5v2h-5zM762.5 473.5h3v5h-3zM762.5 467.5h3v4h-3zM848.5 500.5h5v2h-5zM789.5 509.5h5v2h-5zM880.5 451.5h5v2h-5zM846.5 458.5h3v6h-3zM860.5 476.5h3v4h-3zM900.5 486.5h5v3h-5zM804.5 456.5h3v4h-3zM889.5 485.5h5v2h-5zM774.5 513.5h2v5h-2zM867.5 476.5h5v2h-5zM796.5 517.5h5v2h-5zM770.5 504.5h2v5h-2zM826.5 501.5h3v4h-3zM805.5 451.5h5v2h-5zM878.5 480.5h3v6h-3zM874.5 514.5h5v2h-5zM851.5 545.5h11v6h-11zM804.5 588.5h10v6h-10zM891.5 601.5h11v6h-11zM823.5 593.5h5v10h-5zM880.5 580.5h12v6h-12zM809.5 603.5h10v5h-10zM804.5 571.5h3v6h-3zM804.5 538.5h4v7h-4zM860.5 607.5h7v4h-7zM854.5 566.5h8v4h-8zM896.5 528.5h7v3h-7zM876.5 603.5h8v4h-8zM808.5 561.5h5v8h-5zM801.5 610.5h4v8h-4zM811.5 555.5h9v5h-9zM824.5 544.5h7v4h-7zM869.5 592.5h8v5h-8zM895.5 591.5h8v4h-8zM839.5 552.5h8v5h-8zM824.5 614.5h7v4h-7zM830.5 570.5h8v4h-8zM808.5 549.5h7v3h-7zM836.5 612.5h8v4h-8zM857.5 590.5h7v3h-7zM856.5 576.5h7v3h-7zM881.5 588.5h5v9h-5zM817.5 563.5h7v3h-7zM796.5 608.5h4v7h-4zM851.5 562.5h6v3h-6zM830.5 576.5h7v3h-7zM820.5 587.5h8v4h-8zM840.5 586.5h9v5h-9zM834.5 596.5h8v4h-8zM840.5 564.5h3v6h-3zM784.5 601.5h4v8h-4zM792.5 540.5h3v6h-3zM784.5 538.5h3v6h-3zM848.5 594.5h5v9h-5zM864.5 553.5h3v6h-3zM823.5 554.5h7v3h-7zM812.5 535.5h5v8h-5zM836.5 540.5h9v5h-9zM777.5 603.5h6v3h-6zM807.5 610.5h5v9h-5zM785.5 613.5h7v4h-7zM846.5 532.5h3v7h-3zM884.5 529.5h8v4h-8zM867.5 584.5h4v7h-4zM846.5 574.5h7v3h-7zM851.5 582.5h5v9h-5zM856.5 554.5h6v3h-6zM884.5 609.5h6v3h-6zM806.5 582.5h7v4h-7zM852.5 529.5h7v4h-7zM846.5 608.5h7v4h-7zM811.5 545.5h6v3h-6zM876.5 530.5h6v3h-6zM863.5 597.5h4v8h-4zM802.5 580.5h3v6h-3zM819.5 544.5h3v6h-3zM897.5 578.5h8v4h-8zM770.5 612.5h3v6h-3zM836.5 604.5h9v5h-9zM866.5 529.5h8v4h-8zM771.5 535.5h5v9h-5zM832.5 560.5h3v6h-3zM905.5 528.5h6v3h-6zM819.5 568.5h4v7h-4zM822.5 534.5h7v3h-7zM822.5 578.5h4v7h-4zM762.5 568.5h4v7h-4zM869.5 578.5h8v5h-8zM809.5 596.5h8v5h-8zM770.5 602.5h5v8h-5zM826.5 605.5h7v3h-7zM815.5 577.5h4v7h-4zM802.5 558.5h5v9h-5zM766.5 606.5h3v7h-3zM763.5 597.5h3v4h-3zM833.5 580.5h3v5h-3zM839.5 579.5h3v5h-3zM764.5 562.5h3v5h-3zM764.5 603.5h5v2h-5zM881.5 577.5h5v2h-5zM859.5 540.5h5v2h-5zM836.5 551.5h2v5h-2zM762.5 585.5h3v5h-3zM804.5 553.5h5v3h-5zM845.5 559.5h4v3h-4zM840.5 532.5h3v4h-3zM823.5 610.5h5v3h-5zM913.5 551.5h3v5h-3zM858.5 558.5h2v5h-2zM887.5 592.5h5v3h-5zM777.5 544.5h5v2h-5zM896.5 597.5h5v2h-5zM792.5 604.5h3v5h-3zM863.5 581.5h5v2h-5zM894.5 609.5h5v2h-5zM886.5 604.5h4v3h-4zM868.5 606.5h3v4h-3zM763.5 549.5h3v6h-3zM828.5 582.5h3v4h-3zM777.5 539.5h5v3h-5zM834.5 586.5h5v2h-5zM825.5 565.5h6v3h-6zM801.5 601.5h4v3h-4zM825.5 541.5h5v2h-5zM891.5 588.5h5v2h-5zM836.5 601.5h5v2h-5zM847.5 564.5h3v4h-3zM815.5 616.5h6v3h-6zM870.5 598.5h5v3h-5zM903.5 583.5h3v4h-3zM862.5 533.5h3v6h-3zM839.5 547.5h5v2h-5zM855.5 537.5h2v5h-2zM826.5 572.5h3v5h-3zM823.5 559.5h6v3h-6zM779.5 613.5h3v6h-3zM832.5 550.5h2v5h-2zM913.5 559.5h3v4h-3zM802.5 595.5h4v3h-4zM885.5 598.5h5v2h-5zM856.5 597.5h6v3h-6zM829.5 595.5h2v5h-2zM776.5 608.5h5v3h-5zM833.5 589.5h3v5h-3zM878.5 588.5h2v5h-2zM813.5 611.5h3v4h-3zM848.5 578.5h5v2h-5zM837.5 592.5h5v3h-5zM874.5 609.5h4v3h-4zM818.5 596.5h3v4h-3zM843.5 581.5h5v3h-5zM850.5 535.5h3v4h-3zM848.5 604.5h4v3h-4zM809.5 575.5h5v3h-5zM858.5 585.5h4v3h-4zM830.5 536.5h5v2h-5zM848.5 553.5h3v4h-3zM837.5 558.5h5v2h-5zM790.5 536.5h4v3h-4zM863.5 547.5h4v3h-4zM798.5 534.5h5v3h-5zM862.5 561.5h5v2h-5zM865.5 574.5h2v5h-2zM762.5 556.5h5v3h-5zM846.5 570.5h4v3h-4zM763.5 540.5h5v3h-5zM854.5 601.5h4v3h-4zM872.5 585.5h5v2h-5zM816.5 589.5h3v4h-3zM787.5 610.5h5v2h-5zM763.5 614.5h5v2h-5zM890.5 363.5h6v12h-6zM910.5 387.5h8v4h-8zM893.5 386.5h7v4h-7zM900.5 363.5h5v9h-5zM902.5 384.5h6v3h-6zM905.5 375.5h5v8h-5zM918.5 368.5h8v5h-8zM888.5 393.5h8v5h-8zM912.5 375.5h9v5h-9zM907.5 364.5h3v7h-3zM890.5 377.5h9v5h-9zM903.5 389.5h3v7h-3zM910.5 395.5h7v3h-7zM920.5 388.5h3v6h-3zM919.5 365.5h5v2h-5zM893.5 383.5h5v2h-5zM921.5 382.5h5v2h-5zM900.5 374.5h4v3h-4zM915.5 381.5h3v5h-3zM897.5 391.5h3v6h-3zM922.5 376.5h2v5h-2zM913.5 365.5h3v6h-3zM924.5 389.5h4v3h-4zM900.5 380.5h4v3h-4zM910.5 392.5h5v2h-5zM897.5 370.5h2v5h-2zM942.5 415.5h7v4h-7zM933.5 413.5h3v7h-3zM935.5 408.5h7v3h-7zM944.5 410.5h5v3h-5zM938.5 423.5h6v3h-6zM937.5 415.5h4v3h-4zM952.5 441.5h4v8h-4zM962.5 444.5h4v8h-4zM955.5 450.5h6v3h-6zM951.5 454.5h5v2h-5zM938.5 477.5h7v4h-7zM938.5 472.5h6v3h-6zM937.5 460.5h8v5h-8zM933.5 475.5h3v4h-3zM943.5 466.5h2v5h-2zM933.5 465.5h3v6h-3zM936.5 498.5h8v4h-8zM932.5 500.5h3v6h-3zM928.5 490.5h5v2h-5zM930.5 493.5h4v3h-4zM941.5 491.5h4v3h-4zM950.5 574.5h5v10h-5zM933.5 533.5h3v7h-3zM951.5 557.5h7v3h-7zM950.5 526.5h9v5h-9zM944.5 537.5h8v5h-8zM935.5 528.5h7v4h-7zM943.5 548.5h7v3h-7zM933.5 567.5h8v5h-8zM929.5 517.5h7v4h-7zM929.5 570.5h3v7h-3zM964.5 578.5h6v3h-6zM942.5 522.5h7v3h-7zM944.5 571.5h5v9h-5zM929.5 550.5h5v9h-5zM938.5 558.5h3v6h-3zM946.5 586.5h7v3h-7zM946.5 515.5h7v4h-7zM945.5 562.5h7v3h-7zM964.5 585.5h6v3h-6zM928.5 530.5h4v3h-4zM959.5 521.5h5v3h-5zM937.5 577.5h3v4h-3zM958.5 584.5h4v3h-4zM940.5 543.5h3v4h-3zM944.5 555.5h2v5h-2zM955.5 545.5h3v4h-3zM928.5 562.5h3v4h-3zM966.5 527.5h3v4h-3zM942.5 583.5h5v2h-5zM960.5 554.5h6v3h-6zM946.5 567.5h5v3h-5zM963.5 526.5h2v5h-2zM955.5 517.5h4v3h-4zM955.5 537.5h3v6h-3zM934.5 544.5h5v3h-5zM952.5 551.5h5v3h-5zM939.5 573.5h4v3h-4zM478.5 441.5h9v5h-9zM476.5 423.5h9v5h-9zM478.5 449.5h8v4h-8zM477.5 432.5h9v5h-9zM481.5 412.5h3v6h-3zM485.5 457.5h5v8h-5zM490.5 426.5h2v5h-2zM488.5 448.5h4v3h-4zM484.5 466.5h5v2h-5zM476.5 463.5h3v4h-3zM476.5 458.5h6v3h-6zM483.5 420.5h5v2h-5zM486.5 412.5h3v4h-3zM483.5 599.5h7v3h-7zM473.5 584.5h4v8h-4zM489.5 589.5h7v4h-7zM480.5 591.5h4v7h-4zM479.5 607.5h6v3h-6zM480.5 581.5h8v5h-8zM495.5 601.5h3v7h-3zM470.5 605.5h7v4h-7zM492.5 580.5h6v3h-6zM475.5 600.5h5v3h-5zM489.5 605.5h4v3h-4zM491.5 595.5h3v6h-3zM470.5 596.5h3v6h-3zM475.5 580.5h4v3h-4zM489.5 581.5h2v5h-2zM474.5 593.5h5v2h-5zM481.5 587.5h5v3h-5zM631.5 444.5h9v5h-9zM643.5 443.5h7v3h-7zM629.5 452.5h9v5h-9zM677.5 451.5h8v4h-8zM651.5 448.5h5v9h-5zM647.5 451.5h3v7h-3zM677.5 440.5h5v8h-5zM641.5 448.5h3v6h-3zM658.5 455.5h5v2h-5zM683.5 456.5h5v2h-5zM654.5 442.5h5v3h-5zM670.5 455.5h6v3h-6zM634.5 440.5h5v2h-5zM627.5 442.5h2v5h-2zM665.5 455.5h4v3h-4zM630.5 353.5h5v9h-5zM619.5 355.5h7v4h-7zM605.5 355.5h8v5h-8zM597.5 357.5h7v4h-7zM588.5 353.5h2v5h-2zM636.5 356.5h2v5h-2zM627.5 355.5h2v5h-2zM594.5 357.5h2v5h-2zM645.5 375.5h8v5h-8zM640.5 368.5h9v5h-9zM647.5 381.5h5v3h-5zM653.5 368.5h3v5h-3zM527.5 428.5h2v5h-2zM532.5 592.5h5v9h-5zM539.5 603.5h4v7h-4zM538.5 596.5h4v3h-4zM533.5 603.5h3v4h-3zM524.5 353.5h18v12h-18zM1255.5 465.5h18v13h-18zM1241.5 496.5h17v10h-17zM1225.5 425.5h14v8h-14zM1243.5 425.5h14v8h-14zM1214.5 520.5h14v14h-14zM1214.5 566.5h26v8h-26zM1214.5 580.5h12v8h-12zM1178.5 584.5h16v8h-16zM1195.5 598.5h9v14h-9zM1237.5 628.5h10v18h-10zM1255.5 628.5h10v18h-10zM1026.5 597.5h22v37h-22zM1118.5 592.5h28v54h-28zM1075.5 611.5h25v19h-25zM1227.5 568.5h16v16h-16zM1375.5 329.5h30v12h-30zM1392.5 383.5h10v6h-10zM1381.5 380.5h10v6h-10zM1342.5 368.5h7v4h-7zM1297.5 376.5h6v3h-6zM1390.5 364.5h3v7h-3zM1332.5 395.5h7v4h-7zM1363.5 373.5h4v8h-4zM1341.5 387.5h6v3h-6zM1375.5 382.5h3v6h-3zM1367.5 364.5h6v3h-6zM1379.5 368.5h7v4h-7zM1352.5 388.5h8v4h-8zM1292.5 381.5h5v8h-5zM1327.5 384.5h3v7h-3zM1326.5 367.5h3v6h-3zM1336.5 383.5h3v6h-3zM1333.5 371.5h4v8h-4zM1367.5 389.5h6v3h-6zM1287.5 396.5h5v8h-5zM1314.5 377.5h7v3h-7zM1347.5 380.5h7v4h-7zM1352.5 372.5h7v4h-7zM1321.5 369.5h3v7h-3zM1373.5 371.5h4v8h-4zM1339.5 374.5h7v3h-7zM1383.5 374.5h7v3h-7zM1305.5 375.5h6v3h-6zM1296.5 393.5h3v6h-3zM1356.5 366.5h8v5h-8zM1328.5 375.5h3v6h-3zM1288.5 391.5h6v3h-6zM1328.5 394.5h3v6h-3zM1382.5 390.5h7v3h-7zM1357.5 381.5h3v6h-3zM1397.5 374.5h4v7h-4zM1339.5 364.5h7v3h-7zM1314.5 371.5h6v3h-6zM1363.5 385.5h3v6h-3zM1320.5 364.5h5v3h-5zM1331.5 388.5h4v3h-4zM1376.5 364.5h2v5h-2zM1340.5 394.5h5v2h-5zM1295.5 400.5h3v4h-3zM1288.5 384.5h3v6h-3zM1331.5 364.5h4v3h-4zM1348.5 390.5h3v4h-3zM1335.5 368.5h5v2h-5zM1351.5 368.5h4v3h-4zM1367.5 385.5h5v2h-5zM1360.5 374.5h2v5h-2zM1391.5 372.5h3v5h-3zM1340.5 380.5h5v3h-5zM1323.5 377.5h4v3h-4zM1368.5 374.5h4v3h-4zM1369.5 368.5h3v5h-3zM1367.5 382.5h5v2h-5zM1349.5 377.5h5v2h-5zM1379.5 374.5h3v5h-3zM1400.5 391.5h5v2h-5zM1253.5 522.5h11v6h-11zM1244.5 484.5h12v6h-12zM1214.5 601.5h12v6h-12zM1236.5 514.5h6v11h-6zM1213.5 475.5h12v6h-12zM1247.5 515.5h10v6h-10zM1253.5 536.5h12v6h-12zM1214.5 489.5h6v11h-6zM1257.5 609.5h5v10h-5zM1256.5 550.5h9v5h-9zM1257.5 582.5h9v5h-9zM1248.5 590.5h7v3h-7zM1260.5 596.5h6v3h-6zM1261.5 564.5h4v7h-4zM1210.5 590.5h7v3h-7zM1228.5 500.5h4v7h-4zM1264.5 602.5h4v7h-4zM1250.5 436.5h8v4h-8zM1244.5 557.5h3v6h-3zM1220.5 438.5h5v9h-5zM1227.5 615.5h8v4h-8zM1245.5 538.5h6v3h-6zM1233.5 458.5h7v3h-7zM1213.5 595.5h8v5h-8zM1255.5 600.5h4v8h-4zM1219.5 609.5h7v4h-7zM1237.5 491.5h6v3h-6zM1245.5 583.5h8v5h-8zM1220.5 465.5h8v5h-8zM1252.5 443.5h5v8h-5zM1258.5 454.5h7v3h-7zM1220.5 622.5h7v3h-7zM1213.5 548.5h5v8h-5zM1216.5 463.5h3v6h-3zM1248.5 612.5h8v5h-8zM1222.5 489.5h3v7h-3zM1253.5 453.5h4v7h-4zM1226.5 509.5h8v5h-8zM1249.5 557.5h8v4h-8zM1237.5 616.5h9v5h-9zM1247.5 569.5h7v4h-7zM1261.5 590.5h8v4h-8zM1242.5 463.5h9v5h-9zM1258.5 484.5h5v9h-5zM1213.5 506.5h6v3h-6zM1219.5 450.5h7v3h-7zM1225.5 457.5h3v6h-3zM1249.5 547.5h4v7h-4zM1261.5 428.5h3v7h-3zM1249.5 598.5h3v7h-3zM1260.5 573.5h6v3h-6zM1245.5 530.5h3v6h-3zM1260.5 516.5h8v5h-8zM1212.5 611.5h6v3h-6zM1247.5 509.5h9v5h-9zM1228.5 495.5h6v3h-6zM1245.5 475.5h6v3h-6zM1215.5 457.5h8v5h-8zM1259.5 544.5h7v4h-7zM1260.5 444.5h3v6h-3zM1261.5 530.5h6v3h-6zM1237.5 529.5h4v7h-4zM1212.5 560.5h7v3h-7zM1261.5 557.5h3v6h-3zM1257.5 566.5h3v6h-3zM1249.5 563.5h7v3h-7zM1244.5 526.5h7v3h-7zM1246.5 577.5h7v3h-7zM1210.5 617.5h3v6h-3zM1232.5 521.5h3v7h-3zM1212.5 537.5h8v4h-8zM1218.5 617.5h7v3h-7zM1238.5 510.5h7v3h-7zM1218.5 483.5h7v3h-7zM1264.5 611.5h4v8h-4zM1215.5 442.5h4v7h-4zM1259.5 509.5h6v3h-6zM1228.5 586.5h6v3h-6zM1219.5 590.5h6v3h-6zM1231.5 464.5h9v5h-9zM1261.5 500.5h6v3h-6zM1259.5 460.5h7v3h-7zM1236.5 586.5h8v4h-8zM1249.5 620.5h7v4h-7zM1245.5 456.5h7v3h-7zM1249.5 636.5h3v6h-3zM1212.5 466.5h3v6h-3zM1263.5 622.5h7v3h-7zM1231.5 625.5h3v6h-3zM1251.5 531.5h8v4h-8zM1217.5 514.5h6v3h-6zM1213.5 544.5h6v3h-6zM1256.5 574.5h3v6h-3zM1229.5 456.5h3v5h-3zM1261.5 505.5h4v3h-4zM1210.5 603.5h3v5h-3zM1224.5 499.5h3v4h-3zM1266.5 558.5h3v4h-3zM1213.5 510.5h3v6h-3zM1261.5 440.5h5v2h-5zM1214.5 621.5h5v2h-5zM1226.5 489.5h5v2h-5zM1248.5 607.5h3v4h-3zM1244.5 544.5h3v6h-3zM1259.5 436.5h5v3h-5zM1217.5 431.5h3v5h-3zM1244.5 480.5h5v3h-5zM1257.5 480.5h5v3h-5zM1261.5 496.5h6v3h-6zM1216.5 471.5h6v3h-6zM1266.5 549.5h3v6h-3zM1229.5 531.5h5v3h-5zM1265.5 431.5h2v5h-2zM1252.5 544.5h5v2h-5zM1213.5 483.5h3v4h-3zM1265.5 485.5h2v5h-2zM1234.5 489.5h2v5h-2zM1235.5 622.5h4v3h-4zM1245.5 491.5h5v2h-5zM1220.5 503.5h3v6h-3zM1265.5 526.5h4v3h-4zM1267.5 632.5h4v3h-4zM1267.5 638.5h4v3h-4zM1264.5 446.5h3v6h-3zM1220.5 510.5h5v3h-5zM1214.5 451.5h3v5h-3zM1235.5 504.5h4v3h-4zM1215.5 575.5h5v2h-5zM1268.5 626.5h3v5h-3zM1233.5 500.5h5v2h-5zM1248.5 522.5h4v3h-4zM1242.5 622.5h5v3h-5zM1230.5 516.5h5v2h-5zM1267.5 595.5h2v5h-2zM1247.5 594.5h5v3h-5zM1253.5 596.5h5v2h-5zM1243.5 470.5h5v2h-5zM1248.5 630.5h3v5h-3zM1212.5 436.5h2v5h-2zM1248.5 626.5h4v3h-4zM1226.5 444.5h2v5h-2zM1219.5 454.5h5v2h-5zM1262.5 578.5h5v2h-5zM1222.5 595.5h2v5h-2zM1223.5 435.5h5v2h-5zM1251.5 481.5h5v2h-5zM1210.5 594.5h2v5h-2zM1249.5 449.5h2v5h-2zM1214.5 557.5h5v2h-5zM1246.5 460.5h5v2h-5zM1269.5 615.5h2v5h-2zM1174.5 620.5h6v10h-6zM1201.5 589.5h6v3h-6zM1206.5 581.5h3v6h-3zM1189.5 617.5h7v4h-7zM1201.5 614.5h3v6h-3zM1176.5 634.5h7v4h-7zM1198.5 579.5h5v8h-5zM1198.5 622.5h3v6h-3zM1171.5 602.5h3v6h-3zM1184.5 616.5h3v6h-3zM1206.5 614.5h3v6h-3zM1176.5 641.5h6v3h-6zM1171.5 586.5h3v7h-3zM1204.5 622.5h4v3h-4zM1205.5 600.5h3v4h-3zM1207.5 608.5h2v5h-2zM1172.5 615.5h3v4h-3zM1194.5 613.5h5v2h-5zM1197.5 590.5h3v5h-3zM1171.5 636.5h4v3h-4zM1205.5 595.5h3v4h-3zM1176.5 615.5h5v3h-5zM1183.5 642.5h5v2h-5zM1177.5 631.5h5v2h-5zM1171.5 631.5h4v3h-4zM1307.5 461.5h8v4h-8zM1307.5 437.5h7v3h-7zM1305.5 432.5h7v4h-7zM1300.5 457.5h3v7h-3zM1314.5 430.5h8v5h-8zM1299.5 434.5h4v3h-4zM1316.5 438.5h5v3h-5zM1306.5 429.5h5v2h-5zM1323.5 455.5h3v4h-3zM1299.5 450.5h2v5h-2zM1300.5 443.5h3v6h-3zM1323.5 434.5h3v4h-3zM1377.5 629.5h10v6h-10zM1277.5 615.5h6v10h-6zM1380.5 613.5h12v6h-12zM1365.5 618.5h8v4h-8zM1310.5 642.5h4v7h-4zM1438.5 620.5h7v3h-7zM1291.5 609.5h8v4h-8zM1355.5 628.5h3v6h-3zM1335.5 612.5h8v4h-8zM1302.5 632.5h3v6h-3zM1392.5 624.5h5v8h-5zM1319.5 626.5h9v5h-9zM1368.5 637.5h9v5h-9zM1347.5 613.5h7v4h-7zM1290.5 621.5h8v4h-8zM1316.5 636.5h5v8h-5zM1419.5 621.5h6v3h-6zM1347.5 622.5h6v3h-6zM1375.5 623.5h7v4h-7zM1359.5 618.5h3v7h-3zM1303.5 613.5h8v5h-8zM1327.5 643.5h4v7h-4zM1332.5 636.5h8v4h-8zM1334.5 624.5h9v5h-9zM1301.5 624.5h8v5h-8zM1410.5 614.5h8v5h-8zM1349.5 642.5h6v3h-6zM1362.5 634.5h3v6h-3zM1359.5 644.5h8v5h-8zM1394.5 611.5h3v6h-3zM1399.5 620.5h4v7h-4zM1345.5 630.5h3v7h-3zM1400.5 611.5h7v3h-7zM1324.5 619.5h8v4h-8zM1369.5 627.5h5v9h-5zM1383.5 642.5h8v4h-8zM1366.5 610.5h3v7h-3zM1326.5 634.5h3v6h-3zM1313.5 621.5h6v3h-6zM1313.5 627.5h4v7h-4zM1420.5 613.5h7v3h-7zM1395.5 638.5h5v9h-5zM1284.5 620.5h3v5h-3zM1373.5 648.5h6v3h-6zM1385.5 621.5h6v3h-6zM1285.5 615.5h6v3h-6zM1403.5 616.5h6v3h-6zM1346.5 609.5h6v3h-6zM1285.5 609.5h4v3h-4zM1445.5 610.5h3v4h-3zM1453.5 613.5h6v3h-6zM1353.5 636.5h6v3h-6zM1378.5 636.5h2v5h-2zM1323.5 644.5h2v5h-2zM1321.5 615.5h5v2h-5zM1409.5 610.5h6v3h-6zM1336.5 648.5h6v3h-6zM1361.5 630.5h6v3h-6zM1300.5 645.5h3v4h-3zM1388.5 634.5h6v3h-6zM1310.5 636.5h5v2h-5zM1386.5 648.5h6v3h-6zM1429.5 609.5h3v4h-3zM1404.5 622.5h5v2h-5zM1400.5 629.5h5v3h-5zM1337.5 641.5h3v6h-3zM1436.5 611.5h5v3h-5zM1274.5 609.5h3v5h-3zM1273.5 633.5h3v4h-3zM1299.5 634.5h2v5h-2zM1299.5 641.5h5v2h-5zM1315.5 611.5h3v6h-3zM1346.5 641.5h2v5h-2zM1410.5 620.5h5v3h-5zM1328.5 610.5h2v5h-2zM1315.5 645.5h2v5h-2zM1350.5 632.5h2v5h-2zM1333.5 631.5h5v3h-5zM1430.5 614.5h3v6h-3zM1306.5 621.5h5v2h-5zM1374.5 619.5h5v3h-5zM1340.5 619.5h6v3h-6zM1447.5 616.5h3v4h-3zM1334.5 617.5h4v3h-4zM1446.5 590.5h12v6h-12zM1447.5 525.5h5v10h-5zM1458.5 579.5h9v5h-9zM1444.5 539.5h8v4h-8zM1458.5 522.5h9v5h-9zM1449.5 556.5h8v5h-8zM1444.5 557.5h3v6h-3zM1446.5 585.5h7v4h-7zM1451.5 603.5h8v4h-8zM1443.5 499.5h7v4h-7zM1445.5 569.5h8v4h-8zM1446.5 550.5h8v4h-8zM1444.5 507.5h6v3h-6zM1464.5 537.5h4v7h-4zM1456.5 546.5h8v5h-8zM1448.5 576.5h8v5h-8zM1461.5 589.5h5v9h-5zM1460.5 512.5h5v8h-5zM1457.5 567.5h3v6h-3zM1462.5 556.5h3v7h-3zM1450.5 517.5h3v7h-3zM1457.5 530.5h8v4h-8zM1455.5 504.5h3v7h-3zM1448.5 545.5h7v4h-7zM1443.5 603.5h6v3h-6zM1461.5 603.5h7v4h-7zM1456.5 537.5h7v4h-7zM1444.5 495.5h6v3h-6zM1452.5 500.5h6v3h-6zM1450.5 598.5h7v3h-7zM1464.5 569.5h5v8h-5zM1443.5 520.5h6v3h-6zM1449.5 513.5h6v3h-6zM1451.5 508.5h3v4h-3zM1451.5 496.5h4v3h-4zM1444.5 578.5h3v4h-3zM1443.5 597.5h2v5h-2zM1458.5 555.5h3v6h-3zM1456.5 563.5h5v2h-5zM1452.5 608.5h5v3h-5zM1443.5 512.5h3v5h-3zM1453.5 526.5h3v4h-3zM1461.5 599.5h5v2h-5zM1466.5 545.5h3v5h-3zM1448.5 564.5h5v3h-5zM1466.5 530.5h3v6h-3zM1443.5 564.5h4v3h-4zM1451.5 617.5h4v3h-4zM1454.5 520.5h3v5h-3zM1453.5 531.5h3v4h-3zM1454.5 586.5h5v2h-5zM1462.5 585.5h5v2h-5zM1460.5 508.5h4v3h-4zM1443.5 530.5h2v5h-2zM1456.5 552.5h5v2h-5zM1463.5 552.5h5v3h-5zM1467.5 597.5h2v5h-2zM1445.5 536.5h5v2h-5zM1442.5 504.5h5v2h-5zM1425.5 508.5h10v5h-10zM1359.5 506.5h8v4h-8zM1418.5 501.5h7v4h-7zM1325.5 502.5h3v6h-3zM1399.5 502.5h5v8h-5zM1348.5 505.5h4v7h-4zM1374.5 507.5h9v5h-9zM1434.5 498.5h7v3h-7zM1393.5 501.5h3v7h-3zM1336.5 507.5h9v5h-9zM1375.5 501.5h8v5h-8zM1411.5 503.5h5v8h-5zM1429.5 503.5h7v4h-7zM1320.5 502.5h3v6h-3zM1406.5 502.5h4v7h-4zM1335.5 502.5h7v3h-7zM1393.5 509.5h4v3h-4zM1368.5 502.5h4v3h-4zM1360.5 502.5h5v3h-5zM1388.5 508.5h3v4h-3zM1368.5 509.5h4v3h-4zM1436.5 510.5h5v2h-5zM1344.5 501.5h3v4h-3zM1360.5 512.5h6v3h-6zM1331.5 506.5h2v5h-2zM1421.5 506.5h2v5h-2zM1389.5 503.5h3v4h-3zM1353.5 507.5h5v3h-5zM1352.5 501.5h6v3h-6zM1406.5 510.5h4v3h-4zM1321.5 511.5h5v2h-5zM1417.5 509.5h3v4h-3zM1329.5 502.5h5v2h-5zM1097.5 595.5h11v6h-11zM1102.5 605.5h10v6h-10zM1060.5 591.5h5v10h-5zM1080.5 639.5h9v5h-9zM1055.5 633.5h3v7h-3zM1102.5 631.5h7v3h-7zM1107.5 614.5h4v8h-4zM1064.5 634.5h3v7h-3zM1016.5 607.5h3v7h-3zM1079.5 595.5h4v8h-4zM1052.5 612.5h6v3h-6zM1050.5 589.5h4v8h-4zM1103.5 588.5h9v5h-9zM1151.5 603.5h3v7h-3zM1094.5 642.5h8v4h-8zM1057.5 604.5h7v3h-7zM1085.5 634.5h6v3h-6zM1025.5 638.5h9v5h-9zM1067.5 610.5h4v7h-4zM1049.5 636.5h4v7h-4zM1151.5 613.5h5v8h-5zM1104.5 624.5h8v4h-8zM1107.5 642.5h8v4h-8zM1054.5 620.5h7v4h-7zM1016.5 632.5h8v4h-8zM1071.5 637.5h5v9h-5zM1021.5 587.5h7v4h-7zM1067.5 598.5h9v5h-9zM1039.5 590.5h8v4h-8zM1063.5 618.5h3v6h-3zM1040.5 639.5h7v3h-7zM1087.5 599.5h9v5h-9zM1016.5 627.5h7v3h-7zM1016.5 619.5h8v5h-8zM1085.5 590.5h5v8h-5zM1148.5 598.5h6v3h-6zM1050.5 600.5h4v8h-4zM1056.5 626.5h8v5h-8zM1094.5 637.5h7v3h-7zM1071.5 594.5h7v3h-7zM1148.5 623.5h6v3h-6zM1068.5 605.5h6v3h-6zM1075.5 633.5h6v3h-6zM1149.5 590.5h8v4h-8zM1061.5 610.5h3v7h-3zM1094.5 589.5h8v4h-8zM1157.5 603.5h3v7h-3zM1019.5 597.5h5v8h-5zM1082.5 646.5h7v4h-7zM1111.5 596.5h4v8h-4zM1067.5 619.5h3v5h-3zM1111.5 631.5h3v4h-3zM1020.5 609.5h3v5h-3zM1118.5 647.5h5v2h-5zM1068.5 630.5h3v5h-3zM1057.5 642.5h5v2h-5zM1148.5 617.5h2v5h-2zM1050.5 617.5h3v5h-3zM1077.5 641.5h2v5h-2zM1041.5 635.5h5v2h-5zM1103.5 637.5h4v3h-4zM1093.5 632.5h5v2h-5zM1075.5 647.5h5v3h-5zM1018.5 592.5h4v3h-4zM1080.5 605.5h4v3h-4zM1066.5 626.5h5v2h-5zM1071.5 589.5h3v4h-3zM1032.5 589.5h3v5h-3zM1102.5 612.5h3v5h-3zM1067.5 590.5h3v6h-3zM1124.5 648.5h5v2h-5zM1147.5 628.5h5v2h-5zM1157.5 611.5h3v4h-3zM1049.5 627.5h5v2h-5zM1154.5 595.5h5v2h-5zM1099.5 603.5h2v5h-2zM1016.5 596.5h2v5h-2zM1111.5 636.5h4v3h-4zM1049.5 609.5h5v2h-5zM1132.5 647.5h5v2h-5zM1102.5 602.5h5v2h-5zM1055.5 596.5h3v5h-3zM1108.5 647.5h6v3h-6zM1147.5 611.5h3v4h-3zM1036.5 635.5h2v5h-2zM1147.5 603.5h2v5h-2zM1459.5 413.5h11v6h-11zM1462.5 456.5h8v4h-8zM1462.5 430.5h5v8h-5zM1460.5 407.5h8v5h-8zM1459.5 440.5h4v7h-4zM1466.5 444.5h5v9h-5zM1459.5 463.5h8v5h-8zM1456.5 422.5h8v4h-8zM1458.5 396.5h4v8h-4zM1464.5 398.5h3v7h-3zM1457.5 454.5h3v7h-3zM1469.5 399.5h3v6h-3zM1464.5 392.5h7v4h-7zM1466.5 421.5h5v8h-5zM1457.5 432.5h3v6h-3zM1469.5 431.5h3v6h-3zM1456.5 450.5h6v3h-6zM1471.5 458.5h2v5h-2zM1457.5 392.5h5v2h-5zM1456.5 405.5h3v5h-3zM1468.5 440.5h4v3h-4zM1468.5 467.5h5v2h-5zM1469.5 407.5h2v5h-2zM1457.5 428.5h4v3h-4zM1431.5 416.5h3v6h-3zM1430.5 428.5h7v3h-7zM1430.5 433.5h6v3h-6zM1435.5 414.5h3v6h-3zM1427.5 420.5h3v5h-3zM1027.5 382.5h9v5h-9zM1025.5 399.5h3v6h-3zM1024.5 395.5h7v3h-7zM1016.5 389.5h7v3h-7zM1033.5 389.5h4v7h-4zM1038.5 397.5h4v3h-4zM1034.5 403.5h5v3h-5zM1018.5 396.5h3v6h-3zM1040.5 383.5h2v5h-2zM1020.5 383.5h5v2h-5zM1151.5 579.5h9v5h-9zM1128.5 580.5h6v3h-6zM1157.5 575.5h4v3h-4zM1146.5 576.5h5v2h-5zM1143.5 579.5h3v4h-3z" fill="none" stroke="#e9ece9" stroke-width="0.9"/>
<circle cx="478" cy="621" r="4" fill="#fcdb30"/><circle cx="493" cy="630" r="4" fill="#fcdb30"/><circle cx="506.5" cy="622" r="4" fill="#fcdb30"/><circle cx="493" cy="643" r="4" fill="#fcdb30"/><circle cx="477" cy="657" r="4" fill="#fcdb30"/><circle cx="493.5" cy="657" r="4" fill="#fcdb30"/><circle cx="725.3" cy="629.8" r="4" fill="#fcdb30"/><circle cx="746.4" cy="630.5" r="4" fill="#fcdb30"/><circle cx="720.3" cy="645.7" r="4" fill="#fcdb30"/><circle cx="761.4" cy="653.5" r="4" fill="#fcdb30"/><circle cx="921.5" cy="651.7" r="4" fill="#fcdb30"/><circle cx="854.4" cy="631" r="3.6" fill="#808080"/><circle cx="960.5" cy="596" r="3.6" fill="#808080"/><circle cx="504" cy="383" r="3" fill="#fcdb30"/><circle cx="500.5" cy="376" r="2.6" fill="#808080"/><path d="M480 380.500L485 387L480 393.500L475 387Z" fill="#007a8a"/><circle cx="528.500" cy="358.500" r="2.600" fill="#fcdb30"/><circle cx="1195.500" cy="471.500" r="6.200" fill="#808080"/><circle cx="1000.5" cy="386.5" r="5.800" fill="#007a8a"/><path d="M1000.5 383.9L1003.1 386.5L1000.5 389.1L997.9 386.5Z" fill="#fff"/><circle cx="1199.5" cy="418.5" r="5.800" fill="#007a8a"/><path d="M1199.5 415.9L1202.1 418.5L1199.5 421.1L1196.9 418.5Z" fill="#fff"/><circle cx="1299.5" cy="356.5" r="5.800" fill="#007a8a"/><path d="M1299.5 353.9L1302.1 356.5L1299.5 359.1L1296.9 356.5Z" fill="#fff"/><circle cx="1459.5" cy="367.5" r="5.800" fill="#007a8a"/><path d="M1459.5 364.9L1462.1 367.5L1459.5 370.1L1456.9 367.5Z" fill="#fff"/><circle cx="1324.5" cy="482" r="5.800" fill="#007a8a"/><path d="M1324.5 479.4L1327.1 482L1324.5 484.6L1321.9 482Z" fill="#fff"/><circle cx="1487.5" cy="491.5" r="5.800" fill="#007a8a"/><path d="M1487.5 488.9L1490.1 491.5L1487.5 494.1L1484.9 491.5Z" fill="#fff"/><circle cx="990.5" cy="613.5" r="5.800" fill="#007a8a"/><path d="M990.5 610.9L993.1 613.5L990.5 616.1L987.9 613.5Z" fill="#fff"/><circle cx="990.5" cy="636.5" r="5.800" fill="#007a8a"/><path d="M990.5 633.9L993.1 636.5L990.5 639.1L987.9 636.5Z" fill="#fff"/><circle cx="1213" cy="643" r="5.800" fill="#007a8a"/><path d="M1213 640.4L1215.6 643L1213 645.6L1210.4 643Z" fill="#fff"/><circle cx="1474" cy="638.5" r="5.800" fill="#007a8a"/><path d="M1474 635.9L1476.6 638.5L1474 641.1L1471.4 638.5Z" fill="#fff"/><circle cx="1483.500" cy="376.500" r="6" fill="#fcdb30"/><path d="M1483.500 373.900L1486.100 376.500L1483.500 379.100L1480.900 376.500Z" fill="#fff"/><path d="M990.500 405.300L996 410.800L990.500 416.300L985 410.800Z" fill="#007a8a" transform="translate(0 0)"/><circle cx="1051.500" cy="393.500" r="2.800" fill="#007a8a"/><circle cx="1494.500" cy="457.500" r="2.800" fill="#007a8a"/><circle cx="960.500" cy="467" r="2.600" fill="#007a8a"/>
<g transform="rotate(-20 926 602)"><rect x="915.500" y="591.500" width="21" height="21" fill="none" stroke="#f8f8f8" stroke-width="1"/><path d="M918 597l8-6 3 3-8 6zM927 609l8-6 3 3-8 6z" fill="#808080" transform="translate(-1 1)"/><path d="M931 593l3 3-3 3-3-3z" fill="#fcdb30"/></g><g transform="rotate(-35 940.500 448.500)"><rect x="933.500" y="443.500" width="14" height="10" fill="none" stroke="#f8f8f8" stroke-width="1"/><rect x="935" y="445.500" width="11" height="2" fill="#808080"/><rect x="935" y="449.500" width="11" height="2" fill="#808080"/></g>
<path d="M515.9 379L517.5 375.5L521 373.8L545.8 373.8L558 363.2L604.5 363.2L609.3 368L609.3 402.6L535.8 402.6L528 397.5L520 397.5L515.9 393.5ZM624 386L628 381L633.5 379L640 380.4L671 380.4L675.3 384L675.3 418.5L668 423.5L655.4 425.2L651.5 431L649.9 440.7L628.8 440.7L624 437.4ZM655 463L751 463L755.4 467L755.4 586L751 589.5L732 592L730 596L725.5 615.8L610 615.8L603.4 609.6L603.4 556.4L597.8 551L535.8 551L525.8 562L492.6 562L487 554.2L487 510L490 498L494.5 491.5L500.4 489L522.5 489L530.3 496.6L613.3 496.6L620 502L640 502L647.7 491L647.7 468L650 464.5ZM546.9 563L551.3 557.6L593.4 557.6L597.8 563L597.8 613L604.5 620.7L625.5 620.7L630 626.2L630 656L627 659.4L575.7 659.4L571.7 655.4L571.7 628.4L565.7 620.7L553.5 620.7L546.9 614ZM759.8 452.5L763.5 448.4L880.5 448.4L889 438L922.6 438L925.3 441L925.3 480.5L916 492L916 515.5L911.5 520L854 520L834 525.4L764.3 525.4L759.8 521ZM762 531L830.7 531L851.7 525.4L914 525.4L920.4 534.3L920.4 563L913.8 587.5L905 612L900 616.2L856 616.2L848.4 622.9L765.4 622.9L759.8 618.5L759.8 535.4ZM1281.6 384L1293 373L1306.4 369.8L1317.5 361.4L1398.3 361.4L1411.6 384.2L1411.6 393L1408.3 396.8L1357.4 396.8L1349.6 403L1337.4 404L1328.6 410.8L1286.5 410.8L1281.6 406.3ZM1220.8 422.5L1273.2 422.5L1276.5 425.1L1324.1 425.1L1329.7 430.7L1329.7 465L1315.3 472.8L1310.9 477.2L1310.9 489.4L1318.6 498.2L1429.3 498.2L1436 490.5L1459.2 490.5L1463.6 498L1472.5 515.5L1472.5 611.8L1453.7 627.3L1415 627.3L1409.4 634L1402.8 655L1325.3 655L1325.3 653.9L1284.3 653.9L1273.2 648.3L1240 648.3L1234.1 645L1227.5 631.7L1215.3 627.3L1205.3 630L1198.7 640.6L1194.3 647.7L1173.2 647.7L1168.8 642.8L1168.8 583L1174.3 577.5L1207.6 576L1209.8 573L1209.8 433ZM1013.8 588.6L1018.2 584.8L1072.5 584.8L1079.1 587L1090.2 587L1101.2 582L1107.9 580.8L1119 582.6L1127.8 587L1160 587L1163.3 590.8L1163.3 628.4L1152.2 637.3L1152.2 648.4L1147.8 653.9L1068 653.9L1060.3 647.7L1018.2 647.7L1013.8 643Z" fill="none" stroke="#fafafa" stroke-width="1.6" stroke-linejoin="round"/>
<path d="M989.4 441.8H1207V572.4H989.4Z" fill="none" stroke="#dfe8e2" stroke-width="0.8"/>
<path d="M493.300 465V409Q493.300 404.800 497.500 404.800H513.700M517.600 358V369.800H545.800V358" fill="none" stroke="#f4f4f4" stroke-width="1.100"/>
<path d="M539 415.9L610 415.9L612.7 418.6L612.7 485.6L610 488.3L539 488.3L536.5 486L536.5 481.5L531 480L531 424L536.5 422.5L536.5 418ZM766.5 351L791 351L794 348.3L825 348.3L828 351L874 351L876.6 353.6L876.6 382L878.3 384L878.3 405L876.6 407L876.6 434.8L874 437.4L833 437.4L830.5 439L771 439L768 437.4L766.5 435.5L766.5 398L763.8 395L763.8 353.6ZM1080 351L1099 351L1100 350.2L1125 350.2L1128 348.3L1158.6 348.3L1161.5 351L1189 351L1191.6 353.6L1191.6 395L1187.6 399L1187.6 434.8L1185 437.4L1122 437.4L1119.5 435.2L1080 435.2L1077.3 432.6L1077.3 408L1075.6 406L1075.6 384L1077.3 382L1077.3 353.6ZM1344 415.8L1414 415.8L1415.5 417.3L1415.5 420.5L1417 421.8L1421 421.8L1423.3 424L1423.3 477L1421 479.4L1417 479.4L1415.5 481L1415.5 485.5L1413 488.3L1344 488.3L1341.4 485.7L1341.4 418.4Z" fill="#fff"/>
<text x="703.3" y="273.2" font-family="Liberation Sans,sans-serif" font-size="17" fill="#b8c8b0" fill-opacity="0.22" text-anchor="middle" transform="rotate(-42.2 703.3 267.4)" textLength="99" lengthAdjust="spacing">XZZ@XZZHK</text>
<text x="1153.3" y="273.2" font-family="Liberation Sans,sans-serif" font-size="17" fill="#b8c8b0" fill-opacity="0.22" text-anchor="middle" transform="rotate(-42.2 1153.3 267.4)" textLength="99" lengthAdjust="spacing">XZZ@XZZHK</text>
<text x="703.3" y="673.1999999999999" font-family="Liberation Sans,sans-serif" font-size="17" fill="#b8c8b0" fill-opacity="0.22" text-anchor="middle" transform="rotate(-42.2 703.3 667.4)" textLength="99" lengthAdjust="spacing">XZZ@XZZHK</text>
<text x="1153.3" y="673.1999999999999" font-family="Liberation Sans,sans-serif" font-size="17" fill="#b8c8b0" fill-opacity="0.22" text-anchor="middle" transform="rotate(-42.2 1153.3 667.4)" textLength="99" lengthAdjust="spacing">XZZ@XZZHK</text>
</svg>
<div class="abs" style="left:442px;top:132px;width:34px;height:335px;background:#fff;border:1px solid #e4e4e4;border-left:none;border-radius:0 4px 4px 0;box-shadow:1px 1px 2px rgba(0,0,0,0.08)"></div>
<div class="abs" style="left:446px;top:137px;width:24px;height:24px;background:#024d02;border-radius:2px;color:#f0f0f0;font-family:'Liberation Serif',serif;font-size:15px;line-height:24px;text-align:center;letter-spacing:0">1</div>
<div class="abs" style="left:446px;top:167px;width:24px;height:24px;background:#4d4d4d;border-radius:2px;color:#f0f0f0;font-family:'Liberation Serif',serif;font-size:15px;line-height:24px;text-align:center;letter-spacing:0">2</div>
<div class="abs" style="left:446px;top:197px;width:24px;height:24px;background:#4d4d4d;border-radius:2px;color:#f0f0f0;font-family:'Liberation Serif',serif;font-size:15px;line-height:24px;text-align:center;letter-spacing:0">3</div>
<div class="abs" style="left:446px;top:227px;width:24px;height:24px;background:#4d4d4d;border-radius:2px;color:#f0f0f0;font-family:'Liberation Serif',serif;font-size:15px;line-height:24px;text-align:center;letter-spacing:0">4</div>
<div class="abs" style="left:446px;top:257px;width:24px;height:24px;background:#4d4d4d;border-radius:2px;color:#f0f0f0;font-family:'Liberation Serif',serif;font-size:15px;line-height:24px;text-align:center;letter-spacing:0">5</div>
<div class="abs" style="left:446px;top:287px;width:24px;height:24px;background:#4d4d4d;border-radius:2px;color:#f0f0f0;font-family:'Liberation Serif',serif;font-size:15px;line-height:24px;text-align:center;letter-spacing:0">6</div>
<div class="abs" style="left:446px;top:317px;width:24px;height:24px;background:#4d4d4d;border-radius:2px;color:#f0f0f0;font-family:'Liberation Serif',serif;font-size:15px;line-height:24px;text-align:center;letter-spacing:0">7</div>
<div class="abs" style="left:446px;top:347px;width:24px;height:24px;background:#4d4d4d;border-radius:2px;color:#f0f0f0;font-family:'Liberation Serif',serif;font-size:15px;line-height:24px;text-align:center;letter-spacing:0">8</div>
<div class="abs" style="left:446px;top:377px;width:24px;height:24px;background:#4d4d4d;border-radius:2px;color:#f0f0f0;font-family:'Liberation Serif',serif;font-size:15px;line-height:24px;text-align:center;letter-spacing:0">9</div>
<div class="abs" style="left:446px;top:407px;width:24px;height:24px;background:#0b8a3e;border-radius:2px;color:#f0f0f0;font-family:'Liberation Serif',serif;font-size:15px;line-height:24px;text-align:center;letter-spacing:-0.5px">10</div>
<div class="abs" style="left:446px;top:437px;width:24px;height:24px;background:#4d4d4d;border-radius:2px;color:#f0f0f0;font-family:'Liberation Serif',serif;font-size:12.5px;line-height:24px;text-align:center;letter-spacing:-1px">ALL</div><svg class="ic" style="left:0;top:0" width="1523" height="858" viewBox="0 0 1523 858"><g fill="none" stroke="#fff" stroke-width="2" stroke-linecap="round"><circle cx="400" cy="91.600" r="7.800"/><path d="M405.400 97.800L407.600 100.200"/></g><path d="M343.400 89L349.200 94.800L355 89" fill="none" stroke="#b0b0b0" stroke-width="1.400"/><path d="M419.800 122.800L424.400 117.800L429 122.800" fill="none" stroke="#555" stroke-width="1.200"/><rect x="419.500" y="562" width="9.700" height="48" rx="4.850" fill="#6a6a6a"/><path d="M431 409L440 422V505L431 520Z" fill="#dcebfd" stroke="#a8d0fb" stroke-width="0.800"/><path d="M436.600 457.600L432.800 462L436.600 466.400" fill="none" stroke="#4b94fa" stroke-width="1.200"/><path d="M1523.500 430.500L1514.300 443V530L1523.500 541Z" fill="#dcebfd" stroke="#a8d0fb" stroke-width="0.800"/><path d="M1520.200 484L1516.400 488.400L1520.200 492.800" fill="none" stroke="#4b94fa" stroke-width="1.200"/></svg>
<div id="status" class="abs">XZZ Schematics https://www.xzztools.com</div>
</body></html>
